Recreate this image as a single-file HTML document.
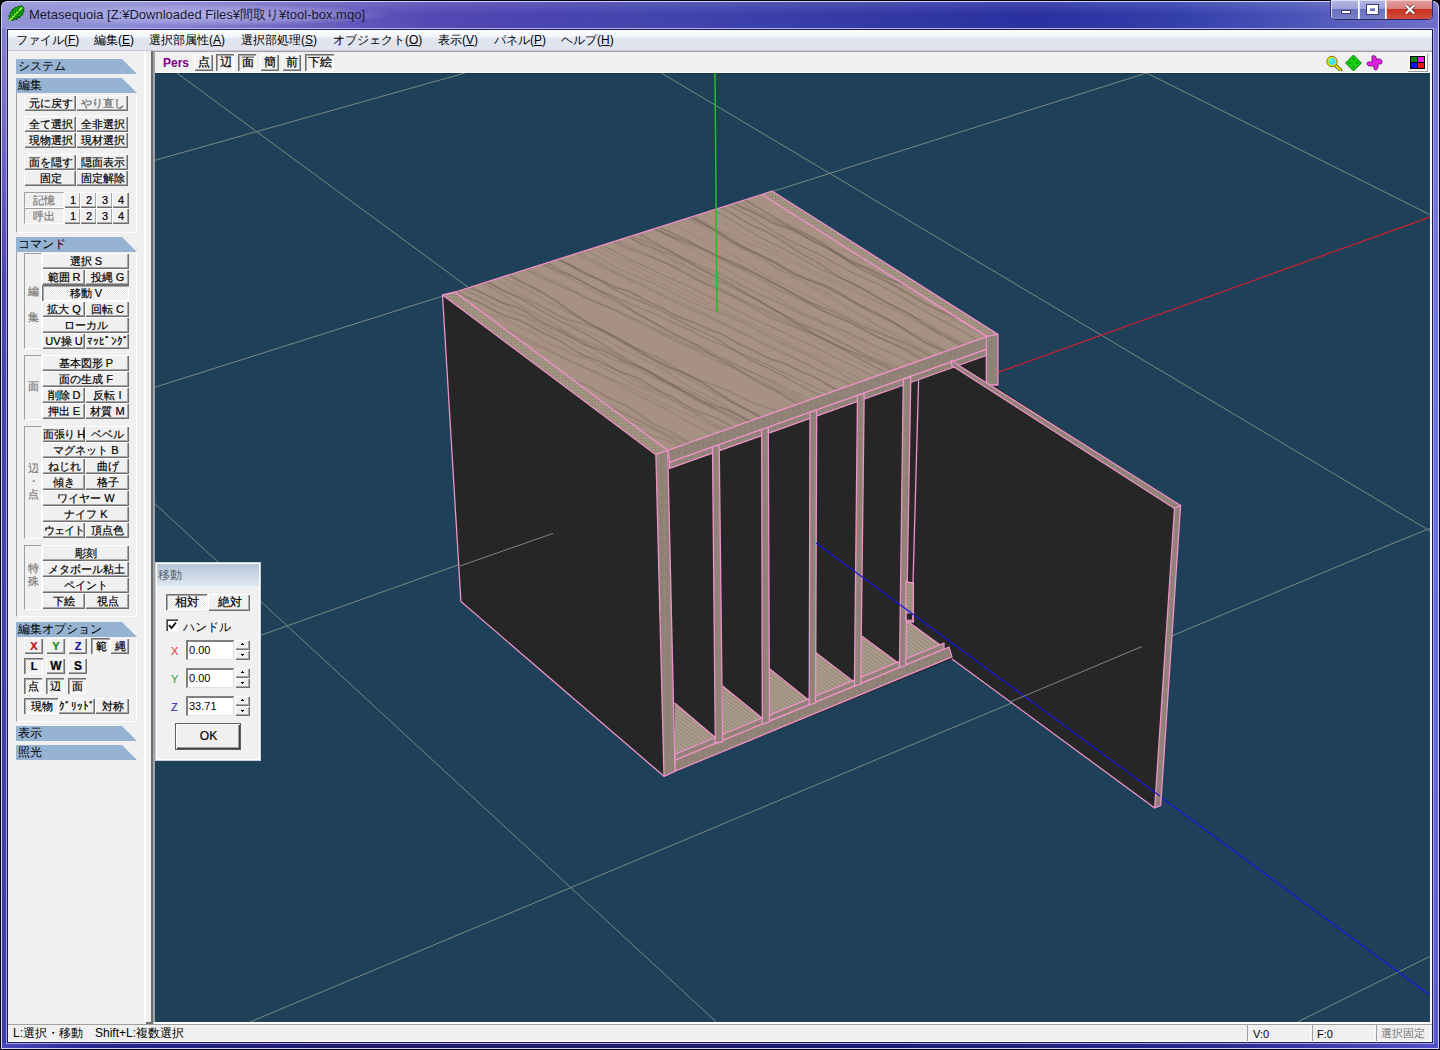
<!DOCTYPE html><html><head><meta charset="utf-8"><style>
*{margin:0;padding:0;box-sizing:border-box}
html,body{width:1440px;height:1050px;overflow:hidden;background:#000}
body{font-family:"Liberation Sans",sans-serif;position:relative}
.abs{position:absolute}
.t{position:absolute;white-space:nowrap;line-height:1}
.btn{position:absolute;background:#f0f0f0;border-top:1px solid #fff;border-left:1px solid #fff;
 box-shadow:inset -1px -1px 0 #6e6e6e, inset -2px -2px 0 #a8a8a8;font-size:11px;color:#000;
 text-align:center;white-space:nowrap;line-height:14px;overflow:hidden;-webkit-text-stroke:0.2px #000}
.btn.p{border-top:1px solid #6e6e6e;border-left:1px solid #6e6e6e;box-shadow:inset 1px 1px 0 #a8a8a8, inset -1px -1px 0 #fff;
 background:repeating-conic-gradient(#fdfdfd 0 25%,#e6e6e6 0 50%) 0 0/2px 2px}
.hdr{position:absolute;left:16px;width:121px;height:15px;background:#96b3d3;
 clip-path:polygon(0 0,106px 0,121px 15px,0 15px);font-size:12px;line-height:15px;padding-left:2px;color:#000}
.box{position:absolute;border-left:1px solid #a0a0a0;border-top:1px solid #fff}
.sub{position:absolute;border-left:1px solid #a0a0a0;border-top:1px solid #a0a0a0;border-right:1px solid #fff;border-bottom:1px solid #fff}
</style></head><body>
<div class="abs" style="left:0;top:0;width:1440px;height:1050px;background:#04040c;border-radius:7px 7px 0 0"></div>
<div class="abs" style="left:1px;top:1px;width:1438px;height:1048px;border-radius:6px 6px 0 0;background:#d0d0f8"></div>
<div class="abs" style="left:2px;top:20px;width:5px;height:1027px;background:linear-gradient(#8484cc 0,#7464c4 12%,#4a44b4 26%,#4040b0 60%,#3c3cac 100%)"></div>
<div class="abs" style="left:1433px;top:20px;width:5px;height:1027px;background:linear-gradient(#7c7cd0 0,#6c70e0 40%,#6464d8 80%,#5a58c8 100%)"></div>
<div class="abs" style="left:2px;top:1043px;width:1436px;height:5px;background:linear-gradient(90deg,#4a48c0 0,#2a2690 6%,#1e1a68 25%,#1e1c70 60%,#2a2a90 85%,#5050c8 100%)"></div>
<div class="abs" style="left:6px;top:28px;width:1428px;height:1016px;border:1px solid #a8a8e8;border-top-color:#b8b8f0"></div>
<div class="abs" style="left:2px;top:2px;width:1436px;height:26px;border-radius:5px 5px 0 0;background:linear-gradient(90deg,#9494d8 0,#8c8cd4 8%,#7c74c8 16%,#6458bc 24%,#5448b4 30%,#4a44b0 38%,#4446ae 44%,#3c40aa 52%,#3238a4 62%,#2a30a0 72%,#3440ac 82%,#4a54b8 90%,#7070c8 100%)"></div>
<div class="abs" style="left:2px;top:2px;width:1436px;height:12px;border-radius:5px 5px 0 0;background:linear-gradient(rgba(255,255,255,.12),rgba(255,255,255,0))"></div>
<div class="abs" style="left:20px;top:4px;width:370px;height:22px;border-radius:11px;background:radial-gradient(ellipse at center,rgba(215,215,250,.6),rgba(215,215,250,.25) 50%,rgba(215,215,250,0) 72%)"></div>
<svg class="abs" style="left:7px;top:5px" width="18" height="18" viewBox="0 0 18 18"><path d="M2 16 L2.5 12 L1.5 11 L3.5 9 L3 7.5 L5 6.5 L5 4.5 L7 4 L8 2.5 L10 2.5 L11.5 1 L13 1.5 L15 0.8 L16 2 L17 3.5 L16.5 5 L17 7 L15.5 8 L15.5 10 L13.5 10.5 L13 12.5 L11 12.5 L10 14.5 L8 14 L6.5 15.5 L4.5 15 Z" fill="#10b010" stroke="#064806" stroke-width="0.9"/><path d="M2 16 L15 2.5" stroke="#c8ff50" stroke-width="1.3"/><path d="M5 13 L3.5 10 M7 11 L5.5 6.5 M9 9 L8 4.5 M11 7 L11 3 M6 13 L10 13.5 M8 11 L13 11.5 M10 9 L15 8.5 M12 7 L16 5" stroke="#066006" stroke-width="0.9"/></svg>
<div class="t" style="left:29px;top:8px;font-size:13px;color:#1a1a30">Metasequoia [Z:¥Downloaded Files¥間取り¥tool-box.mqo]</div>
<div class="abs" style="left:1330px;top:0;width:103px;height:20px;border:1px solid #2a2a60;border-top:none;border-radius:0 0 5px 5px;overflow:hidden;background:#fff"><div class="abs" style="left:0;top:0;width:27px;height:19px;background:linear-gradient(#b4b8e4 0,#9ca2d8 45%,#6a72c0 50%,#7880c8 100%);box-shadow:inset 1px 1px 0 #d8dcf4"></div><div class="abs" style="left:28px;top:0;width:26px;height:19px;background:linear-gradient(#b4b8e4 0,#9ca2d8 45%,#6a72c0 50%,#7880c8 100%);box-shadow:inset 1px 1px 0 #d8dcf4"></div><div class="abs" style="left:55px;top:0;width:48px;height:19px;background:linear-gradient(#e4a0a0 0,#d88080 45%,#c83020 50%,#d05040 100%);box-shadow:inset 1px 1px 0 #f0c8c8"></div><div class="abs" style="left:10px;top:10px;width:10px;height:4px;background:#fff;border:1px solid #404070"></div><div class="abs" style="left:36px;top:5px;width:11px;height:9px;border:3px solid #fff;border-top-width:3px;outline:1px solid #404070"></div><svg class="abs" style="left:73px;top:4px" width="12" height="11" viewBox="0 0 12 11"><path d="M2 1.5 L10 9.5 M10 1.5 L2 9.5" stroke="#503030" stroke-width="3.6"/><path d="M2 1.5 L10 9.5 M10 1.5 L2 9.5" stroke="#fff" stroke-width="2.2"/></svg></div>
<div class="abs" style="left:7px;top:29px;width:1426px;height:1014px;background:#1a1a48"></div>
<div class="abs" style="left:8px;top:30px;width:1424px;height:1012px;background:#f0f0f0"></div>
<div class="abs" style="left:8px;top:30px;width:1424px;height:20px;background:linear-gradient(#fcfcfe 0,#f4f6fa 35%,#e2e6f0 40%,#dee3ef 100%)"></div>
<div class="abs" style="left:8px;top:50px;width:1424px;height:1px;background:#c8c8c8"></div>
<div class="t" style="left:16px;top:34px;font-size:12px;color:#000">ファイル(<u>F</u>)</div>
<div class="t" style="left:94px;top:34px;font-size:12px;color:#000">編集(<u>E</u>)</div>
<div class="t" style="left:149px;top:34px;font-size:12px;color:#000">選択部属性(<u>A</u>)</div>
<div class="t" style="left:241px;top:34px;font-size:12px;color:#000">選択部処理(<u>S</u>)</div>
<div class="t" style="left:333px;top:34px;font-size:12px;color:#000">オブジェクト(<u>O</u>)</div>
<div class="t" style="left:438px;top:34px;font-size:12px;color:#000">表示(<u>V</u>)</div>
<div class="t" style="left:494px;top:34px;font-size:12px;color:#000">パネル(<u>P</u>)</div>
<div class="t" style="left:561px;top:34px;font-size:12px;color:#000">ヘルプ(<u>H</u>)</div>
<div class="abs" style="left:144px;top:51px;width:2px;height:971px;background:#fff"></div>
<div class="abs" style="left:146px;top:51px;width:5px;height:971px;background:#eef0f2"></div>
<div class="abs" style="left:151px;top:51px;width:2px;height:973px;background:#6d6d6d"></div>
<div class="abs" style="left:153px;top:51px;width:2px;height:972px;background:#a0a4a8"></div>
<div class="abs" style="left:146px;top:1022px;width:7px;height:2px;background:#707070"></div>
<div class="hdr" style="top:59px">システム</div>
<div class="hdr" style="top:78px">編集</div>
<div class="abs" style="left:16px;top:93px;width:121px;height:140px;border-left:1px solid #a0a0a0;border-right:1px solid #fff;border-bottom:1px solid #fff"></div>
<div class="btn" style="left:24px;top:95px;width:52px;height:16px;">元に戻す</div>
<div class="btn" style="left:76px;top:95px;width:52px;height:16px;"><span style="color:#a0a0a0">やり直し</span></div>
<div class="btn" style="left:24px;top:116px;width:52px;height:16px;">全て選択</div>
<div class="btn" style="left:76px;top:116px;width:52px;height:16px;">全非選択</div>
<div class="btn" style="left:24px;top:132px;width:52px;height:16px;">現物選択</div>
<div class="btn" style="left:76px;top:132px;width:52px;height:16px;">現材選択</div>
<div class="btn" style="left:24px;top:154px;width:52px;height:16px;">面を隠す</div>
<div class="btn" style="left:76px;top:154px;width:52px;height:16px;">隠面表示</div>
<div class="btn" style="left:24px;top:170px;width:52px;height:16px;">固定</div>
<div class="btn" style="left:76px;top:170px;width:52px;height:16px;">固定解除</div>
<div class="abs" style="left:24px;top:192px;width:40px;height:16px;border-left:1px solid #a0a0a0;border-top:1px solid #a0a0a0;border-right:1px solid #fff;border-bottom:1px solid #fff;font-size:11px;color:#7a7a7a;text-align:center;line-height:14px;-webkit-text-stroke:0.2px #7a7a7a">記憶</div>
<div class="abs" style="left:24px;top:208px;width:40px;height:16px;border-left:1px solid #a0a0a0;border-top:1px solid #a0a0a0;border-right:1px solid #fff;border-bottom:1px solid #fff;font-size:11px;color:#7a7a7a;text-align:center;line-height:14px;-webkit-text-stroke:0.2px #7a7a7a">呼出</div>
<div class="btn" style="left:64px;top:192px;width:17px;height:16px;">1</div>
<div class="btn" style="left:64px;top:208px;width:17px;height:16px;">1</div>
<div class="btn" style="left:80px;top:192px;width:17px;height:16px;">2</div>
<div class="btn" style="left:80px;top:208px;width:17px;height:16px;">2</div>
<div class="btn" style="left:96px;top:192px;width:17px;height:16px;">3</div>
<div class="btn" style="left:96px;top:208px;width:17px;height:16px;">3</div>
<div class="btn" style="left:112px;top:192px;width:17px;height:16px;">4</div>
<div class="btn" style="left:112px;top:208px;width:17px;height:16px;">4</div>
<div class="hdr" style="top:237px">コマンド</div>
<div class="abs" style="left:16px;top:252px;width:121px;height:365px;border-left:1px solid #a0a0a0;border-right:1px solid #fff;border-bottom:1px solid #fff"></div>
<div class="abs" style="left:24px;top:253px;width:18px;height:96px;border-left:1px solid #a0a0a0;border-top:1px solid #a0a0a0;border-right:1px solid #fff;border-bottom:1px solid #fff"></div>
<div class="t" style="left:24px;top:285px;width:18px;font-size:11px;color:#7a7a7a;text-align:center;line-height:13px;white-space:normal;-webkit-text-stroke:0.2px #7a7a7a">編<br><br>集</div>
<div class="btn" style="left:42px;top:253px;width:87px;height:16px;">選択 S</div>
<div class="btn" style="left:42px;top:269px;width:43px;height:16px;">範囲 R</div>
<div class="btn" style="left:85px;top:269px;width:44px;height:16px;">投縄 G</div>
<div class="btn p" style="left:42px;top:285px;width:87px;height:16px;">移動 V</div>
<div class="btn" style="left:42px;top:301px;width:43px;height:16px;">拡大 Q</div>
<div class="btn" style="left:85px;top:301px;width:44px;height:16px;">回転 C</div>
<div class="btn" style="left:42px;top:317px;width:87px;height:16px;">ローカル</div>
<div class="btn" style="left:42px;top:333px;width:43px;height:16px;">UV操 U</div>
<div class="btn" style="left:85px;top:333px;width:44px;height:16px;">ﾏｯﾋﾟﾝｸﾞ</div>
<div class="abs" style="left:24px;top:355px;width:18px;height:65px;border-left:1px solid #a0a0a0;border-top:1px solid #a0a0a0;border-right:1px solid #fff;border-bottom:1px solid #fff"></div>
<div class="t" style="left:24px;top:380px;width:18px;font-size:11px;color:#7a7a7a;text-align:center;line-height:13px;white-space:normal;-webkit-text-stroke:0.2px #7a7a7a">面</div>
<div class="btn" style="left:42px;top:355px;width:87px;height:16px;">基本図形 P</div>
<div class="btn" style="left:42px;top:371px;width:87px;height:16px;">面の生成 F</div>
<div class="btn" style="left:42px;top:387px;width:43px;height:16px;">削除 D</div>
<div class="btn" style="left:85px;top:387px;width:44px;height:16px;">反転 I</div>
<div class="btn" style="left:42px;top:403px;width:43px;height:16px;">押出 E</div>
<div class="btn" style="left:85px;top:403px;width:44px;height:16px;">材質 M</div>
<div class="abs" style="left:24px;top:426px;width:18px;height:113px;border-left:1px solid #a0a0a0;border-top:1px solid #a0a0a0;border-right:1px solid #fff;border-bottom:1px solid #fff"></div>
<div class="t" style="left:24px;top:462px;width:18px;font-size:11px;color:#7a7a7a;text-align:center;line-height:13px;white-space:normal;-webkit-text-stroke:0.2px #7a7a7a">辺<br>・<br>点</div>
<div class="btn" style="left:42px;top:426px;width:43px;height:16px;"><span style="letter-spacing:-0.6px">面張り H</span></div>
<div class="btn" style="left:85px;top:426px;width:44px;height:16px;">ベベル</div>
<div class="btn" style="left:42px;top:442px;width:87px;height:16px;">マグネット B</div>
<div class="btn" style="left:42px;top:458px;width:43px;height:16px;">ねじれ</div>
<div class="btn" style="left:85px;top:458px;width:44px;height:16px;">曲げ</div>
<div class="btn" style="left:42px;top:474px;width:43px;height:16px;">傾き</div>
<div class="btn" style="left:85px;top:474px;width:44px;height:16px;">格子</div>
<div class="btn" style="left:42px;top:490px;width:87px;height:16px;">ワイヤー W</div>
<div class="btn" style="left:42px;top:506px;width:87px;height:16px;">ナイフ K</div>
<div class="btn" style="left:42px;top:522px;width:43px;height:16px;"><span style="letter-spacing:-0.8px">ウェイト</span></div>
<div class="btn" style="left:85px;top:522px;width:44px;height:16px;">頂点色</div>
<div class="abs" style="left:24px;top:545px;width:18px;height:65px;border-left:1px solid #a0a0a0;border-top:1px solid #a0a0a0;border-right:1px solid #fff;border-bottom:1px solid #fff"></div>
<div class="t" style="left:24px;top:562px;width:18px;font-size:11px;color:#7a7a7a;text-align:center;line-height:13px;white-space:normal;-webkit-text-stroke:0.2px #7a7a7a">特<br>殊</div>
<div class="btn" style="left:42px;top:545px;width:87px;height:16px;">彫刻</div>
<div class="btn" style="left:42px;top:561px;width:87px;height:16px;">メタボール粘土</div>
<div class="btn" style="left:42px;top:577px;width:87px;height:16px;">ペイント</div>
<div class="btn" style="left:42px;top:593px;width:43px;height:16px;">下絵</div>
<div class="btn" style="left:85px;top:593px;width:44px;height:16px;">視点</div>
<div class="hdr" style="top:622px">編集オプション</div>
<div class="abs" style="left:16px;top:637px;width:121px;height:85px;border-left:1px solid #a0a0a0;border-right:1px solid #fff;border-bottom:1px solid #fff"></div>
<div class="btn" style="left:24px;top:638px;width:19px;height:16px;"><b style="color:#e01010;font-size:11px">X</b></div>
<div class="btn" style="left:46px;top:638px;width:19px;height:16px;"><b style="color:#10a010;font-size:11px">Y</b></div>
<div class="btn" style="left:68px;top:638px;width:19px;height:16px;"><b style="color:#1010d0;font-size:11px">Z</b></div>
<div class="btn p" style="left:91px;top:638px;width:19px;height:16px;">範</div>
<div class="btn" style="left:110px;top:638px;width:19px;height:16px;">縄</div>
<div class="btn p" style="left:24px;top:658px;width:19px;height:16px;"><b style="font-size:11px">L</b></div>
<div class="btn" style="left:46px;top:658px;width:19px;height:16px;"><b style="font-size:12px">W</b></div>
<div class="btn" style="left:68px;top:658px;width:19px;height:16px;"><b style="font-size:12px">S</b></div>
<div class="btn p" style="left:24px;top:678px;width:18px;height:16px;">点</div>
<div class="btn p" style="left:46px;top:678px;width:18px;height:16px;">辺</div>
<div class="btn p" style="left:68px;top:678px;width:18px;height:16px;">面</div>
<div class="btn p" style="left:24px;top:698px;width:34px;height:16px;">現物</div>
<div class="btn" style="left:58px;top:698px;width:37px;height:16px;">ｸﾞﾘｯﾄﾞ</div>
<div class="btn" style="left:95px;top:698px;width:34px;height:16px;">対称</div>
<div class="hdr" style="top:726px">表示</div>
<div class="hdr" style="top:745px">照光</div>
<div class="abs" style="left:154px;top:51px;width:1278px;height:1px;background:#a0a0a0"></div>
<div class="abs" style="left:155px;top:52px;width:1275px;height:21px;background:#f0f0f0"></div>
<div class="abs" style="left:155px;top:72px;width:1275px;height:1px;background:#fafafa"></div>
<div class="abs" style="left:1430px;top:52px;width:2px;height:972px;background:#fff"></div>
<div class="t" style="left:163px;top:57px;font-size:12px;font-weight:bold;color:#800080">Pers</div>
<div class="btn" style="left:194px;top:54px;width:19px;height:17px;font-size:12px;line-height:15px">点</div>
<div class="btn p" style="left:216px;top:54px;width:18px;height:17px;font-size:12px;line-height:15px">辺</div>
<div class="btn p" style="left:238px;top:54px;width:18px;height:17px;font-size:12px;line-height:15px">面</div>
<div class="btn" style="left:260px;top:54px;width:19px;height:17px;font-size:12px;line-height:15px">簡</div>
<div class="btn" style="left:282px;top:54px;width:19px;height:17px;font-size:12px;line-height:15px">前</div>
<div class="btn p" style="left:305px;top:54px;width:29px;height:17px;font-size:12px;line-height:15px">下絵</div>
<svg class="abs" style="left:1325px;top:55px" width="18" height="16" viewBox="0 0 18 16"><path d="M10.5 10.5 L15.5 15" stroke="#404000" stroke-width="3.2" stroke-linecap="round"/><path d="M10.5 10.5 L15.5 15" stroke="#f0e800" stroke-width="1.8" stroke-linecap="round"/><circle cx="7" cy="6.5" r="5.2" fill="#f0e800" stroke="#606000" stroke-width="0.8"/><circle cx="7" cy="6.5" r="3.4" fill="#30e0f0"/><circle cx="6" cy="5.5" r="1" fill="#c0ffff"/></svg>
<svg class="abs" style="left:1345px;top:55px" width="17" height="16" viewBox="0 0 17 16"><path d="M8.5 0 L16.5 8 L8.5 16 L0.5 8 Z" fill="#10d010" stroke="#086008" stroke-width="0.8"/><path d="M8.5 3v2M8.5 11v2M3.5 8h2M11.5 8h2" stroke="#086008" stroke-width="1"/></svg>
<svg class="abs" style="left:1366px;top:55px" width="17" height="16" viewBox="0 0 17 16"><path d="M6 1 C9 0 11 2 10 4 L13 4 C16 4 17 7 15 9 L12 9 L12 12 C12 15 9 16 8 14 L8 11 L4 11 C1 11 0 8 2 7 L6 7 Z" fill="#e020e0" stroke="#700070" stroke-width="0.8"/></svg>
<div class="abs" style="left:1408px;top:54px;width:20px;height:18px;background:#f8f8f8;box-shadow:inset -1px -1px 0 #a0a0a0"></div>
<div class="abs" style="left:1410px;top:56px;width:15px;height:13px;background:#000"></div>
<div class="abs" style="left:1411px;top:57px;width:6px;height:5px;background:#108010"></div>
<div class="abs" style="left:1418px;top:57px;width:6px;height:5px;background:#f020f0"></div>
<div class="abs" style="left:1411px;top:63px;width:6px;height:5px;background:#1010f0"></div>
<div class="abs" style="left:1418px;top:63px;width:6px;height:5px;background:#f01010"></div>
<div class="abs" style="left:154px;top:1022px;width:1278px;height:2px;background:#fff"></div>
<div class="abs" style="left:8px;top:1024px;width:1424px;height:1px;background:#a0a0a0"></div>
<div class="abs" style="left:8px;top:1025px;width:1424px;height:16px;background:#f0f0f0"></div>
<div class="abs" style="left:8px;top:1041px;width:1424px;height:1px;background:#fff"></div>
<div class="t" style="left:13px;top:1027px;font-size:12px;color:#000">L:選択・移動　Shift+L:複数選択</div>
<div class="abs" style="left:1247px;top:1025px;width:64px;height:16px;border-left:1px solid #a0a0a0;border-right:1px solid #fff"></div>
<div class="abs" style="left:1312px;top:1025px;width:63px;height:16px;border-left:1px solid #a0a0a0;border-right:1px solid #fff"></div>
<div class="abs" style="left:1376px;top:1025px;width:55px;height:16px;border-left:1px solid #a0a0a0;border-right:1px solid #fff"></div>
<div class="t" style="left:1253px;top:1029px;font-size:11px;color:#000">V:0</div>
<div class="t" style="left:1317px;top:1029px;font-size:11px;color:#000">F:0</div>
<div class="t" style="left:1381px;top:1028px;font-size:11px;color:#707070">選択固定</div>
<svg class="abs" style="left:155px;top:73px" width="1275" height="949" viewBox="155 73 1275 949" shape-rendering="geometricPrecision">
<rect x="155" y="73" width="1275" height="949" fill="#1f4059"/>
<rect x="155" y="73" width="1275" height="1" fill="#1a3448"/>
<line x1="154" y1="160.5" x2="464.9" y2="73" stroke="#788a7e" stroke-width="1.0"/>
<line x1="154" y1="387.5" x2="1146.6" y2="73" stroke="#788a7e" stroke-width="1.0"/>
<line x1="154" y1="673.4" x2="998" y2="372.4" stroke="#788a7e" stroke-width="1.0"/>
<line x1="250" y1="1022" x2="1388.9" y2="545" stroke="#788a7e" stroke-width="1.0"/>
<line x1="1388.9" y1="545" x2="1430" y2="528.4" stroke="#788a7e" stroke-width="1.0"/>
<line x1="1297.4" y1="1022" x2="1430" y2="956.4" stroke="#788a7e" stroke-width="1.0"/>
<line x1="176.9" y1="73" x2="816" y2="543" stroke="#788a7e" stroke-width="1.0"/>
<line x1="154" y1="502.9" x2="716.3" y2="1022" stroke="#788a7e" stroke-width="1.0"/>
<line x1="661.3" y1="73" x2="1430" y2="531" stroke="#788a7e" stroke-width="1.0"/>
<line x1="1146.6" y1="73" x2="1430" y2="214.7" stroke="#788a7e" stroke-width="1.0"/>
<line x1="998" y1="372.4" x2="1430" y2="217" stroke="#d02030" stroke-width="1.2"/>
<line x1="816" y1="543" x2="1430" y2="995.3" stroke="#1818e0" stroke-width="1.2"/>
<defs>
<pattern id="stripTex" patternUnits="userSpaceOnUse" width="6" height="9"><rect width="6" height="9" fill="#918278"/><rect x="1" y="0" width="1" height="5" fill="#7e7066" opacity="0.3"/><rect x="4" y="3" width="1" height="6" fill="#a09086" opacity="0.35"/></pattern>
<pattern id="dotTex" patternUnits="userSpaceOnUse" width="3" height="3"><rect width="3" height="3" fill="#a29282"/><rect x="1" y="1" width="1" height="1" fill="#7e7264" opacity="0.6"/></pattern>
<pattern id="floorTex" patternUnits="userSpaceOnUse" width="3" height="3" patternTransform="rotate(35)"><rect width="3" height="3" fill="#ab9c8c"/><rect y="0" width="3" height="1" fill="#8e8072" opacity="0.7"/></pattern>
<clipPath id="topClip"><polygon points="455,292 762,194.5 987.2,336.6 667.7,450.5"/></clipPath>
<filter id="gblur" x="-5%" y="-5%" width="110%" height="110%"><feGaussianBlur stdDeviation="0.7"/></filter>
</defs>
<polygon points="442.5,295.0 772.0,191.0 997.9,334.4 997.9,388.0 1180.6,505.5 1160.7,805.3 1154.7,808.0 952.0,659.0 664.0,776.3 460.9,601.5" fill="#262626" />
<line x1="460" y1="566" x2="553" y2="533.4" stroke="#788a7e" stroke-width="1"/>
<polygon points="455.0,292.0 762.0,194.5 987.2,336.6 667.7,450.5" fill="#a69183" />
<g clip-path="url(#topClip)"><g filter="url(#gblur)">
<polyline points="430.0,-111.3 436.0,-108.0 442.0,-104.9 448.0,-101.8 454.0,-98.8 460.0,-95.8 466.0,-92.9 472.0,-89.9 478.0,-86.7 484.0,-83.4 490.0,-79.9 496.0,-76.5 502.0,-73.0 508.0,-69.7 514.0,-66.5 520.0,-63.5 526.0,-60.5 532.0,-57.5 538.0,-54.5 544.0,-51.4 550.0,-48.1 556.0,-44.9 562.0,-41.7 568.0,-38.5 574.0,-35.5 580.0,-32.7 586.0,-29.9 592.0,-27.1 598.0,-24.3 604.0,-21.3 610.0,-18.1 616.0,-14.9 622.0,-11.6 628.0,-8.3 634.0,-5.1 640.0,-2.0 646.0,1.1 652.0,4.1 658.0,7.2 664.0,10.3 670.0,13.6 676.0,17.0 682.0,20.5 688.0,23.9 694.0,27.2 700.0,30.4 706.0,33.4 712.0,36.3 718.0,39.1 724.0,42.1 730.0,45.1 736.0,48.2 742.0,51.4 748.0,54.6 754.0,57.7 760.0,60.8 766.0,63.7 772.0,66.5 778.0,69.3 784.0,72.2 790.0,75.2 796.0,78.4 802.0,81.7 808.0,85.1 814.0,88.5 820.0,91.8 826.0,95.0 832.0,98.1 838.0,101.2 844.0,104.2 850.0,107.4 856.0,110.6 862.0,113.9 868.0,117.3 874.0,120.6 880.0,123.9 886.0,127.0 892.0,130.0 898.0,132.8 904.0,135.6 910.0,138.5 916.0,141.4 922.0,144.4 928.0,147.6 934.0,150.8 940.0,154.0 946.0,157.1 952.0,160.1 958.0,163.1 964.0,166.0 970.0,168.9 976.0,172.0 982.0,175.2 988.0,178.5 994.0,182.0 1000.0,185.4 1006.0,188.8" fill="none" stroke="#5a4c44" stroke-width="1.0" opacity="0.25"/>
<polyline points="430.0,-101.9 436.0,-99.0 442.0,-96.6 448.0,-94.5 454.0,-92.0 460.0,-88.9 466.0,-85.7 472.0,-82.9 478.0,-80.3 484.0,-77.5 490.0,-74.1 496.0,-70.5 502.0,-67.2 508.0,-64.5 514.0,-62.0 520.0,-59.2 526.0,-56.1 532.0,-53.1 538.0,-50.7 544.0,-48.5 550.0,-46.1 556.0,-42.9 562.0,-39.6 568.0,-36.4 574.0,-33.6 580.0,-30.8 586.0,-27.6 592.0,-24.1 598.0,-20.8 604.0,-18.1 610.0,-15.9 616.0,-13.3 622.0,-10.4 628.0,-7.4 634.0,-4.8 640.0,-2.4 646.0,0.1 652.0,3.3 658.0,6.8 664.0,10.2 670.0,13.1 676.0,15.8 682.0,18.8 688.0,22.1 694.0,25.3 700.0,27.9 706.0,30.1 712.0,32.4 718.0,35.3 724.0,38.4 730.0,41.3 736.0,43.9 742.0,46.5 748.0,49.7 754.0,53.3 760.0,56.8 766.0,59.7 772.0,62.3 778.0,65.0 784.0,68.1 790.0,71.2 796.0,73.8 802.0,76.0 808.0,78.3 814.0,81.1 820.0,84.4 826.0,87.6 832.0,90.4 838.0,93.1 844.0,96.2 850.0,99.8 856.0,103.3 862.0,106.2 868.0,108.6 874.0,111.0 880.0,113.9 886.0,116.9 892.0,119.7 898.0,122.0 904.0,124.3 910.0,127.2 916.0,130.7 922.0,134.1 928.0,137.1 934.0,139.8 940.0,142.8 946.0,146.1 952.0,149.5 958.0,152.4 964.0,154.7 970.0,156.9 976.0,159.6 982.0,162.7 988.0,165.6 994.0,168.2 1000.0,170.7 1006.0,173.6" fill="none" stroke="#5a4c44" stroke-width="1.4" opacity="0.21"/>
<polyline points="430.0,-98.3 436.0,-94.7 442.0,-91.4 448.0,-88.2 454.0,-85.0 460.0,-81.4 466.0,-77.6 472.0,-73.6 478.0,-69.9 484.0,-66.4 490.0,-63.2 496.0,-59.9 502.0,-56.4 508.0,-52.8 514.0,-49.2 520.0,-45.9 526.0,-42.9 532.0,-40.0 538.0,-36.8 544.0,-33.3 550.0,-29.6 556.0,-26.0 562.0,-22.5 568.0,-19.2 574.0,-15.9 580.0,-12.2 586.0,-8.4 592.0,-4.5 598.0,-0.8 604.0,2.5 610.0,5.6 616.0,8.8 622.0,12.2 628.0,15.7 634.0,19.2 640.0,22.5 646.0,25.5 652.0,28.5 658.0,31.8 664.0,35.5 670.0,39.3 676.0,43.1 682.0,46.6 688.0,49.9 694.0,53.3 700.0,56.9 706.0,60.7 712.0,64.5 718.0,68.0 724.0,71.2 730.0,74.1 736.0,77.2 742.0,80.6 748.0,84.1 754.0,87.6 760.0,91.0 766.0,94.1 772.0,97.3 778.0,100.7 784.0,104.5 790.0,108.4 796.0,112.2 802.0,115.8 808.0,119.0 814.0,122.4 820.0,125.9 826.0,129.5 832.0,133.2 838.0,136.5 844.0,139.6 850.0,142.5 856.0,145.6 862.0,149.0 868.0,152.7 874.0,156.3 880.0,159.7 886.0,163.0 892.0,166.3 898.0,169.9 904.0,173.7 910.0,177.6 916.0,181.4 922.0,184.8 928.0,188.0 934.0,191.1 940.0,194.5 946.0,198.1 952.0,201.6 958.0,204.9 964.0,207.9 970.0,210.9 976.0,214.1 982.0,217.7 988.0,221.5 994.0,225.2 1000.0,228.7 1006.0,232.1" fill="none" stroke="#5a4c44" stroke-width="1.4" opacity="0.25"/>
<polyline points="430.0,-97.5 436.0,-94.3 442.0,-90.9 448.0,-87.4 454.0,-84.0 460.0,-80.7 466.0,-77.6 472.0,-74.7 478.0,-71.9 484.0,-69.1 490.0,-66.1 496.0,-63.0 502.0,-59.8 508.0,-56.7 514.0,-53.6 520.0,-50.7 526.0,-48.0 532.0,-45.4 538.0,-42.8 544.0,-40.0 550.0,-37.1 556.0,-34.0 562.0,-30.7 568.0,-27.4 574.0,-24.2 580.0,-21.2 586.0,-18.2 592.0,-15.3 598.0,-12.4 604.0,-9.3 610.0,-6.0 616.0,-2.6 622.0,0.8 628.0,4.2 634.0,7.4 640.0,10.3 646.0,13.1 652.0,15.8 658.0,18.5 664.0,21.4 670.0,24.4 676.0,27.6 682.0,30.7 688.0,33.7 694.0,36.6 700.0,39.3 706.0,42.0 712.0,44.7 718.0,47.5 724.0,50.6 730.0,53.9 736.0,57.2 742.0,60.6 748.0,63.9 754.0,67.0 760.0,70.0 766.0,72.9 772.0,75.9 778.0,79.0 784.0,82.2 790.0,85.6 796.0,88.9 802.0,92.1 808.0,95.1 814.0,97.9 820.0,100.6 826.0,103.2 832.0,105.9 838.0,108.7 844.0,111.7 850.0,114.9 856.0,118.0 862.0,121.1 868.0,124.0 874.0,126.8 880.0,129.6 886.0,132.4 892.0,135.4 898.0,138.7 904.0,142.0 910.0,145.5 916.0,148.9 922.0,152.2 928.0,155.3 934.0,158.2 940.0,161.1 946.0,164.0 952.0,167.0 958.0,170.1 964.0,173.3 970.0,176.6 976.0,179.6 982.0,182.5 988.0,185.2 994.0,187.8 1000.0,190.4 1006.0,193.1" fill="none" stroke="#5a4c44" stroke-width="1.4" opacity="0.13"/>
<polyline points="430.0,-92.2 436.0,-89.0 442.0,-84.8 448.0,-80.1 454.0,-75.9 460.0,-72.7 466.0,-70.0 472.0,-67.2 478.0,-63.7 484.0,-59.8 490.0,-56.4 496.0,-54.0 502.0,-52.2 508.0,-50.2 514.0,-47.4 520.0,-43.6 526.0,-39.7 532.0,-36.4 538.0,-33.6 544.0,-30.7 550.0,-27.1 556.0,-22.6 562.0,-18.1 568.0,-14.3 574.0,-11.5 580.0,-9.3 586.0,-6.7 592.0,-3.4 598.0,0.1 604.0,3.2 610.0,5.5 616.0,7.4 622.0,9.8 628.0,13.2 634.0,17.5 640.0,21.7 646.0,25.2 652.0,28.1 658.0,31.1 664.0,34.9 670.0,39.2 676.0,43.3 682.0,46.5 688.0,48.7 694.0,50.6 700.0,53.1 706.0,56.4 712.0,59.9 718.0,63.0 724.0,65.4 730.0,67.7 736.0,70.7 742.0,74.7 748.0,79.3 754.0,83.6 760.0,86.9 766.0,89.7 772.0,92.7 778.0,96.2 784.0,100.2 790.0,103.8 796.0,106.4 802.0,108.2 808.0,110.1 814.0,112.8 820.0,116.4 826.0,120.2 832.0,123.5 838.0,126.2 844.0,128.9 850.0,132.4 856.0,136.8 862.0,141.4 868.0,145.4 874.0,148.3 880.0,150.8 886.0,153.4 892.0,156.8 898.0,160.4 904.0,163.6 910.0,165.9 916.0,167.7 922.0,169.9 928.0,173.1 934.0,177.2 940.0,181.3 946.0,184.7 952.0,187.7 958.0,190.7 964.0,194.4 970.0,198.8 976.0,203.1 982.0,206.5 988.0,208.9 994.0,210.9 1000.0,213.4 1006.0,216.7" fill="none" stroke="#5a4c44" stroke-width="1.0" opacity="0.13"/>
<polyline points="430.0,-82.0 436.0,-78.4 442.0,-74.9 448.0,-71.8 454.0,-69.0 460.0,-66.4 466.0,-63.7 472.0,-60.9 478.0,-57.9 484.0,-54.7 490.0,-51.4 496.0,-48.2 502.0,-45.2 508.0,-42.4 514.0,-39.8 520.0,-37.3 526.0,-34.7 532.0,-31.9 538.0,-28.7 544.0,-25.3 550.0,-21.6 556.0,-18.0 562.0,-14.4 568.0,-11.1 574.0,-7.9 580.0,-5.0 586.0,-2.0 592.0,1.1 598.0,4.4 604.0,8.0 610.0,11.6 616.0,15.2 622.0,18.6 628.0,21.7 634.0,24.4 640.0,27.0 646.0,29.4 652.0,32.0 658.0,34.8 664.0,37.9 670.0,41.1 676.0,44.4 682.0,47.6 688.0,50.7 694.0,53.5 700.0,56.2 706.0,58.9 712.0,61.7 718.0,64.9 724.0,68.4 730.0,72.1 736.0,75.9 742.0,79.6 748.0,83.1 754.0,86.3 760.0,89.3 766.0,92.2 772.0,95.1 778.0,98.2 784.0,101.4 790.0,104.9 796.0,108.3 802.0,111.6 808.0,114.7 814.0,117.5 820.0,120.0 826.0,122.4 832.0,124.9 838.0,127.6 844.0,130.6 850.0,133.8 856.0,137.2 862.0,140.6 868.0,144.0 874.0,147.1 880.0,150.0 886.0,152.8 892.0,155.8 898.0,158.9 904.0,162.3 910.0,166.0 916.0,169.8 922.0,173.5 928.0,177.1 934.0,180.4 940.0,183.3 946.0,186.1 952.0,188.8 958.0,191.6 964.0,194.6 970.0,197.8 976.0,201.1 982.0,204.4 988.0,207.5 994.0,210.3 1000.0,213.0 1006.0,215.5" fill="none" stroke="#5a4c44" stroke-width="2.2" opacity="0.18"/>
<polyline points="430.0,-77.4 436.0,-75.0 442.0,-72.5 448.0,-69.7 454.0,-66.4 460.0,-62.8 466.0,-59.3 472.0,-56.1 478.0,-53.2 484.0,-50.3 490.0,-47.0 496.0,-43.3 502.0,-39.2 508.0,-35.2 514.0,-31.6 520.0,-28.5 526.0,-25.7 532.0,-22.8 538.0,-19.6 544.0,-16.1 550.0,-12.6 556.0,-9.5 562.0,-6.7 568.0,-4.3 574.0,-1.8 580.0,1.2 586.0,4.7 592.0,8.5 598.0,12.2 604.0,15.6 610.0,18.7 616.0,21.7 622.0,25.1 628.0,28.8 634.0,32.8 640.0,36.7 646.0,40.1 652.0,43.0 658.0,45.6 664.0,48.3 670.0,51.3 676.0,54.7 682.0,58.1 688.0,61.2 694.0,64.0 700.0,66.6 706.0,69.3 712.0,72.6 718.0,76.3 724.0,80.3 730.0,84.1 736.0,87.6 742.0,90.7 748.0,93.8 754.0,97.1 760.0,100.7 766.0,104.5 772.0,108.1 778.0,111.3 784.0,114.0 790.0,116.4 796.0,119.0 802.0,122.0 808.0,125.4 814.0,128.9 820.0,132.2 826.0,135.2 832.0,138.0 838.0,140.9 844.0,144.4 850.0,148.3 856.0,152.3 862.0,156.2 868.0,159.7 874.0,162.7 880.0,165.6 886.0,168.7 892.0,172.1 898.0,175.7 904.0,179.1 910.0,182.1 916.0,184.7 922.0,187.1 928.0,189.7 934.0,192.8 940.0,196.4 946.0,200.1 952.0,203.6 958.0,206.8 964.0,209.8 970.0,212.9 976.0,216.5 982.0,220.4 988.0,224.4 994.0,228.2 1000.0,231.4 1006.0,234.2" fill="none" stroke="#5a4c44" stroke-width="1.0" opacity="0.12"/>
<polyline points="430.0,-74.7 436.0,-71.3 442.0,-68.2 448.0,-65.2 454.0,-62.0 460.0,-58.5 466.0,-54.7 472.0,-50.9 478.0,-47.5 484.0,-44.5 490.0,-42.0 496.0,-39.6 502.0,-36.9 508.0,-33.9 514.0,-30.5 520.0,-27.2 526.0,-24.1 532.0,-21.3 538.0,-18.7 544.0,-15.9 550.0,-12.6 556.0,-8.9 562.0,-4.9 568.0,-1.0 574.0,2.5 580.0,5.6 586.0,8.5 592.0,11.5 598.0,14.8 604.0,18.4 610.0,21.9 616.0,25.2 622.0,28.1 628.0,30.5 634.0,32.8 640.0,35.4 646.0,38.5 652.0,41.9 658.0,45.4 664.0,48.8 670.0,51.8 676.0,54.7 682.0,57.6 688.0,60.9 694.0,64.7 700.0,68.7 706.0,72.6 712.0,76.1 718.0,79.1 724.0,81.9 730.0,84.6 736.0,87.7 742.0,91.0 748.0,94.4 754.0,97.6 760.0,100.4 766.0,102.9 772.0,105.3 778.0,108.0 784.0,111.1 790.0,114.7 796.0,118.5 802.0,122.1 808.0,125.3 814.0,128.4 820.0,131.4 826.0,134.7 832.0,138.3 838.0,142.2 844.0,146.0 850.0,149.4 856.0,152.3 862.0,154.8 868.0,157.3 874.0,160.1 880.0,163.3 886.0,166.7 892.0,169.9 898.0,172.9 904.0,175.5 910.0,178.0 916.0,180.9 922.0,184.2 928.0,188.0 934.0,191.9 940.0,195.7 946.0,199.1 952.0,202.1 958.0,205.1 964.0,208.2 970.0,211.7 976.0,215.4 982.0,219.0 988.0,222.2 994.0,224.9 1000.0,227.3 1006.0,229.7" fill="none" stroke="#5a4c44" stroke-width="0.8" opacity="0.13"/>
<polyline points="430.0,-70.1 436.0,-66.0 442.0,-62.2 448.0,-59.4 454.0,-57.1 460.0,-54.6 466.0,-51.4 472.0,-48.0 478.0,-45.2 484.0,-43.4 490.0,-42.1 496.0,-40.4 502.0,-37.7 508.0,-34.3 514.0,-31.2 520.0,-28.7 526.0,-26.5 532.0,-23.7 538.0,-20.0 544.0,-15.8 550.0,-12.2 556.0,-9.6 562.0,-7.7 568.0,-5.6 574.0,-2.8 580.0,0.4 586.0,3.0 592.0,4.8 598.0,6.2 604.0,8.1 610.0,11.2 616.0,14.9 622.0,18.4 628.0,21.2 634.0,23.6 640.0,26.4 646.0,30.0 652.0,34.0 658.0,37.3 664.0,39.5 670.0,41.1 676.0,42.9 682.0,45.5 688.0,48.5 694.0,51.2 700.0,53.2 706.0,54.9 712.0,57.3 718.0,60.7 724.0,64.7 730.0,68.5 736.0,71.4 742.0,73.7 748.0,76.3 754.0,79.6 760.0,83.2 766.0,86.1 772.0,88.0 778.0,89.4 784.0,91.0 790.0,93.7 796.0,96.9 802.0,99.9 808.0,102.3 814.0,104.4 820.0,107.0 826.0,110.7 832.0,114.8 838.0,118.6 844.0,121.3 850.0,123.4 856.0,125.6 862.0,128.5 868.0,131.7 874.0,134.4 880.0,136.2 886.0,137.6 892.0,139.4 898.0,142.3 904.0,145.8 910.0,149.3 916.0,152.0 922.0,154.3 928.0,157.1 934.0,160.8 940.0,164.8 946.0,168.3 952.0,170.7 958.0,172.4 964.0,174.3 970.0,176.9 976.0,179.9 982.0,182.6 988.0,184.5 994.0,186.1 1000.0,188.3 1006.0,191.5" fill="none" stroke="#5a4c44" stroke-width="1.8" opacity="0.12"/>
<polyline points="430.0,-64.3 436.0,-61.7 442.0,-58.7 448.0,-55.6 454.0,-52.3 460.0,-49.0 466.0,-45.8 472.0,-42.7 478.0,-39.8 484.0,-37.1 490.0,-34.4 496.0,-31.6 502.0,-28.7 508.0,-25.5 514.0,-22.1 520.0,-18.4 526.0,-14.7 532.0,-11.0 538.0,-7.5 544.0,-4.3 550.0,-1.4 556.0,1.3 562.0,3.9 568.0,6.4 574.0,9.0 580.0,11.8 586.0,14.8 592.0,18.0 598.0,21.1 604.0,24.3 610.0,27.2 616.0,30.0 622.0,32.4 628.0,34.8 634.0,37.0 640.0,39.4 646.0,41.9 652.0,44.8 658.0,47.9 664.0,51.3 670.0,54.8 676.0,58.3 682.0,61.7 688.0,64.9 694.0,67.9 700.0,70.7 706.0,73.5 712.0,76.4 718.0,79.4 724.0,82.6 730.0,86.0 736.0,89.6 742.0,93.2 748.0,96.7 754.0,100.0 760.0,103.0 766.0,105.7 772.0,108.2 778.0,110.5 784.0,112.9 790.0,115.3 796.0,118.0 802.0,121.0 808.0,124.0 814.0,127.2 820.0,130.3 826.0,133.3 832.0,136.0 838.0,138.6 844.0,141.0 850.0,143.5 856.0,146.0 862.0,148.8 868.0,151.9 874.0,155.3 880.0,158.9 886.0,162.5 892.0,166.2 898.0,169.7 904.0,172.9 910.0,175.9 916.0,178.8 922.0,181.5 928.0,184.3 934.0,187.2 940.0,190.4 946.0,193.7 952.0,197.1 958.0,200.5 964.0,203.7 970.0,206.8 976.0,209.5 982.0,212.0 988.0,214.3 994.0,216.5 1000.0,218.8 1006.0,221.3" fill="none" stroke="#5a4c44" stroke-width="1.2" opacity="0.25"/>
<polyline points="430.0,-57.9 436.0,-55.4 442.0,-52.8 448.0,-50.2 454.0,-47.3 460.0,-44.2 466.0,-40.9 472.0,-37.4 478.0,-33.8 484.0,-30.2 490.0,-26.7 496.0,-23.3 502.0,-20.2 508.0,-17.1 514.0,-14.1 520.0,-11.1 526.0,-7.9 532.0,-4.6 538.0,-1.1 544.0,2.7 550.0,6.6 556.0,10.5 562.0,14.3 568.0,18.0 574.0,21.4 580.0,24.5 586.0,27.5 592.0,30.2 598.0,33.0 604.0,35.7 610.0,38.6 616.0,41.7 622.0,45.0 628.0,48.3 634.0,51.7 640.0,55.1 646.0,58.3 652.0,61.3 658.0,64.1 664.0,66.8 670.0,69.4 676.0,72.0 682.0,74.7 688.0,77.7 694.0,80.9 700.0,84.4 706.0,88.0 712.0,91.8 718.0,95.6 724.0,99.3 730.0,102.9 736.0,106.2 742.0,109.4 748.0,112.4 754.0,115.5 760.0,118.6 766.0,121.9 772.0,125.4 778.0,129.0 784.0,132.7 790.0,136.5 796.0,140.2 802.0,143.7 808.0,147.0 814.0,150.0 820.0,152.8 826.0,155.4 832.0,158.0 838.0,160.6 844.0,163.3 850.0,166.3 856.0,169.4 862.0,172.7 868.0,176.1 874.0,179.5 880.0,182.8 886.0,186.0 892.0,189.0 898.0,191.8 904.0,194.6 910.0,197.3 916.0,200.2 922.0,203.3 928.0,206.7 934.0,210.3 940.0,214.1 946.0,218.0 952.0,221.9 958.0,225.7 964.0,229.4 970.0,232.8 976.0,236.0 982.0,239.0 988.0,242.0 994.0,245.0 1000.0,248.1 1006.0,251.3" fill="none" stroke="#5a4c44" stroke-width="0.8" opacity="0.29"/>
<polyline points="430.0,-54.7 436.0,-51.5 442.0,-48.0 448.0,-44.4 454.0,-40.5 460.0,-36.6 466.0,-32.8 472.0,-29.2 478.0,-25.9 484.0,-22.9 490.0,-20.0 496.0,-17.2 502.0,-14.3 508.0,-11.2 514.0,-7.9 520.0,-4.5 526.0,-1.1 532.0,2.2 538.0,5.3 544.0,8.2 550.0,10.9 556.0,13.6 562.0,16.3 568.0,19.3 574.0,22.6 580.0,26.1 586.0,29.9 592.0,33.7 598.0,37.4 604.0,40.9 610.0,44.2 616.0,47.3 622.0,50.4 628.0,53.6 634.0,57.0 640.0,60.6 646.0,64.3 652.0,68.1 658.0,71.8 664.0,75.3 670.0,78.4 676.0,81.3 682.0,84.0 688.0,86.7 694.0,89.4 700.0,92.4 706.0,95.6 712.0,98.9 718.0,102.4 724.0,105.7 730.0,109.0 736.0,112.0 742.0,114.9 748.0,117.7 754.0,120.6 760.0,123.7 766.0,127.1 772.0,130.8 778.0,134.6 784.0,138.5 790.0,142.3 796.0,146.0 802.0,149.3 808.0,152.4 814.0,155.5 820.0,158.6 826.0,161.8 832.0,165.2 838.0,168.7 844.0,172.3 850.0,175.9 856.0,179.2 862.0,182.3 868.0,185.1 874.0,187.7 880.0,190.3 886.0,193.0 892.0,195.9 898.0,199.1 904.0,202.5 910.0,206.0 916.0,209.6 922.0,213.0 928.0,216.2 934.0,219.3 940.0,222.3 946.0,225.3 952.0,228.5 958.0,232.0 964.0,235.7 970.0,239.6 976.0,243.5 982.0,247.4 988.0,250.9 994.0,254.2 1000.0,257.3 1006.0,260.2" fill="none" stroke="#5a4c44" stroke-width="1.8" opacity="0.19"/>
<polyline points="430.0,-44.5 436.0,-41.3 442.0,-38.3 448.0,-35.5 454.0,-33.0 460.0,-30.5 466.0,-27.9 472.0,-25.2 478.0,-22.3 484.0,-19.4 490.0,-16.4 496.0,-13.5 502.0,-10.8 508.0,-8.2 514.0,-5.8 520.0,-3.4 526.0,-0.8 532.0,2.0 538.0,5.0 544.0,8.2 550.0,11.5 556.0,14.8 562.0,17.9 568.0,20.8 574.0,23.6 580.0,26.4 586.0,29.2 592.0,32.1 598.0,35.3 604.0,38.5 610.0,41.8 616.0,44.9 622.0,47.9 628.0,50.5 634.0,53.0 640.0,55.4 646.0,57.8 652.0,60.4 658.0,63.2 664.0,66.1 670.0,69.1 676.0,72.1 682.0,74.9 688.0,77.6 694.0,80.2 700.0,82.7 706.0,85.4 712.0,88.2 718.0,91.3 724.0,94.6 730.0,98.0 736.0,101.3 742.0,104.5 748.0,107.5 754.0,110.3 760.0,113.0 766.0,115.7 772.0,118.5 778.0,121.5 784.0,124.6 790.0,127.7 796.0,130.8 802.0,133.6 808.0,136.3 814.0,138.7 820.0,141.1 826.0,143.4 832.0,146.0 838.0,148.7 844.0,151.7 850.0,154.8 856.0,157.9 862.0,160.9 868.0,163.8 874.0,166.5 880.0,169.2 886.0,171.9 892.0,174.8 898.0,177.9 904.0,181.2 910.0,184.6 916.0,187.9 922.0,191.1 928.0,194.1 934.0,196.8 940.0,199.4 946.0,202.0 952.0,204.6 958.0,207.4 964.0,210.3 970.0,213.4 976.0,216.4 982.0,219.2 988.0,221.9 994.0,224.4 1000.0,226.7 1006.0,229.1" fill="none" stroke="#5a4c44" stroke-width="1.0" opacity="0.13"/>
<polyline points="430.0,-43.0 436.0,-39.6 442.0,-36.3 448.0,-33.1 454.0,-30.1 460.0,-27.2 466.0,-24.5 472.0,-21.9 478.0,-19.3 484.0,-16.6 490.0,-13.8 496.0,-10.9 502.0,-7.8 508.0,-4.7 514.0,-1.4 520.0,1.7 526.0,4.8 532.0,7.8 538.0,10.7 544.0,13.5 550.0,16.3 556.0,19.2 562.0,22.2 568.0,25.4 574.0,28.7 580.0,32.2 586.0,35.7 592.0,39.2 598.0,42.6 604.0,45.8 610.0,48.9 616.0,51.9 622.0,54.7 628.0,57.6 634.0,60.5 640.0,63.5 646.0,66.6 652.0,69.8 658.0,73.0 664.0,76.2 670.0,79.3 676.0,82.3 682.0,85.2 688.0,87.9 694.0,90.5 700.0,93.1 706.0,95.7 712.0,98.5 718.0,101.5 724.0,104.6 730.0,107.8 736.0,111.1 742.0,114.4 748.0,117.6 754.0,120.8 760.0,123.8 766.0,126.7 772.0,129.6 778.0,132.6 784.0,135.6 790.0,138.8 796.0,142.1 802.0,145.6 808.0,149.1 814.0,152.5 820.0,155.9 826.0,159.1 832.0,162.1 838.0,165.0 844.0,167.8 850.0,170.5 856.0,173.3 862.0,176.1 868.0,179.1 874.0,182.2 880.0,185.3 886.0,188.5 892.0,191.6 898.0,194.6 904.0,197.5 910.0,200.2 916.0,202.9 922.0,205.5 928.0,208.3 934.0,211.1 940.0,214.1 946.0,217.3 952.0,220.6 958.0,224.0 964.0,227.5 970.0,230.8 976.0,234.1 982.0,237.2 988.0,240.2 994.0,243.2 1000.0,246.1 1006.0,249.1" fill="none" stroke="#5a4c44" stroke-width="1.4" opacity="0.17"/>
<polyline points="430.0,-39.2 436.0,-35.6 442.0,-32.0 448.0,-28.6 454.0,-25.4 460.0,-22.3 466.0,-19.3 472.0,-16.2 478.0,-12.8 484.0,-9.1 490.0,-5.2 496.0,-1.2 502.0,2.8 508.0,6.6 514.0,10.1 520.0,13.5 526.0,16.8 532.0,20.2 538.0,23.8 544.0,27.5 550.0,31.4 556.0,35.2 562.0,38.8 568.0,42.0 574.0,45.0 580.0,47.9 586.0,50.8 592.0,53.9 598.0,57.2 604.0,60.8 610.0,64.5 616.0,68.1 622.0,71.6 628.0,74.9 634.0,78.1 640.0,81.3 646.0,84.6 652.0,88.3 658.0,92.2 664.0,96.2 670.0,100.3 676.0,104.2 682.0,107.9 688.0,111.3 694.0,114.5 700.0,117.7 706.0,121.0 712.0,124.5 718.0,128.1 724.0,131.8 730.0,135.4 736.0,138.8 742.0,141.9 748.0,144.8 754.0,147.6 760.0,150.6 766.0,153.9 772.0,157.4 778.0,161.2 784.0,165.0 790.0,168.8 796.0,172.4 802.0,175.8 808.0,179.1 814.0,182.4 820.0,185.9 826.0,189.7 832.0,193.6 838.0,197.7 844.0,201.7 850.0,205.4 856.0,208.8 862.0,212.0 868.0,215.0 874.0,218.0 880.0,221.2 886.0,224.7 892.0,228.3 898.0,231.9 904.0,235.4 910.0,238.6 916.0,241.7 922.0,244.6 928.0,247.6 934.0,250.8 940.0,254.3 946.0,258.1 952.0,262.1 958.0,266.1 964.0,269.9 970.0,273.5 976.0,277.0 982.0,280.3 988.0,283.7 994.0,287.2 1000.0,291.0 1006.0,294.9" fill="none" stroke="#5a4c44" stroke-width="1.8" opacity="0.33"/>
<polyline points="430.0,-29.7 436.0,-26.7 442.0,-24.0 448.0,-21.5 454.0,-19.1 460.0,-16.2 466.0,-13.0 472.0,-9.6 478.0,-6.4 484.0,-3.5 490.0,-0.8 496.0,2.1 502.0,5.3 508.0,8.5 514.0,11.5 520.0,14.1 526.0,16.5 532.0,18.9 538.0,21.7 544.0,24.7 550.0,27.7 556.0,30.5 562.0,33.1 568.0,35.8 574.0,38.9 580.0,42.3 586.0,45.7 592.0,48.8 598.0,51.5 604.0,54.2 610.0,57.0 616.0,60.1 622.0,63.1 628.0,65.9 634.0,68.3 640.0,70.6 646.0,73.2 652.0,76.2 658.0,79.4 664.0,82.5 670.0,85.3 676.0,88.0 682.0,90.9 688.0,94.2 694.0,97.6 700.0,100.9 706.0,103.7 712.0,106.2 718.0,108.8 724.0,111.6 730.0,114.6 736.0,117.5 742.0,120.1 748.0,122.5 754.0,125.0 760.0,127.9 766.0,131.1 772.0,134.5 778.0,137.6 784.0,140.4 790.0,143.2 796.0,146.2 802.0,149.4 808.0,152.7 814.0,155.7 820.0,158.2 826.0,160.6 832.0,163.1 838.0,165.9 844.0,169.0 850.0,171.9 856.0,174.5 862.0,177.1 868.0,179.8 874.0,182.9 880.0,186.4 886.0,189.7 892.0,192.8 898.0,195.5 904.0,198.2 910.0,201.2 916.0,204.3 922.0,207.4 928.0,210.1 934.0,212.4 940.0,214.8 946.0,217.4 952.0,220.4 958.0,223.6 964.0,226.5 970.0,229.3 976.0,232.0 982.0,234.9 988.0,238.3 994.0,241.7 1000.0,244.9 1006.0,247.7" fill="none" stroke="#5a4c44" stroke-width="1.2" opacity="0.32"/>
<polyline points="430.0,-28.1 436.0,-24.5 442.0,-21.4 448.0,-18.5 454.0,-15.4 460.0,-11.9 466.0,-8.4 472.0,-5.4 478.0,-2.8 484.0,-0.4 490.0,2.4 496.0,5.7 502.0,9.3 508.0,12.6 514.0,15.6 520.0,18.5 526.0,21.9 532.0,25.8 538.0,29.7 544.0,33.1 550.0,36.0 556.0,38.7 562.0,41.6 568.0,45.0 574.0,48.3 580.0,51.2 586.0,53.7 592.0,56.3 598.0,59.3 604.0,62.9 610.0,66.7 616.0,70.1 622.0,73.2 628.0,76.2 634.0,79.7 640.0,83.5 646.0,87.1 652.0,90.3 658.0,92.9 664.0,95.4 670.0,98.3 676.0,101.6 682.0,104.9 688.0,107.9 694.0,110.5 700.0,113.3 706.0,116.7 712.0,120.5 718.0,124.4 724.0,127.8 730.0,130.8 736.0,133.8 742.0,137.2 748.0,140.8 754.0,144.2 760.0,147.0 766.0,149.5 772.0,152.0 778.0,155.0 784.0,158.4 790.0,161.8 796.0,164.9 802.0,167.7 808.0,170.8 814.0,174.4 820.0,178.3 826.0,182.1 832.0,185.4 838.0,188.2 844.0,191.0 850.0,194.2 856.0,197.7 862.0,200.9 868.0,203.6 874.0,206.0 880.0,208.6 886.0,211.9 892.0,215.5 898.0,219.1 904.0,222.3 910.0,225.3 916.0,228.5 922.0,232.2 928.0,236.1 934.0,239.6 940.0,242.6 946.0,245.2 952.0,247.9 958.0,251.0 964.0,254.3 970.0,257.5 976.0,260.2 982.0,262.8 988.0,265.7 994.0,269.2 1000.0,273.1 1006.0,276.8" fill="none" stroke="#5a4c44" stroke-width="1.0" opacity="0.35"/>
<polyline points="430.0,-19.2 436.0,-16.9 442.0,-14.7 448.0,-12.4 454.0,-9.9 460.0,-7.1 466.0,-4.2 472.0,-1.4 478.0,1.4 484.0,3.9 490.0,6.3 496.0,8.5 502.0,10.8 508.0,13.3 514.0,16.0 520.0,19.1 526.0,22.4 532.0,25.7 538.0,28.9 544.0,32.0 550.0,34.8 556.0,37.4 562.0,40.0 568.0,42.6 574.0,45.5 580.0,48.5 586.0,51.6 592.0,54.8 598.0,57.8 604.0,60.5 610.0,62.9 616.0,65.1 622.0,67.2 628.0,69.3 634.0,71.7 640.0,74.4 646.0,77.2 652.0,80.2 658.0,83.1 664.0,85.9 670.0,88.5 676.0,90.9 682.0,93.3 688.0,95.8 694.0,98.6 700.0,101.7 706.0,105.0 712.0,108.4 718.0,111.7 724.0,114.9 730.0,117.8 736.0,120.4 742.0,122.8 748.0,125.3 754.0,127.9 760.0,130.7 766.0,133.6 772.0,136.6 778.0,139.5 784.0,142.2 790.0,144.7 796.0,146.9 802.0,149.0 808.0,151.1 814.0,153.4 820.0,156.0 826.0,158.9 832.0,162.0 838.0,165.1 844.0,168.1 850.0,171.0 856.0,173.6 862.0,176.2 868.0,178.8 874.0,181.5 880.0,184.5 886.0,187.7 892.0,191.1 898.0,194.4 904.0,197.6 910.0,200.4 916.0,203.0 922.0,205.4 928.0,207.6 934.0,210.0 940.0,212.5 946.0,215.2 952.0,218.1 958.0,221.0 964.0,223.8 970.0,226.3 976.0,228.7 982.0,230.9 988.0,233.1 994.0,235.4 1000.0,238.1 1006.0,241.0" fill="none" stroke="#5a4c44" stroke-width="2.2" opacity="0.30"/>
<polyline points="430.0,-16.3 436.0,-14.1 442.0,-11.2 448.0,-7.9 454.0,-4.2 460.0,-0.8 466.0,2.3 472.0,4.9 478.0,7.5 484.0,10.2 490.0,13.4 496.0,17.0 502.0,20.7 508.0,24.0 514.0,26.7 520.0,28.8 526.0,30.7 532.0,32.6 538.0,34.9 544.0,37.7 550.0,40.8 556.0,43.7 562.0,46.3 568.0,48.4 574.0,50.5 580.0,52.7 586.0,55.6 592.0,59.0 598.0,62.8 604.0,66.6 610.0,69.9 616.0,72.8 622.0,75.3 628.0,77.8 634.0,80.6 640.0,83.7 646.0,87.1 652.0,90.4 658.0,93.1 664.0,95.2 670.0,97.0 676.0,98.7 682.0,100.8 688.0,103.5 694.0,106.6 700.0,109.8 706.0,112.8 712.0,115.4 718.0,117.7 724.0,120.1 730.0,122.9 736.0,126.3 742.0,130.1 748.0,134.0 754.0,137.5 760.0,140.4 766.0,142.8 772.0,145.0 778.0,147.3 784.0,150.1 790.0,153.1 796.0,156.2 802.0,159.0 808.0,161.3 814.0,163.2 820.0,164.9 826.0,166.9 832.0,169.5 838.0,172.7 844.0,176.2 850.0,179.7 856.0,182.7 862.0,185.4 868.0,187.9 874.0,190.6 880.0,193.7 886.0,197.3 892.0,201.1 898.0,204.6 904.0,207.5 910.0,209.9 916.0,211.8 922.0,213.8 928.0,216.1 934.0,218.8 940.0,221.9 946.0,224.8 952.0,227.4 958.0,229.5 964.0,231.4 970.0,233.5 976.0,236.1 982.0,239.4 988.0,243.1 994.0,246.8 1000.0,250.3 1006.0,253.2" fill="none" stroke="#5a4c44" stroke-width="1.8" opacity="0.20"/>
<polyline points="430.0,-11.5 436.0,-8.8 442.0,-5.7 448.0,-2.2 454.0,1.5 460.0,4.9 466.0,7.8 472.0,10.1 478.0,12.0 484.0,14.1 490.0,16.6 496.0,19.7 502.0,23.4 508.0,27.3 514.0,31.0 520.0,34.3 526.0,37.2 532.0,40.0 538.0,43.1 544.0,46.7 550.0,50.7 556.0,55.1 562.0,59.2 568.0,62.9 574.0,65.8 580.0,68.3 586.0,70.6 592.0,73.1 598.0,76.0 604.0,79.4 610.0,82.8 616.0,86.0 622.0,88.8 628.0,91.0 634.0,93.2 640.0,95.5 646.0,98.5 652.0,102.1 658.0,106.2 664.0,110.4 670.0,114.3 676.0,117.7 682.0,120.7 688.0,123.6 694.0,126.7 700.0,130.3 706.0,134.3 712.0,138.3 718.0,142.0 724.0,145.2 730.0,147.7 736.0,149.7 742.0,151.8 748.0,154.3 754.0,157.2 760.0,160.6 766.0,164.2 772.0,167.4 778.0,170.2 784.0,172.7 790.0,175.2 796.0,178.0 802.0,181.5 808.0,185.5 814.0,189.9 820.0,194.2 826.0,198.0 832.0,201.2 838.0,204.0 844.0,206.7 850.0,209.7 856.0,213.1 862.0,216.9 868.0,220.6 874.0,223.8 880.0,226.5 886.0,228.7 892.0,230.6 898.0,232.7 904.0,235.4 910.0,238.7 916.0,242.4 922.0,246.1 928.0,249.6 934.0,252.6 940.0,255.4 946.0,258.2 952.0,261.4 958.0,265.2 964.0,269.4 970.0,273.8 976.0,277.9 982.0,281.3 988.0,284.2 994.0,286.6 1000.0,289.1 1006.0,291.9" fill="none" stroke="#5a4c44" stroke-width="0.8" opacity="0.10"/>
<polyline points="430.0,-7.1 436.0,-3.8 442.0,-0.7 448.0,2.3 454.0,5.3 460.0,8.5 466.0,11.9 472.0,15.4 478.0,19.0 484.0,22.5 490.0,25.8 496.0,29.1 502.0,32.4 508.0,35.9 514.0,39.6 520.0,43.3 526.0,47.1 532.0,50.6 538.0,53.8 544.0,57.0 550.0,60.1 556.0,63.4 562.0,66.8 568.0,70.3 574.0,73.7 580.0,76.9 586.0,80.0 592.0,83.0 598.0,86.1 604.0,89.5 610.0,93.1 616.0,96.8 622.0,100.4 628.0,103.9 634.0,107.3 640.0,110.6 646.0,113.9 652.0,117.5 658.0,121.1 664.0,124.8 670.0,128.4 676.0,131.7 682.0,134.8 688.0,137.8 694.0,140.9 700.0,144.2 706.0,147.6 712.0,151.1 718.0,154.5 724.0,157.7 730.0,160.9 736.0,164.0 742.0,167.3 748.0,170.8 754.0,174.6 760.0,178.3 766.0,182.0 772.0,185.5 778.0,188.8 784.0,192.0 790.0,195.4 796.0,198.9 802.0,202.4 808.0,206.0 814.0,209.4 820.0,212.5 826.0,215.5 832.0,218.5 838.0,221.7 844.0,225.0 850.0,228.5 856.0,232.1 862.0,235.5 868.0,238.8 874.0,242.1 880.0,245.3 886.0,248.8 892.0,252.5 898.0,256.2 904.0,260.0 910.0,263.5 916.0,266.9 922.0,270.1 928.0,273.2 934.0,276.5 940.0,279.9 946.0,283.4 952.0,286.9 958.0,290.1 964.0,293.2 970.0,296.2 976.0,299.3 982.0,302.6 988.0,306.1 994.0,309.7 1000.0,313.4 1006.0,316.9" fill="none" stroke="#5a4c44" stroke-width="1.4" opacity="0.20"/>
<polyline points="430.0,1.7 436.0,5.1 442.0,8.1 448.0,10.6 454.0,12.7 460.0,14.8 466.0,17.1 472.0,19.6 478.0,22.5 484.0,25.5 490.0,28.5 496.0,31.3 502.0,33.7 508.0,35.7 514.0,37.6 520.0,39.6 526.0,41.8 532.0,44.6 538.0,47.8 544.0,51.3 550.0,54.9 556.0,58.4 562.0,61.5 568.0,64.3 574.0,66.9 580.0,69.5 586.0,72.3 592.0,75.4 598.0,78.8 604.0,82.4 610.0,85.9 616.0,89.1 622.0,91.8 628.0,94.0 634.0,96.0 640.0,97.8 646.0,99.9 652.0,102.2 658.0,105.0 664.0,108.0 670.0,111.1 676.0,113.9 682.0,116.5 688.0,118.8 694.0,120.9 700.0,123.1 706.0,125.7 712.0,128.6 718.0,132.1 724.0,135.8 730.0,139.6 736.0,143.2 742.0,146.4 748.0,149.2 754.0,151.7 760.0,154.2 766.0,156.7 772.0,159.6 778.0,162.8 784.0,166.1 790.0,169.3 796.0,172.3 802.0,174.8 808.0,176.9 814.0,178.6 820.0,180.4 826.0,182.4 832.0,184.8 838.0,187.6 844.0,190.8 850.0,194.1 856.0,197.2 862.0,200.1 868.0,202.6 874.0,205.0 880.0,207.5 886.0,210.2 892.0,213.3 898.0,216.8 904.0,220.6 910.0,224.4 916.0,228.0 922.0,231.1 928.0,233.7 934.0,236.0 940.0,238.2 946.0,240.5 952.0,243.1 958.0,246.0 964.0,249.0 970.0,252.1 976.0,254.9 982.0,257.4 988.0,259.4 994.0,261.3 1000.0,263.1 1006.0,265.2" fill="none" stroke="#5a4c44" stroke-width="1.2" opacity="0.36"/>
<polyline points="430.0,4.5 436.0,7.2 442.0,10.4 448.0,14.1 454.0,17.7 460.0,20.5 466.0,22.4 472.0,24.5 478.0,27.3 484.0,30.6 490.0,33.6 496.0,35.9 502.0,38.3 508.0,41.6 514.0,45.6 520.0,49.5 526.0,52.7 532.0,55.3 538.0,58.1 544.0,61.4 550.0,64.9 556.0,67.6 562.0,69.5 568.0,71.4 574.0,74.2 580.0,77.6 586.0,81.0 592.0,83.7 598.0,86.3 604.0,89.5 610.0,93.5 616.0,97.5 622.0,100.7 628.0,103.1 634.0,105.5 640.0,108.4 646.0,111.7 652.0,114.5 658.0,116.5 664.0,118.5 670.0,121.3 676.0,124.9 682.0,128.7 688.0,131.8 694.0,134.6 700.0,137.6 706.0,141.3 712.0,145.2 718.0,148.3 724.0,150.6 730.0,152.6 736.0,155.2 742.0,158.4 748.0,161.4 754.0,163.8 760.0,166.0 766.0,168.8 772.0,172.6 778.0,176.6 784.0,180.1 790.0,182.8 796.0,185.5 802.0,188.9 808.0,192.5 814.0,195.6 820.0,197.7 826.0,199.5 832.0,201.9 838.0,205.1 844.0,208.5 850.0,211.4 856.0,213.8 862.0,216.7 868.0,220.4 874.0,224.6 880.0,228.2 886.0,230.9 892.0,233.2 898.0,236.1 904.0,239.4 910.0,242.5 916.0,244.7 922.0,246.6 928.0,248.9 934.0,252.2 940.0,255.9 946.0,259.2 952.0,262.0 958.0,264.8 964.0,268.4 970.0,272.4 976.0,276.0 982.0,278.5 988.0,280.6 994.0,283.0 1000.0,286.1 1006.0,289.3" fill="none" stroke="#5a4c44" stroke-width="1.0" opacity="0.22"/>
<polyline points="430.0,10.7 436.0,14.7 442.0,18.1 448.0,20.9 454.0,23.3 460.0,25.8 466.0,28.8 472.0,32.0 478.0,35.0 484.0,37.5 490.0,39.6 496.0,41.8 502.0,44.6 508.0,48.1 514.0,51.9 520.0,55.3 526.0,58.3 532.0,61.0 538.0,64.1 544.0,67.6 550.0,71.5 556.0,75.0 562.0,77.7 568.0,80.0 574.0,82.1 580.0,84.7 586.0,87.8 592.0,91.0 598.0,93.8 604.0,96.2 610.0,98.5 616.0,101.3 622.0,104.8 628.0,108.7 634.0,112.5 640.0,115.7 646.0,118.5 652.0,121.2 658.0,124.4 664.0,127.9 670.0,131.4 676.0,134.2 682.0,136.4 688.0,138.4 694.0,140.7 700.0,143.7 706.0,147.0 712.0,150.3 718.0,153.1 724.0,155.6 730.0,158.4 736.0,161.8 742.0,165.7 748.0,169.6 754.0,173.0 760.0,175.8 766.0,178.3 772.0,180.9 778.0,184.1 784.0,187.4 790.0,190.4 796.0,192.7 802.0,194.7 808.0,196.9 814.0,199.8 820.0,203.3 826.0,206.9 832.0,210.2 838.0,213.0 844.0,215.8 850.0,218.9 856.0,222.6 862.0,226.5 868.0,230.0 874.0,232.8 880.0,235.0 886.0,237.3 892.0,240.0 898.0,243.2 904.0,246.3 910.0,249.0 916.0,251.3 922.0,253.5 928.0,256.3 934.0,259.8 940.0,263.7 946.0,267.4 952.0,270.5 958.0,273.3 964.0,276.1 970.0,279.5 976.0,283.1 982.0,286.6 988.0,289.4 994.0,291.6 1000.0,293.6 1006.0,296.0" fill="none" stroke="#5a4c44" stroke-width="1.8" opacity="0.24"/>
<polyline points="430.0,11.9 436.0,15.4 442.0,18.9 448.0,22.3 454.0,25.6 460.0,28.7 466.0,31.8 472.0,35.0 478.0,38.2 484.0,41.6 490.0,45.1 496.0,48.7 502.0,52.3 508.0,55.9 514.0,59.5 520.0,62.9 526.0,66.1 532.0,69.1 538.0,72.0 544.0,74.8 550.0,77.6 556.0,80.5 562.0,83.4 568.0,86.5 574.0,89.7 580.0,93.1 586.0,96.4 592.0,99.8 598.0,103.1 604.0,106.2 610.0,109.3 616.0,112.3 622.0,115.2 628.0,118.1 634.0,121.1 640.0,124.2 646.0,127.6 652.0,131.1 658.0,134.7 664.0,138.4 670.0,142.1 676.0,145.8 682.0,149.4 688.0,152.8 694.0,156.1 700.0,159.2 706.0,162.3 712.0,165.4 718.0,168.5 724.0,171.7 730.0,175.1 736.0,178.6 742.0,182.1 748.0,185.6 754.0,189.0 760.0,192.3 766.0,195.4 772.0,198.4 778.0,201.2 784.0,203.9 790.0,206.7 796.0,209.5 802.0,212.4 808.0,215.5 814.0,218.7 820.0,222.1 826.0,225.6 832.0,229.0 838.0,232.4 844.0,235.7 850.0,238.9 856.0,242.0 862.0,245.1 868.0,248.1 874.0,251.2 880.0,254.5 886.0,257.9 892.0,261.4 898.0,265.1 904.0,268.8 910.0,272.6 916.0,276.3 922.0,279.8 928.0,283.2 934.0,286.4 940.0,289.4 946.0,292.4 952.0,295.3 958.0,298.3 964.0,301.4 970.0,304.7 976.0,308.0 982.0,311.4 988.0,314.8 994.0,318.1 1000.0,321.3 1006.0,324.4" fill="none" stroke="#5a4c44" stroke-width="1.0" opacity="0.23"/>
<polyline points="430.0,21.5 436.0,24.8 442.0,28.0 448.0,30.9 454.0,33.6 460.0,36.3 466.0,39.4 472.0,43.1 478.0,47.0 484.0,50.6 490.0,53.8 496.0,56.6 502.0,59.5 508.0,62.7 514.0,66.1 520.0,69.5 526.0,72.4 532.0,74.9 538.0,77.2 544.0,79.7 550.0,82.8 556.0,86.3 562.0,89.7 568.0,92.8 574.0,95.6 580.0,98.5 586.0,101.9 592.0,105.6 598.0,109.5 604.0,113.0 610.0,116.0 616.0,118.6 622.0,121.3 628.0,124.3 634.0,127.6 640.0,130.8 646.0,133.6 652.0,136.0 658.0,138.4 664.0,141.2 670.0,144.6 676.0,148.2 682.0,151.8 688.0,155.1 694.0,158.0 700.0,161.0 706.0,164.3 712.0,168.0 718.0,171.7 724.0,175.0 730.0,177.7 736.0,180.1 742.0,182.6 748.0,185.6 754.0,188.8 760.0,192.0 766.0,194.9 772.0,197.5 778.0,200.1 784.0,203.2 790.0,206.7 796.0,210.6 802.0,214.3 808.0,217.5 814.0,220.4 820.0,223.3 826.0,226.5 832.0,230.0 838.0,233.5 844.0,236.5 850.0,239.0 856.0,241.3 862.0,243.8 868.0,246.8 874.0,250.2 880.0,253.6 886.0,256.6 892.0,259.4 898.0,262.2 904.0,265.5 910.0,269.2 916.0,273.1 922.0,276.7 928.0,279.8 934.0,282.5 940.0,285.2 946.0,288.3 952.0,291.6 958.0,294.9 964.0,297.7 970.0,300.2 976.0,302.5 982.0,305.2 988.0,308.4 994.0,312.0 1000.0,315.5 1006.0,318.7" fill="none" stroke="#5a4c44" stroke-width="1.8" opacity="0.16"/>
<polyline points="430.0,26.7 436.0,29.8 442.0,33.0 448.0,36.4 454.0,40.0 460.0,43.9 466.0,47.9 472.0,52.0 478.0,55.9 484.0,59.6 490.0,63.0 496.0,66.0 502.0,68.7 508.0,71.3 514.0,73.9 520.0,76.7 526.0,79.6 532.0,82.8 538.0,86.2 544.0,89.8 550.0,93.3 556.0,96.7 562.0,99.9 568.0,102.9 574.0,105.7 580.0,108.4 586.0,111.2 592.0,114.2 598.0,117.5 604.0,121.2 610.0,125.1 616.0,129.2 622.0,133.4 628.0,137.5 634.0,141.3 640.0,144.9 646.0,148.2 652.0,151.3 658.0,154.4 664.0,157.5 670.0,160.8 676.0,164.4 682.0,168.1 688.0,171.9 694.0,175.7 700.0,179.3 706.0,182.7 712.0,185.8 718.0,188.6 724.0,191.1 730.0,193.6 736.0,196.1 742.0,198.9 748.0,201.9 754.0,205.2 760.0,208.7 766.0,212.4 772.0,216.1 778.0,219.6 784.0,223.0 790.0,226.1 796.0,229.1 802.0,232.1 808.0,235.1 814.0,238.4 820.0,242.0 826.0,245.8 832.0,249.9 838.0,254.1 844.0,258.3 850.0,262.3 856.0,266.0 862.0,269.4 868.0,272.5 874.0,275.5 880.0,278.4 886.0,281.3 892.0,284.4 898.0,287.8 904.0,291.3 910.0,294.9 916.0,298.5 922.0,302.0 928.0,305.1 934.0,308.0 940.0,310.7 946.0,313.2 952.0,315.7 958.0,318.4 964.0,321.3 970.0,324.6 976.0,328.1 982.0,331.9 988.0,335.8 994.0,339.7 1000.0,343.4 1006.0,347.0" fill="none" stroke="#5a4c44" stroke-width="1.8" opacity="0.31"/>
<polyline points="430.0,30.1 436.0,32.9 442.0,35.7 448.0,38.5 454.0,41.5 460.0,44.7 466.0,48.1 472.0,51.6 478.0,55.1 484.0,58.4 490.0,61.7 496.0,64.7 502.0,67.7 508.0,70.7 514.0,73.8 520.0,77.2 526.0,80.7 532.0,84.5 538.0,88.4 544.0,92.3 550.0,96.0 556.0,99.6 562.0,102.9 568.0,106.1 574.0,109.2 580.0,112.3 586.0,115.6 592.0,118.9 598.0,122.4 604.0,126.0 610.0,129.6 616.0,133.0 622.0,136.2 628.0,139.1 634.0,141.9 640.0,144.7 646.0,147.4 652.0,150.4 658.0,153.5 664.0,156.9 670.0,160.5 676.0,164.1 682.0,167.6 688.0,171.1 694.0,174.4 700.0,177.6 706.0,180.7 712.0,183.8 718.0,187.2 724.0,190.7 730.0,194.4 736.0,198.3 742.0,202.1 748.0,205.9 754.0,209.5 760.0,212.9 766.0,216.0 772.0,219.0 778.0,221.9 784.0,225.0 790.0,228.1 796.0,231.4 802.0,234.8 808.0,238.3 814.0,241.7 820.0,245.0 826.0,248.0 832.0,250.9 838.0,253.7 844.0,256.5 850.0,259.5 856.0,262.6 862.0,266.0 868.0,269.7 874.0,273.4 880.0,277.2 886.0,280.8 892.0,284.3 898.0,287.7 904.0,290.9 910.0,294.1 916.0,297.3 922.0,300.7 928.0,304.3 934.0,308.0 940.0,311.8 946.0,315.6 952.0,319.1 958.0,322.4 964.0,325.5 970.0,328.4 976.0,331.2 982.0,334.1 988.0,337.0 994.0,340.2 1000.0,343.5 1006.0,346.9" fill="none" stroke="#5a4c44" stroke-width="1.2" opacity="0.17"/>
<polyline points="430.0,37.6 436.0,41.6 442.0,45.1 448.0,48.2 454.0,51.2 460.0,54.6 466.0,58.3 472.0,62.4 478.0,66.3 484.0,69.9 490.0,72.9 496.0,75.3 502.0,77.6 508.0,80.1 514.0,83.1 520.0,86.7 526.0,90.6 532.0,94.6 538.0,98.4 544.0,101.7 550.0,104.7 556.0,107.9 562.0,111.4 568.0,115.4 574.0,119.9 580.0,124.6 586.0,129.0 592.0,132.8 598.0,135.9 604.0,138.7 610.0,141.5 616.0,144.6 622.0,148.1 628.0,151.9 634.0,155.6 640.0,159.0 646.0,161.8 652.0,164.3 658.0,166.7 664.0,169.4 670.0,172.7 676.0,176.6 682.0,180.9 688.0,185.2 694.0,189.2 700.0,192.8 706.0,196.0 712.0,199.2 718.0,202.8 724.0,206.9 730.0,211.3 736.0,215.7 742.0,219.7 748.0,223.2 754.0,226.0 760.0,228.5 766.0,231.0 772.0,233.9 778.0,237.3 784.0,241.0 790.0,244.7 796.0,248.1 802.0,251.1 808.0,253.7 814.0,256.4 820.0,259.5 826.0,263.2 832.0,267.5 838.0,272.0 844.0,276.5 850.0,280.6 856.0,284.2 862.0,287.3 868.0,290.5 874.0,293.9 880.0,297.8 886.0,301.9 892.0,306.0 898.0,309.7 904.0,312.8 910.0,315.3 916.0,317.6 922.0,320.0 928.0,322.9 934.0,326.4 940.0,330.3 946.0,334.2 952.0,337.8 958.0,341.1 964.0,344.0 970.0,347.0 976.0,350.4 982.0,354.4 988.0,358.9 994.0,363.6 1000.0,368.0 1006.0,372.0" fill="none" stroke="#5a4c44" stroke-width="1.0" opacity="0.12"/>
<polyline points="430.0,39.0 436.0,42.4 442.0,45.7 448.0,49.2 454.0,53.0 460.0,57.0 466.0,61.1 472.0,64.8 478.0,68.0 484.0,70.8 490.0,73.5 496.0,76.5 502.0,79.9 508.0,83.5 514.0,87.2 520.0,90.5 526.0,93.6 532.0,96.6 538.0,99.7 544.0,103.3 550.0,107.4 556.0,111.6 562.0,115.8 568.0,119.5 574.0,122.9 580.0,126.1 586.0,129.4 592.0,133.0 598.0,136.9 604.0,140.7 610.0,144.2 616.0,147.2 622.0,149.9 628.0,152.6 634.0,155.6 640.0,159.0 646.0,162.8 652.0,166.6 658.0,170.2 664.0,173.5 670.0,176.6 676.0,180.0 682.0,183.7 688.0,187.8 694.0,192.1 700.0,196.2 706.0,199.8 712.0,203.0 718.0,206.0 724.0,209.1 730.0,212.5 736.0,216.2 742.0,219.9 748.0,223.2 754.0,226.2 760.0,228.9 766.0,231.7 772.0,234.9 778.0,238.5 784.0,242.5 790.0,246.6 796.0,250.3 802.0,253.8 808.0,257.1 814.0,260.5 820.0,264.2 826.0,268.3 832.0,272.4 838.0,276.3 844.0,279.7 850.0,282.7 856.0,285.5 862.0,288.4 868.0,291.7 874.0,295.3 880.0,298.9 886.0,302.3 892.0,305.4 898.0,308.3 904.0,311.3 910.0,314.7 916.0,318.5 922.0,322.7 928.0,326.9 934.0,330.8 940.0,334.3 946.0,337.5 952.0,340.8 958.0,344.4 964.0,348.3 970.0,352.3 976.0,355.9 982.0,359.1 988.0,361.9 994.0,364.6 1000.0,367.5 1006.0,370.8" fill="none" stroke="#5a4c44" stroke-width="1.4" opacity="0.32"/>
<polyline points="430.0,47.8 436.0,50.7 442.0,53.5 448.0,56.0 454.0,58.6 460.0,61.3 466.0,64.2 472.0,67.3 478.0,70.6 484.0,74.0 490.0,77.5 496.0,80.8 502.0,84.0 508.0,87.0 514.0,89.9 520.0,92.8 526.0,95.7 532.0,98.9 538.0,102.2 544.0,105.9 550.0,109.7 556.0,113.6 562.0,117.4 568.0,121.1 574.0,124.5 580.0,127.7 586.0,130.8 592.0,133.7 598.0,136.6 604.0,139.7 610.0,142.9 616.0,146.3 622.0,149.8 628.0,153.2 634.0,156.6 640.0,159.7 646.0,162.6 652.0,165.3 658.0,167.9 664.0,170.5 670.0,173.1 676.0,176.0 682.0,179.1 688.0,182.5 694.0,186.0 700.0,189.6 706.0,193.2 712.0,196.6 718.0,199.8 724.0,202.9 730.0,205.9 736.0,209.0 742.0,212.2 748.0,215.5 754.0,219.1 760.0,222.9 766.0,226.8 772.0,230.6 778.0,234.2 784.0,237.6 790.0,240.7 796.0,243.7 802.0,246.4 808.0,249.2 814.0,252.0 820.0,255.0 826.0,258.2 832.0,261.5 838.0,264.9 844.0,268.2 850.0,271.4 856.0,274.4 862.0,277.2 868.0,279.9 874.0,282.5 880.0,285.3 886.0,288.2 892.0,291.4 898.0,294.9 904.0,298.5 910.0,302.3 916.0,306.0 922.0,309.6 928.0,313.1 934.0,316.3 940.0,319.4 946.0,322.4 952.0,325.6 958.0,328.8 964.0,332.3 970.0,335.9 976.0,339.6 982.0,343.3 988.0,346.9 994.0,350.2 1000.0,353.2 1006.0,356.0" fill="none" stroke="#5a4c44" stroke-width="1.2" opacity="0.30"/>
<polyline points="430.0,52.9 436.0,56.7 442.0,59.7 448.0,62.2 454.0,64.7 460.0,67.7 466.0,71.0 472.0,74.1 478.0,76.6 484.0,78.6 490.0,80.7 496.0,83.4 502.0,86.8 508.0,90.4 514.0,93.7 520.0,96.5 526.0,99.3 532.0,102.4 538.0,106.2 544.0,110.0 550.0,113.3 556.0,115.9 562.0,118.1 568.0,120.5 574.0,123.4 580.0,126.6 586.0,129.5 592.0,131.9 598.0,134.1 604.0,136.6 610.0,139.8 616.0,143.6 622.0,147.3 628.0,150.6 634.0,153.4 640.0,156.2 646.0,159.4 652.0,163.0 658.0,166.5 664.0,169.3 670.0,171.5 676.0,173.5 682.0,175.9 688.0,179.0 694.0,182.2 700.0,185.2 706.0,187.8 712.0,190.2 718.0,193.1 724.0,196.8 730.0,200.7 736.0,204.4 742.0,207.5 748.0,210.0 754.0,212.7 760.0,215.8 766.0,219.1 772.0,222.3 778.0,224.8 784.0,226.7 790.0,228.8 796.0,231.5 802.0,234.9 808.0,238.4 814.0,241.5 820.0,244.2 826.0,247.0 832.0,250.2 838.0,254.0 844.0,257.9 850.0,261.2 856.0,263.9 862.0,266.2 868.0,268.6 874.0,271.6 880.0,274.8 886.0,277.7 892.0,280.1 898.0,282.1 904.0,284.6 910.0,287.7 916.0,291.4 922.0,295.1 928.0,298.3 934.0,301.1 940.0,303.9 946.0,307.2 952.0,310.9 958.0,314.5 964.0,317.4 970.0,319.6 976.0,321.7 982.0,324.2 988.0,327.2 994.0,330.4 1000.0,333.3 1006.0,335.7" fill="none" stroke="#5a4c44" stroke-width="2.2" opacity="0.35"/>
<polyline points="430.0,57.8 436.0,60.1 442.0,62.5 448.0,65.1 454.0,67.9 460.0,70.9 466.0,73.9 472.0,76.9 478.0,79.7 484.0,82.4 490.0,85.0 496.0,87.6 502.0,90.1 508.0,92.9 514.0,95.8 520.0,98.9 526.0,102.2 532.0,105.6 538.0,109.0 544.0,112.2 550.0,115.2 556.0,118.0 562.0,120.6 568.0,123.2 574.0,125.8 580.0,128.5 586.0,131.4 592.0,134.4 598.0,137.4 604.0,140.4 610.0,143.3 616.0,146.0 622.0,148.4 628.0,150.7 634.0,153.0 640.0,155.3 646.0,157.8 652.0,160.6 658.0,163.5 664.0,166.6 670.0,169.7 676.0,172.8 682.0,175.8 688.0,178.6 694.0,181.3 700.0,184.0 706.0,186.7 712.0,189.5 718.0,192.5 724.0,195.7 730.0,199.0 736.0,202.4 742.0,205.7 748.0,208.7 754.0,211.6 760.0,214.2 766.0,216.7 772.0,219.1 778.0,221.6 784.0,224.2 790.0,227.0 796.0,229.9 802.0,232.9 808.0,235.8 814.0,238.6 820.0,241.2 826.0,243.7 832.0,246.0 838.0,248.4 844.0,250.9 850.0,253.5 856.0,256.4 862.0,259.5 868.0,262.8 874.0,266.0 880.0,269.2 886.0,272.3 892.0,275.2 898.0,278.0 904.0,280.7 910.0,283.4 916.0,286.2 922.0,289.2 928.0,292.4 934.0,295.6 940.0,298.8 946.0,301.9 952.0,304.8 958.0,307.5 964.0,310.0 970.0,312.3 976.0,314.6 982.0,317.0 988.0,319.6 994.0,322.3 1000.0,325.2 1006.0,328.2" fill="none" stroke="#5a4c44" stroke-width="1.0" opacity="0.11"/>
<polyline points="430.0,63.1 436.0,66.7 442.0,70.0 448.0,73.1 454.0,76.0 460.0,78.7 466.0,81.5 472.0,84.3 478.0,87.3 484.0,90.5 490.0,93.8 496.0,97.1 502.0,100.2 508.0,103.2 514.0,106.0 520.0,108.7 526.0,111.4 532.0,114.3 538.0,117.4 544.0,120.7 550.0,124.3 556.0,128.0 562.0,131.6 568.0,135.1 574.0,138.4 580.0,141.6 586.0,144.6 592.0,147.6 598.0,150.8 604.0,154.1 610.0,157.7 616.0,161.2 622.0,164.7 628.0,168.1 634.0,171.2 640.0,174.0 646.0,176.6 652.0,179.2 658.0,181.9 664.0,184.8 670.0,187.9 676.0,191.1 682.0,194.5 688.0,197.8 694.0,201.0 700.0,204.0 706.0,206.8 712.0,209.7 718.0,212.6 724.0,215.7 730.0,219.1 736.0,222.7 742.0,226.5 748.0,230.2 754.0,233.8 760.0,237.2 766.0,240.4 772.0,243.4 778.0,246.3 784.0,249.2 790.0,252.4 796.0,255.7 802.0,259.1 808.0,262.5 814.0,265.8 820.0,268.8 826.0,271.7 832.0,274.3 838.0,276.9 844.0,279.5 850.0,282.3 856.0,285.4 862.0,288.6 868.0,292.1 874.0,295.6 880.0,299.0 886.0,302.2 892.0,305.3 898.0,308.3 904.0,311.3 910.0,314.4 916.0,317.7 922.0,321.3 928.0,325.0 934.0,328.7 940.0,332.4 946.0,335.8 952.0,338.9 958.0,341.8 964.0,344.6 970.0,347.4 976.0,350.3 982.0,353.4 988.0,356.6 994.0,359.9 1000.0,363.2 1006.0,366.3" fill="none" stroke="#5a4c44" stroke-width="1.2" opacity="0.27"/>
<polyline points="430.0,66.1 436.0,68.5 442.0,71.2 448.0,74.7 454.0,79.0 460.0,83.3 466.0,86.9 472.0,90.2 478.0,93.6 484.0,97.7 490.0,102.0 496.0,105.9 502.0,108.9 508.0,111.3 514.0,114.0 520.0,117.4 526.0,121.2 532.0,124.6 538.0,127.4 544.0,130.1 550.0,133.6 556.0,137.8 562.0,142.4 568.0,146.5 574.0,149.8 580.0,152.9 586.0,156.5 592.0,160.5 598.0,164.4 604.0,167.5 610.0,169.9 616.0,172.3 622.0,175.4 628.0,179.2 634.0,183.1 640.0,186.5 646.0,189.5 652.0,192.8 658.0,196.9 664.0,201.5 670.0,205.8 676.0,209.3 682.0,212.1 688.0,215.1 694.0,218.7 700.0,222.5 706.0,225.8 712.0,228.4 718.0,230.8 724.0,233.7 730.0,237.5 736.0,241.8 742.0,245.7 748.0,249.1 754.0,252.3 760.0,256.0 766.0,260.4 772.0,264.8 778.0,268.4 784.0,271.1 790.0,273.6 796.0,276.7 802.0,280.3 808.0,283.9 814.0,287.0 820.0,289.5 826.0,292.4 832.0,296.2 838.0,300.6 844.0,305.0 850.0,308.7 856.0,311.9 862.0,315.2 868.0,319.2 874.0,323.3 880.0,327.0 886.0,329.8 892.0,332.1 898.0,334.8 904.0,338.2 910.0,342.1 916.0,345.6 922.0,348.6 928.0,351.6 934.0,355.2 940.0,359.6 946.0,364.2 952.0,368.2 958.0,371.4 964.0,374.3 970.0,377.7 976.0,381.5 982.0,385.3 988.0,388.3 994.0,390.6 1000.0,393.1 1006.0,396.3" fill="none" stroke="#5a4c44" stroke-width="1.8" opacity="0.13"/>
<polyline points="430.0,73.4 436.0,76.8 442.0,80.3 448.0,83.9 454.0,87.4 460.0,90.9 466.0,94.4 472.0,97.7 478.0,101.0 484.0,104.2 490.0,107.4 496.0,110.5 502.0,113.6 508.0,116.8 514.0,120.0 520.0,123.4 526.0,126.8 532.0,130.3 538.0,133.7 544.0,137.2 550.0,140.6 556.0,144.0 562.0,147.3 568.0,150.6 574.0,153.9 580.0,157.1 586.0,160.5 592.0,163.9 598.0,167.4 604.0,170.9 610.0,174.6 616.0,178.2 622.0,181.9 628.0,185.4 634.0,188.9 640.0,192.4 646.0,195.7 652.0,199.0 658.0,202.2 664.0,205.5 670.0,208.8 676.0,212.1 682.0,215.5 688.0,219.0 694.0,222.4 700.0,225.9 706.0,229.3 712.0,232.7 718.0,236.0 724.0,239.2 730.0,242.3 736.0,245.4 742.0,248.6 748.0,251.7 754.0,255.0 760.0,258.4 766.0,261.8 772.0,265.3 778.0,268.9 784.0,272.4 790.0,275.9 796.0,279.4 802.0,282.8 808.0,286.1 814.0,289.5 820.0,292.8 826.0,296.1 832.0,299.5 838.0,303.0 844.0,306.5 850.0,310.1 856.0,313.8 862.0,317.4 868.0,320.9 874.0,324.4 880.0,327.8 886.0,331.1 892.0,334.3 898.0,337.5 904.0,340.7 910.0,343.9 916.0,347.2 922.0,350.5 928.0,353.9 934.0,357.3 940.0,360.8 946.0,364.2 952.0,367.6 958.0,370.9 964.0,374.1 970.0,377.3 976.0,380.5 982.0,383.6 988.0,386.9 994.0,390.2 1000.0,393.6 1006.0,397.1" fill="none" stroke="#5a4c44" stroke-width="0.8" opacity="0.17"/>
<polyline points="430.0,75.5 436.0,78.8 442.0,82.2 448.0,85.7 454.0,89.1 460.0,92.3 466.0,95.3 472.0,98.1 478.0,100.9 484.0,103.7 490.0,106.7 496.0,109.8 502.0,112.9 508.0,116.1 514.0,119.1 520.0,122.0 526.0,124.7 532.0,127.3 538.0,129.9 544.0,132.6 550.0,135.6 556.0,138.7 562.0,142.0 568.0,145.4 574.0,148.6 580.0,151.7 586.0,154.7 592.0,157.7 598.0,160.6 604.0,163.7 610.0,166.9 616.0,170.2 622.0,173.6 628.0,177.0 634.0,180.2 640.0,183.2 646.0,186.1 652.0,188.7 658.0,191.4 664.0,194.2 670.0,197.1 676.0,200.2 682.0,203.3 688.0,206.4 694.0,209.4 700.0,212.2 706.0,214.9 712.0,217.6 718.0,220.4 724.0,223.3 730.0,226.5 736.0,229.8 742.0,233.2 748.0,236.6 754.0,239.9 760.0,243.0 766.0,246.0 772.0,248.9 778.0,251.9 784.0,254.9 790.0,258.1 796.0,261.4 802.0,264.7 808.0,267.9 814.0,270.9 820.0,273.8 826.0,276.4 832.0,279.0 838.0,281.7 844.0,284.4 850.0,287.4 856.0,290.5 862.0,293.7 868.0,296.8 874.0,299.9 880.0,302.8 886.0,305.6 892.0,308.4 898.0,311.3 904.0,314.4 910.0,317.7 916.0,321.2 922.0,324.7 928.0,328.0 934.0,331.3 940.0,334.3 946.0,337.2 952.0,340.0 958.0,342.9 964.0,345.8 970.0,349.0 976.0,352.2 982.0,355.3 988.0,358.4 994.0,361.3 1000.0,364.0 1006.0,366.6" fill="none" stroke="#5a4c44" stroke-width="1.0" opacity="0.12"/>
<polyline points="430.0,85.5 436.0,87.9 442.0,90.2 448.0,92.6 454.0,95.4 460.0,98.5 466.0,101.8 472.0,105.1 478.0,108.3 484.0,111.2 490.0,113.9 496.0,116.4 502.0,118.8 508.0,121.5 514.0,124.5 520.0,128.0 526.0,131.8 532.0,135.8 538.0,139.7 544.0,143.5 550.0,146.9 556.0,149.9 562.0,152.8 568.0,155.6 574.0,158.6 580.0,161.8 586.0,165.3 592.0,168.9 598.0,172.5 604.0,175.8 610.0,178.8 616.0,181.4 622.0,183.7 628.0,185.9 634.0,188.1 640.0,190.7 646.0,193.6 652.0,196.8 658.0,200.3 664.0,203.7 670.0,207.0 676.0,210.1 682.0,212.9 688.0,215.6 694.0,218.4 700.0,221.4 706.0,224.8 712.0,228.5 718.0,232.5 724.0,236.5 730.0,240.4 736.0,243.9 742.0,247.1 748.0,249.9 754.0,252.6 760.0,255.2 766.0,258.0 772.0,261.1 778.0,264.3 784.0,267.8 790.0,271.1 796.0,274.2 802.0,276.9 808.0,279.4 814.0,281.6 820.0,283.8 826.0,286.2 832.0,289.0 838.0,292.2 844.0,295.8 850.0,299.5 856.0,303.2 862.0,306.7 868.0,309.9 874.0,312.9 880.0,315.7 886.0,318.7 892.0,321.8 898.0,325.3 904.0,329.1 910.0,333.1 916.0,336.9 922.0,340.6 928.0,343.8 934.0,346.6 940.0,349.1 946.0,351.4 952.0,353.9 958.0,356.5 964.0,359.5 970.0,362.7 976.0,366.1 982.0,369.3 988.0,372.3 994.0,375.0 1000.0,377.5 1006.0,379.8" fill="none" stroke="#5a4c44" stroke-width="2.2" opacity="0.34"/>
<polyline points="430.0,86.1 436.0,89.4 442.0,93.1 448.0,96.9 454.0,100.5 460.0,104.0 466.0,107.0 472.0,109.9 478.0,112.6 484.0,115.5 490.0,118.5 496.0,121.8 502.0,125.2 508.0,128.4 514.0,131.4 520.0,134.1 526.0,136.5 532.0,138.8 538.0,141.2 544.0,144.0 550.0,147.0 556.0,150.4 562.0,153.8 568.0,157.1 574.0,160.2 580.0,163.2 586.0,166.0 592.0,168.8 598.0,172.0 604.0,175.4 610.0,179.1 616.0,182.9 622.0,186.5 628.0,189.7 634.0,192.7 640.0,195.3 646.0,197.9 652.0,200.5 658.0,203.4 664.0,206.5 670.0,209.8 676.0,212.9 682.0,215.9 688.0,218.5 694.0,221.0 700.0,223.4 706.0,225.9 712.0,228.8 718.0,232.1 724.0,235.6 730.0,239.3 736.0,242.8 742.0,246.0 748.0,249.0 754.0,251.9 760.0,254.8 766.0,258.0 772.0,261.4 778.0,264.9 784.0,268.5 790.0,272.0 796.0,275.0 802.0,277.7 808.0,280.2 814.0,282.6 820.0,285.1 826.0,287.9 832.0,291.0 838.0,294.2 844.0,297.4 850.0,300.4 856.0,303.2 862.0,305.8 868.0,308.3 874.0,311.1 880.0,314.2 886.0,317.7 892.0,321.4 898.0,325.1 904.0,328.7 910.0,332.0 916.0,335.0 922.0,337.8 928.0,340.6 934.0,343.7 940.0,346.9 946.0,350.3 952.0,353.7 958.0,356.9 964.0,359.8 970.0,362.4 976.0,364.7 982.0,367.0 988.0,369.5 994.0,372.4 1000.0,375.6 1006.0,378.9" fill="none" stroke="#5a4c44" stroke-width="1.0" opacity="0.26"/>
<polyline points="430.0,94.8 436.0,97.4 442.0,100.0 448.0,102.9 454.0,105.9 460.0,108.8 466.0,111.3 472.0,113.5 478.0,115.8 484.0,118.6 490.0,121.6 496.0,124.7 502.0,127.5 508.0,130.1 514.0,132.9 520.0,136.0 526.0,139.4 532.0,142.6 538.0,145.3 544.0,147.7 550.0,150.2 556.0,153.0 562.0,155.9 568.0,158.6 574.0,161.0 580.0,163.3 586.0,165.8 592.0,168.9 598.0,172.1 604.0,175.3 610.0,178.1 616.0,180.7 622.0,183.6 628.0,186.8 634.0,190.0 640.0,192.9 646.0,195.3 652.0,197.6 658.0,200.1 664.0,202.9 670.0,205.8 676.0,208.5 682.0,211.0 688.0,213.5 694.0,216.3 700.0,219.6 706.0,222.9 712.0,226.0 718.0,228.7 724.0,231.3 730.0,234.1 736.0,237.2 742.0,240.2 748.0,242.9 754.0,245.1 760.0,247.3 766.0,249.9 772.0,252.9 778.0,255.9 784.0,258.7 790.0,261.3 796.0,264.0 802.0,267.0 808.0,270.4 814.0,273.7 820.0,276.6 826.0,279.1 832.0,281.6 838.0,284.4 844.0,287.3 850.0,290.2 856.0,292.6 862.0,294.8 868.0,297.2 874.0,300.1 880.0,303.3 886.0,306.4 892.0,309.3 898.0,311.9 904.0,314.7 910.0,317.9 916.0,321.2 922.0,324.2 928.0,326.9 934.0,329.2 940.0,331.6 946.0,334.3 952.0,337.2 958.0,340.0 964.0,342.5 970.0,344.8 976.0,347.5 982.0,350.6 988.0,353.9 994.0,357.1 1000.0,359.9 1006.0,362.6" fill="none" stroke="#5a4c44" stroke-width="0.8" opacity="0.18"/>
<polyline points="430.0,99.4 436.0,102.0 442.0,104.6 448.0,107.1 454.0,109.9 460.0,112.8 466.0,115.9 472.0,119.2 478.0,122.5 484.0,125.8 490.0,129.0 496.0,132.1 502.0,135.0 508.0,137.8 514.0,140.7 520.0,143.7 526.0,146.8 532.0,150.3 538.0,153.9 544.0,157.6 550.0,161.4 556.0,165.0 562.0,168.4 568.0,171.6 574.0,174.6 580.0,177.5 586.0,180.4 592.0,183.3 598.0,186.4 604.0,189.6 610.0,193.0 616.0,196.3 622.0,199.6 628.0,202.8 634.0,205.7 640.0,208.4 646.0,211.0 652.0,213.5 658.0,216.1 664.0,218.9 670.0,221.9 676.0,225.2 682.0,228.6 688.0,232.1 694.0,235.5 700.0,238.9 706.0,242.1 712.0,245.1 718.0,248.1 724.0,251.0 730.0,254.1 736.0,257.4 742.0,260.9 748.0,264.5 754.0,268.2 760.0,271.9 766.0,275.4 772.0,278.7 778.0,281.8 784.0,284.6 790.0,287.3 796.0,290.1 802.0,292.8 808.0,295.8 814.0,298.9 820.0,302.2 826.0,305.4 832.0,308.7 838.0,311.8 844.0,314.7 850.0,317.4 856.0,320.0 862.0,322.7 868.0,325.4 874.0,328.4 880.0,331.5 886.0,335.0 892.0,338.6 898.0,342.2 904.0,345.8 910.0,349.2 916.0,352.5 922.0,355.6 928.0,358.6 934.0,361.6 940.0,364.7 946.0,368.0 952.0,371.4 958.0,374.9 964.0,378.5 970.0,382.0 976.0,385.4 982.0,388.5 988.0,391.4 994.0,394.1 1000.0,396.6 1006.0,399.2" fill="none" stroke="#5a4c44" stroke-width="1.0" opacity="0.15"/>
<polyline points="430.0,101.5 436.0,104.8 442.0,108.1 448.0,111.4 454.0,114.7 460.0,118.2 466.0,121.8 472.0,125.3 478.0,128.7 484.0,131.9 490.0,134.9 496.0,138.0 502.0,141.1 508.0,144.4 514.0,147.8 520.0,151.4 526.0,155.0 532.0,158.5 538.0,161.8 544.0,165.1 550.0,168.4 556.0,171.9 562.0,175.5 568.0,179.2 574.0,182.9 580.0,186.6 586.0,190.0 592.0,193.3 598.0,196.5 604.0,199.7 610.0,202.9 616.0,206.3 622.0,209.8 628.0,213.3 634.0,216.6 640.0,219.8 646.0,222.9 652.0,226.0 658.0,229.2 664.0,232.6 670.0,236.1 676.0,239.8 682.0,243.5 688.0,247.0 694.0,250.5 700.0,253.8 706.0,257.1 712.0,260.5 718.0,264.1 724.0,267.8 730.0,271.4 736.0,275.0 742.0,278.4 748.0,281.6 754.0,284.7 760.0,287.7 766.0,290.9 772.0,294.3 778.0,297.8 784.0,301.2 790.0,304.7 796.0,307.9 802.0,311.1 808.0,314.3 814.0,317.5 820.0,321.0 826.0,324.7 832.0,328.4 838.0,332.1 844.0,335.7 850.0,339.2 856.0,342.5 862.0,345.8 868.0,349.1 874.0,352.6 880.0,356.1 886.0,359.7 892.0,363.2 898.0,366.5 904.0,369.6 910.0,372.7 916.0,375.7 922.0,378.9 928.0,382.3 934.0,385.8 940.0,389.4 946.0,392.9 952.0,396.2 958.0,399.5 964.0,402.8 970.0,406.1 976.0,409.6 982.0,413.3 988.0,417.1 994.0,420.8 1000.0,424.4 1006.0,427.8" fill="none" stroke="#5a4c44" stroke-width="0.8" opacity="0.22"/>
<polyline points="430.0,109.1 436.0,112.0 442.0,114.6 448.0,117.1 454.0,119.7 460.0,122.5 466.0,125.6 472.0,129.1 478.0,132.8 484.0,136.5 490.0,140.0 496.0,143.1 502.0,146.1 508.0,149.0 514.0,151.9 520.0,155.1 526.0,158.5 532.0,162.0 538.0,165.4 544.0,168.6 550.0,171.4 556.0,173.9 562.0,176.2 568.0,178.7 574.0,181.3 580.0,184.3 586.0,187.5 592.0,190.8 598.0,194.0 604.0,197.0 610.0,199.8 616.0,202.5 622.0,205.3 628.0,208.4 634.0,211.8 640.0,215.5 646.0,219.3 652.0,222.9 658.0,226.2 664.0,229.3 670.0,232.0 676.0,234.8 682.0,237.6 688.0,240.7 694.0,244.0 700.0,247.3 706.0,250.5 712.0,253.4 718.0,256.0 724.0,258.4 730.0,260.7 736.0,263.3 742.0,266.2 748.0,269.4 754.0,272.8 760.0,276.3 766.0,279.6 772.0,282.7 778.0,285.5 784.0,288.4 790.0,291.4 796.0,294.7 802.0,298.2 808.0,301.9 814.0,305.6 820.0,309.1 826.0,312.1 832.0,314.9 838.0,317.4 844.0,320.0 850.0,322.7 856.0,325.8 862.0,328.9 868.0,332.1 874.0,335.2 880.0,338.0 886.0,340.6 892.0,343.0 898.0,345.5 904.0,348.4 910.0,351.6 916.0,355.1 922.0,358.7 928.0,362.3 934.0,365.7 940.0,368.8 946.0,371.7 952.0,374.6 958.0,377.6 964.0,380.9 970.0,384.5 976.0,388.0 982.0,391.5 988.0,394.6 994.0,397.3 1000.0,399.8 1006.0,402.2" fill="none" stroke="#5a4c44" stroke-width="1.4" opacity="0.31"/>
<polyline points="430.0,113.0 436.0,116.2 442.0,119.4 448.0,122.8 454.0,126.5 460.0,130.4 466.0,134.2 472.0,138.0 478.0,141.6 484.0,145.0 490.0,148.3 496.0,151.6 502.0,155.0 508.0,158.5 514.0,162.2 520.0,165.8 526.0,169.4 532.0,172.7 538.0,175.9 544.0,178.8 550.0,181.8 556.0,184.8 562.0,188.1 568.0,191.6 574.0,195.2 580.0,198.8 586.0,202.4 592.0,205.7 598.0,209.0 604.0,212.2 610.0,215.6 616.0,219.1 622.0,222.9 628.0,226.8 634.0,230.6 640.0,234.4 646.0,237.9 652.0,241.2 658.0,244.4 664.0,247.6 670.0,250.8 676.0,254.2 682.0,257.8 688.0,261.3 694.0,264.8 700.0,268.1 706.0,271.2 712.0,274.2 718.0,277.2 724.0,280.3 730.0,283.7 736.0,287.3 742.0,291.0 748.0,294.8 754.0,298.4 760.0,301.9 766.0,305.2 772.0,308.5 778.0,311.9 784.0,315.5 790.0,319.2 796.0,323.1 802.0,326.9 808.0,330.5 814.0,333.9 820.0,337.1 826.0,340.1 832.0,343.2 838.0,346.3 844.0,349.7 850.0,353.2 856.0,356.7 862.0,360.2 868.0,363.5 874.0,366.6 880.0,369.7 886.0,372.8 892.0,376.1 898.0,379.6 904.0,383.4 910.0,387.2 916.0,391.0 922.0,394.7 928.0,398.2 934.0,401.6 940.0,404.9 946.0,408.2 952.0,411.7 958.0,415.4 964.0,419.1 970.0,422.8 976.0,426.3 982.0,429.5 988.0,432.6 994.0,435.5 1000.0,438.5 1006.0,441.7" fill="none" stroke="#5a4c44" stroke-width="1.4" opacity="0.33"/>
<polyline points="430.0,117.4 436.0,119.7 442.0,122.0 448.0,124.6 454.0,127.5 460.0,130.9 466.0,134.4 472.0,137.8 478.0,140.9 484.0,143.8 490.0,146.6 496.0,149.5 502.0,152.6 508.0,156.1 514.0,159.6 520.0,163.0 526.0,166.1 532.0,168.7 538.0,171.1 544.0,173.4 550.0,176.0 556.0,178.8 562.0,181.8 568.0,185.0 574.0,187.9 580.0,190.6 586.0,193.1 592.0,195.5 598.0,198.3 604.0,201.4 610.0,204.8 616.0,208.5 622.0,212.0 628.0,215.3 634.0,218.2 640.0,220.9 646.0,223.7 652.0,226.7 658.0,229.9 664.0,233.3 670.0,236.5 676.0,239.4 682.0,242.0 688.0,244.2 694.0,246.5 700.0,248.9 706.0,251.8 712.0,254.9 718.0,258.1 724.0,261.3 730.0,264.2 736.0,266.8 742.0,269.5 748.0,272.3 754.0,275.5 760.0,279.1 766.0,282.8 772.0,286.3 778.0,289.5 784.0,292.4 790.0,295.0 796.0,297.6 802.0,300.3 808.0,303.4 814.0,306.5 820.0,309.7 826.0,312.5 832.0,315.0 838.0,317.3 844.0,319.6 850.0,322.1 856.0,325.0 862.0,328.3 868.0,331.7 874.0,335.1 880.0,338.2 886.0,341.0 892.0,343.8 898.0,346.7 904.0,349.9 910.0,353.4 916.0,357.0 922.0,360.4 928.0,363.5 934.0,366.2 940.0,368.6 946.0,371.0 952.0,373.6 958.0,376.4 964.0,379.5 970.0,382.6 976.0,385.5 982.0,388.1 988.0,390.5 994.0,392.9 1000.0,395.6 1006.0,398.7" fill="none" stroke="#5a4c44" stroke-width="1.8" opacity="0.16"/>
<polyline points="430.0,122.8 436.0,126.2 442.0,129.4 448.0,132.4 454.0,135.2 460.0,137.7 466.0,139.9 472.0,142.1 478.0,144.4 484.0,146.8 490.0,149.4 496.0,152.2 502.0,155.2 508.0,158.2 514.0,161.1 520.0,163.9 526.0,166.5 532.0,168.9 538.0,171.3 544.0,173.7 550.0,176.3 556.0,179.2 562.0,182.3 568.0,185.7 574.0,189.1 580.0,192.6 586.0,196.0 592.0,199.1 598.0,202.0 604.0,204.7 610.0,207.3 616.0,209.9 622.0,212.6 628.0,215.5 634.0,218.5 640.0,221.7 646.0,224.8 652.0,227.9 658.0,230.7 664.0,233.3 670.0,235.6 676.0,237.8 682.0,239.9 688.0,242.1 694.0,244.6 700.0,247.2 706.0,250.1 712.0,253.2 718.0,256.3 724.0,259.4 730.0,262.4 736.0,265.1 742.0,267.7 748.0,270.3 754.0,272.9 760.0,275.7 766.0,278.6 772.0,281.9 778.0,285.3 784.0,288.8 790.0,292.3 796.0,295.6 802.0,298.6 808.0,301.4 814.0,303.9 820.0,306.3 826.0,308.8 832.0,311.3 838.0,314.0 844.0,316.9 850.0,319.9 856.0,322.9 862.0,325.9 868.0,328.6 874.0,331.1 880.0,333.4 886.0,335.6 892.0,337.8 898.0,340.1 904.0,342.6 910.0,345.5 916.0,348.6 922.0,351.8 928.0,355.1 934.0,358.4 940.0,361.5 946.0,364.4 952.0,367.1 958.0,369.8 964.0,372.5 970.0,375.3 976.0,378.3 982.0,381.5 988.0,384.9 994.0,388.3 1000.0,391.6 1006.0,394.7" fill="none" stroke="#5a4c44" stroke-width="1.8" opacity="0.27"/>
<polyline points="430.0,128.8 436.0,132.4 442.0,135.6 448.0,138.7 454.0,142.0 460.0,145.6 466.0,149.2 472.0,152.3 478.0,154.9 484.0,157.4 490.0,160.5 496.0,164.0 502.0,167.6 508.0,170.9 514.0,173.9 520.0,177.0 526.0,180.7 532.0,184.7 538.0,188.6 544.0,191.9 550.0,194.8 556.0,197.7 562.0,201.0 568.0,204.5 574.0,207.8 580.0,210.6 586.0,213.2 592.0,216.0 598.0,219.4 604.0,223.2 610.0,226.9 616.0,230.2 622.0,233.3 628.0,236.7 634.0,240.5 640.0,244.4 646.0,247.9 652.0,250.8 658.0,253.5 664.0,256.4 670.0,259.7 676.0,263.1 682.0,266.3 688.0,269.1 694.0,271.9 700.0,275.1 706.0,278.9 712.0,282.9 718.0,286.5 724.0,289.7 730.0,292.8 736.0,296.2 742.0,299.9 748.0,303.6 754.0,306.7 760.0,309.3 766.0,311.9 772.0,314.9 778.0,318.4 784.0,321.9 790.0,325.1 796.0,328.0 802.0,331.1 808.0,334.8 814.0,338.8 820.0,342.7 826.0,346.1 832.0,349.0 838.0,352.0 844.0,355.4 850.0,358.9 856.0,362.2 862.0,365.0 868.0,367.6 874.0,370.4 880.0,373.7 886.0,377.5 892.0,381.1 898.0,384.3 904.0,387.4 910.0,390.8 916.0,394.6 922.0,398.6 928.0,402.2 934.0,405.2 940.0,407.9 946.0,410.8 952.0,414.1 958.0,417.6 964.0,420.7 970.0,423.4 976.0,426.2 982.0,429.3 988.0,433.1 994.0,437.0 1000.0,440.6 1006.0,443.8" fill="none" stroke="#5a4c44" stroke-width="0.8" opacity="0.20"/>
<polyline points="430.0,136.8 436.0,139.4 442.0,141.7 448.0,143.9 454.0,146.1 460.0,148.4 466.0,151.0 472.0,153.9 478.0,157.1 484.0,160.4 490.0,163.7 496.0,167.0 502.0,170.1 508.0,172.9 514.0,175.6 520.0,178.2 526.0,180.9 532.0,183.8 538.0,187.0 544.0,190.5 550.0,194.2 556.0,198.1 562.0,202.1 568.0,205.8 574.0,209.3 580.0,212.4 586.0,215.3 592.0,218.0 598.0,220.6 604.0,223.3 610.0,226.1 616.0,229.2 622.0,232.5 628.0,235.8 634.0,239.1 640.0,242.3 646.0,245.1 652.0,247.7 658.0,250.0 664.0,252.2 670.0,254.4 676.0,256.7 682.0,259.4 688.0,262.4 694.0,265.6 700.0,269.1 706.0,272.7 712.0,276.2 718.0,279.6 724.0,282.7 730.0,285.6 736.0,288.4 742.0,291.3 748.0,294.2 754.0,297.4 760.0,300.9 766.0,304.6 772.0,308.4 778.0,312.3 784.0,315.9 790.0,319.3 796.0,322.3 802.0,325.0 808.0,327.5 814.0,329.9 820.0,332.3 826.0,334.9 832.0,337.7 838.0,340.8 844.0,344.0 850.0,347.2 856.0,350.4 862.0,353.3 868.0,356.0 874.0,358.4 880.0,360.7 886.0,363.1 892.0,365.6 898.0,368.3 904.0,371.5 910.0,374.9 916.0,378.6 922.0,382.4 928.0,386.2 934.0,389.7 940.0,393.1 946.0,396.1 952.0,399.0 958.0,401.8 964.0,404.7 970.0,407.8 976.0,411.1 982.0,414.6 988.0,418.3 994.0,421.9 1000.0,425.4 1006.0,428.6" fill="none" stroke="#5a4c44" stroke-width="1.4" opacity="0.20"/>
<polyline points="430.0,139.6 436.0,143.1 442.0,146.4 448.0,148.9 454.0,151.0 460.0,153.2 466.0,156.1 472.0,159.5 478.0,162.5 484.0,165.2 490.0,167.8 496.0,171.1 502.0,175.0 508.0,178.7 514.0,181.8 520.0,184.3 526.0,186.9 532.0,190.1 538.0,193.3 544.0,196.0 550.0,198.2 556.0,200.3 562.0,203.1 568.0,206.6 574.0,210.1 580.0,213.1 586.0,215.8 592.0,218.9 598.0,222.6 604.0,226.3 610.0,229.5 616.0,231.9 622.0,234.2 628.0,236.9 634.0,240.1 640.0,243.0 646.0,245.5 652.0,247.7 658.0,250.4 664.0,253.9 670.0,257.7 676.0,261.1 682.0,263.9 688.0,266.8 694.0,270.1 700.0,273.7 706.0,276.9 712.0,279.3 718.0,281.4 724.0,283.8 730.0,286.8 736.0,290.0 742.0,292.9 748.0,295.4 754.0,298.1 760.0,301.5 766.0,305.4 772.0,309.0 778.0,312.0 784.0,314.6 790.0,317.4 796.0,320.7 802.0,323.9 808.0,326.5 814.0,328.6 820.0,330.8 826.0,333.7 832.0,337.1 838.0,340.4 844.0,343.3 850.0,346.0 856.0,349.2 862.0,353.0 868.0,356.8 874.0,359.8 880.0,362.2 886.0,364.6 892.0,367.5 898.0,370.7 904.0,373.6 910.0,375.8 916.0,378.0 922.0,380.8 928.0,384.4 934.0,388.1 940.0,391.3 946.0,394.1 952.0,397.0 958.0,400.5 964.0,404.2 970.0,407.3 976.0,409.7 982.0,411.8 988.0,414.3 994.0,417.4 1000.0,420.6 1006.0,423.2" fill="none" stroke="#5a4c44" stroke-width="1.2" opacity="0.21"/>
<polyline points="430.0,143.1 436.0,146.2 442.0,149.2 448.0,151.9 454.0,154.5 460.0,156.9 466.0,159.3 472.0,161.8 478.0,164.4 484.0,167.2 490.0,170.1 496.0,173.0 502.0,175.7 508.0,178.2 514.0,180.6 520.0,182.9 526.0,185.3 532.0,187.8 538.0,190.5 544.0,193.5 550.0,196.7 556.0,199.8 562.0,202.9 568.0,205.8 574.0,208.6 580.0,211.3 586.0,213.9 592.0,216.6 598.0,219.5 604.0,222.5 610.0,225.7 616.0,228.8 622.0,231.7 628.0,234.5 634.0,237.0 640.0,239.3 646.0,241.6 652.0,244.0 658.0,246.5 664.0,249.1 670.0,252.0 676.0,254.8 682.0,257.7 688.0,260.4 694.0,263.0 700.0,265.4 706.0,267.9 712.0,270.4 718.0,273.2 724.0,276.1 730.0,279.3 736.0,282.5 742.0,285.8 748.0,288.8 754.0,291.7 760.0,294.4 766.0,297.0 772.0,299.5 778.0,302.2 784.0,305.0 790.0,308.0 796.0,311.0 802.0,313.9 808.0,316.7 814.0,319.3 820.0,321.6 826.0,323.9 832.0,326.1 838.0,328.5 844.0,331.1 850.0,333.9 856.0,336.9 862.0,339.8 868.0,342.8 874.0,345.6 880.0,348.2 886.0,350.8 892.0,353.4 898.0,356.1 904.0,359.0 910.0,362.1 916.0,365.3 922.0,368.6 928.0,371.7 934.0,374.6 940.0,377.3 946.0,379.9 952.0,382.3 958.0,384.8 964.0,387.4 970.0,390.1 976.0,393.0 982.0,395.9 988.0,398.7 994.0,401.3 1000.0,403.8 1006.0,406.1" fill="none" stroke="#5a4c44" stroke-width="2.2" opacity="0.16"/>
<polyline points="430.0,151.3 436.0,154.4 442.0,157.4 448.0,160.2 454.0,162.8 460.0,165.6 466.0,168.5 472.0,171.7 478.0,175.0 484.0,178.1 490.0,181.0 496.0,183.7 502.0,186.2 508.0,189.0 514.0,191.9 520.0,194.8 526.0,197.7 532.0,200.3 538.0,202.8 544.0,205.2 550.0,207.9 556.0,210.9 562.0,214.0 568.0,217.1 574.0,220.1 580.0,222.8 586.0,225.6 592.0,228.5 598.0,231.6 604.0,234.8 610.0,237.9 616.0,240.8 622.0,243.3 628.0,245.8 634.0,248.4 640.0,251.2 646.0,254.1 652.0,257.0 658.0,259.7 664.0,262.3 670.0,264.8 676.0,267.6 682.0,270.6 688.0,273.8 694.0,277.0 700.0,280.1 706.0,282.9 712.0,285.6 718.0,288.4 724.0,291.4 730.0,294.5 736.0,297.5 742.0,300.3 748.0,302.8 754.0,305.2 760.0,307.8 766.0,310.5 772.0,313.5 778.0,316.5 784.0,319.3 790.0,322.0 796.0,324.7 802.0,327.5 808.0,330.5 814.0,333.7 820.0,337.0 826.0,340.1 832.0,342.9 838.0,345.5 844.0,348.2 850.0,351.0 856.0,354.0 862.0,356.9 868.0,359.7 874.0,362.3 880.0,364.7 886.0,367.2 892.0,369.9 898.0,373.0 904.0,376.1 910.0,379.1 916.0,381.9 922.0,384.6 928.0,387.4 934.0,390.5 940.0,393.7 946.0,396.9 952.0,399.9 958.0,402.7 964.0,405.2 970.0,407.7 976.0,410.4 982.0,413.3 988.0,416.3 994.0,419.1 1000.0,421.7 1006.0,424.2" fill="none" stroke="#5a4c44" stroke-width="2.2" opacity="0.13"/>
<polyline points="430.0,154.9 436.0,157.0 442.0,159.1 448.0,161.5 454.0,164.3 460.0,167.2 466.0,170.4 472.0,173.5 478.0,176.6 484.0,179.5 490.0,182.2 496.0,184.7 502.0,187.1 508.0,189.7 514.0,192.4 520.0,195.5 526.0,198.8 532.0,202.4 538.0,206.0 544.0,209.6 550.0,213.0 556.0,216.2 562.0,219.0 568.0,221.5 574.0,223.9 580.0,226.3 586.0,228.7 592.0,231.4 598.0,234.3 604.0,237.3 610.0,240.4 616.0,243.4 622.0,246.2 628.0,248.7 634.0,251.0 640.0,253.1 646.0,255.1 652.0,257.2 658.0,259.5 664.0,262.1 670.0,265.1 676.0,268.3 682.0,271.6 688.0,275.0 694.0,278.3 700.0,281.3 706.0,284.2 712.0,286.8 718.0,289.4 724.0,292.1 730.0,295.0 736.0,298.1 742.0,301.4 748.0,304.9 754.0,308.5 760.0,311.9 766.0,315.1 772.0,318.0 778.0,320.6 784.0,322.9 790.0,325.0 796.0,327.2 802.0,329.5 808.0,332.0 814.0,334.8 820.0,337.7 826.0,340.7 832.0,343.7 838.0,346.5 844.0,349.0 850.0,351.4 856.0,353.5 862.0,355.7 868.0,358.0 874.0,360.6 880.0,363.5 886.0,366.7 892.0,370.2 898.0,373.7 904.0,377.3 910.0,380.6 916.0,383.8 922.0,386.6 928.0,389.3 934.0,391.9 940.0,394.6 946.0,397.4 952.0,400.4 958.0,403.6 964.0,406.9 970.0,410.3 976.0,413.5 982.0,416.4 988.0,419.0 994.0,421.3 1000.0,423.4 1006.0,425.4" fill="none" stroke="#5a4c44" stroke-width="1.4" opacity="0.25"/>
<polyline points="430.0,161.2 436.0,164.2 442.0,167.1 448.0,170.4 454.0,173.9 460.0,177.4 466.0,180.3 472.0,182.9 478.0,185.7 484.0,188.8 490.0,191.9 496.0,194.6 502.0,197.1 508.0,200.0 514.0,203.3 520.0,206.8 526.0,210.1 532.0,213.0 538.0,216.0 544.0,219.4 550.0,222.8 556.0,225.8 562.0,228.4 568.0,230.9 574.0,233.8 580.0,237.0 586.0,240.0 592.0,242.8 598.0,245.5 604.0,248.8 610.0,252.4 616.0,255.9 622.0,258.9 628.0,261.7 634.0,264.7 640.0,268.0 646.0,271.2 652.0,273.8 658.0,276.2 664.0,279.0 670.0,282.2 676.0,285.5 682.0,288.5 688.0,291.3 694.0,294.4 700.0,297.9 706.0,301.5 712.0,304.6 718.0,307.3 724.0,310.1 730.0,313.2 736.0,316.3 742.0,319.2 748.0,321.7 754.0,324.3 760.0,327.5 766.0,330.9 772.0,334.2 778.0,337.2 784.0,340.2 790.0,343.5 796.0,347.0 802.0,350.2 808.0,352.9 814.0,355.4 820.0,358.3 826.0,361.4 832.0,364.5 838.0,367.2 844.0,369.8 850.0,372.9 856.0,376.4 862.0,379.9 868.0,383.1 874.0,386.0 880.0,389.0 886.0,392.3 892.0,395.6 898.0,398.4 904.0,400.8 910.0,403.4 916.0,406.5 922.0,409.8 928.0,412.8 934.0,415.6 940.0,418.5 946.0,421.9 952.0,425.6 958.0,428.9 964.0,431.7 970.0,434.5 976.0,437.5 982.0,440.7 988.0,443.7 994.0,446.3 1000.0,448.8 1006.0,451.7" fill="none" stroke="#5a4c44" stroke-width="0.8" opacity="0.17"/>
<polyline points="430.0,163.5 436.0,165.9 442.0,168.6 448.0,171.4 454.0,174.4 460.0,177.4 466.0,180.2 472.0,182.8 478.0,185.5 484.0,188.4 490.0,191.6 496.0,194.9 502.0,198.1 508.0,201.1 514.0,203.8 520.0,206.5 526.0,209.4 532.0,212.4 538.0,215.4 544.0,218.3 550.0,221.0 556.0,223.4 562.0,225.9 568.0,228.6 574.0,231.5 580.0,234.7 586.0,237.7 592.0,240.6 598.0,243.3 604.0,246.1 610.0,249.1 616.0,252.3 622.0,255.6 628.0,258.8 634.0,261.6 640.0,264.2 646.0,266.8 652.0,269.6 658.0,272.5 664.0,275.5 670.0,278.3 676.0,280.9 682.0,283.4 688.0,286.0 694.0,288.8 700.0,291.9 706.0,295.1 712.0,298.3 718.0,301.2 724.0,304.0 730.0,306.8 736.0,309.8 742.0,313.0 748.0,316.2 754.0,319.2 760.0,321.9 766.0,324.4 772.0,326.9 778.0,329.6 784.0,332.5 790.0,335.5 796.0,338.4 802.0,341.0 808.0,343.6 814.0,346.3 820.0,349.3 826.0,352.5 832.0,355.8 838.0,359.0 844.0,361.9 850.0,364.6 856.0,367.4 862.0,370.3 868.0,373.4 874.0,376.5 880.0,379.3 886.0,381.9 892.0,384.4 898.0,386.9 904.0,389.6 910.0,392.6 916.0,395.6 922.0,398.6 928.0,401.4 934.0,404.1 940.0,406.9 946.0,409.9 952.0,413.2 958.0,416.5 964.0,419.6 970.0,422.5 976.0,425.1 982.0,427.8 988.0,430.6 994.0,433.6 1000.0,436.5 1006.0,439.3" fill="none" stroke="#5a4c44" stroke-width="1.0" opacity="0.32"/>
<polyline points="430.0,170.2 436.0,172.8 442.0,175.4 448.0,178.1 454.0,181.0 460.0,184.1 466.0,187.5 472.0,191.0 478.0,194.3 484.0,197.5 490.0,200.4 496.0,203.2 502.0,205.9 508.0,208.7 514.0,211.7 520.0,214.8 526.0,217.9 532.0,221.1 538.0,224.0 544.0,226.7 550.0,229.2 556.0,231.5 562.0,233.9 568.0,236.5 574.0,239.3 580.0,242.4 586.0,245.5 592.0,248.7 598.0,251.7 604.0,254.5 610.0,257.2 616.0,260.0 622.0,262.8 628.0,265.9 634.0,269.2 640.0,272.6 646.0,276.0 652.0,279.3 658.0,282.4 664.0,285.1 670.0,287.8 676.0,290.3 682.0,293.0 688.0,295.9 694.0,298.9 700.0,301.9 706.0,304.9 712.0,307.8 718.0,310.4 724.0,312.8 730.0,315.2 736.0,317.7 742.0,320.5 748.0,323.5 754.0,326.7 760.0,330.0 766.0,333.3 772.0,336.4 778.0,339.3 784.0,342.1 790.0,344.9 796.0,347.8 802.0,350.9 808.0,354.2 814.0,357.6 820.0,360.9 826.0,364.0 832.0,366.8 838.0,369.4 844.0,371.8 850.0,374.3 856.0,376.9 862.0,379.7 868.0,382.7 874.0,385.7 880.0,388.7 886.0,391.5 892.0,394.2 898.0,396.7 904.0,399.2 910.0,401.9 916.0,404.9 922.0,408.1 928.0,411.5 934.0,414.9 940.0,418.2 946.0,421.3 952.0,424.2 958.0,427.0 964.0,429.7 970.0,432.6 976.0,435.7 982.0,438.9 988.0,442.1 994.0,445.2 1000.0,448.1 1006.0,450.7" fill="none" stroke="#5a4c44" stroke-width="1.0" opacity="0.11"/>
<polyline points="430.0,178.2 436.0,181.5 442.0,184.7 448.0,187.8 454.0,190.7 460.0,193.3 466.0,195.6 472.0,197.8 478.0,199.9 484.0,202.0 490.0,204.2 496.0,206.6 502.0,209.3 508.0,212.2 514.0,215.3 520.0,218.4 526.0,221.6 532.0,224.6 538.0,227.5 544.0,230.2 550.0,232.8 556.0,235.3 562.0,237.9 568.0,240.5 574.0,243.5 580.0,246.6 586.0,250.0 592.0,253.5 598.0,257.2 604.0,260.7 610.0,264.1 616.0,267.3 622.0,270.3 628.0,272.9 634.0,275.4 640.0,277.9 646.0,280.3 652.0,282.9 658.0,285.6 664.0,288.5 670.0,291.5 676.0,294.6 682.0,297.6 688.0,300.5 694.0,303.3 700.0,305.8 706.0,308.0 712.0,310.2 718.0,312.3 724.0,314.5 730.0,316.8 736.0,319.4 742.0,322.3 748.0,325.4 754.0,328.6 760.0,332.0 766.0,335.4 772.0,338.6 778.0,341.6 784.0,344.5 790.0,347.2 796.0,349.8 802.0,352.5 808.0,355.3 814.0,358.3 820.0,361.5 826.0,364.9 832.0,368.4 838.0,371.9 844.0,375.3 850.0,378.5 856.0,381.5 862.0,384.2 868.0,386.7 874.0,388.9 880.0,391.2 886.0,393.4 892.0,395.8 898.0,398.4 904.0,401.2 910.0,404.1 916.0,407.1 922.0,410.1 928.0,413.0 934.0,415.8 940.0,418.3 946.0,420.7 952.0,422.9 958.0,425.2 964.0,427.5 970.0,430.1 976.0,432.9 982.0,436.0 988.0,439.4 994.0,442.9 1000.0,446.4 1006.0,449.9" fill="none" stroke="#5a4c44" stroke-width="1.0" opacity="0.26"/>
<polyline points="430.0,180.3 436.0,183.2 442.0,186.3 448.0,189.6 454.0,192.9 460.0,196.2 466.0,199.2 472.0,202.0 478.0,204.8 484.0,207.7 490.0,210.7 496.0,213.9 502.0,217.1 508.0,220.2 514.0,223.1 520.0,225.7 526.0,228.2 532.0,230.6 538.0,233.3 544.0,236.1 550.0,239.1 556.0,242.2 562.0,245.2 568.0,248.0 574.0,250.7 580.0,253.4 586.0,256.2 592.0,259.2 598.0,262.4 604.0,265.8 610.0,269.1 616.0,272.3 622.0,275.3 628.0,278.0 634.0,280.7 640.0,283.5 646.0,286.5 652.0,289.5 658.0,292.6 664.0,295.6 670.0,298.3 676.0,300.9 682.0,303.3 688.0,305.8 694.0,308.5 700.0,311.4 706.0,314.6 712.0,317.7 718.0,320.8 724.0,323.8 730.0,326.6 736.0,329.4 742.0,332.3 748.0,335.3 754.0,338.6 760.0,342.0 766.0,345.3 772.0,348.3 778.0,351.2 784.0,353.8 790.0,356.4 796.0,359.0 802.0,361.9 808.0,364.9 814.0,367.9 820.0,370.8 826.0,373.5 832.0,376.1 838.0,378.6 844.0,381.2 850.0,384.0 856.0,387.1 862.0,390.4 868.0,393.7 874.0,396.9 880.0,399.9 886.0,402.7 892.0,405.5 898.0,408.4 904.0,411.5 910.0,414.7 916.0,418.0 922.0,421.1 928.0,424.0 934.0,426.7 940.0,429.2 946.0,431.7 952.0,434.3 958.0,437.1 964.0,440.1 970.0,443.1 976.0,446.1 982.0,448.9 988.0,451.5 994.0,454.2 1000.0,456.9 1006.0,459.9" fill="none" stroke="#5a4c44" stroke-width="2.2" opacity="0.10"/>
<polyline points="430.0,184.9 436.0,187.7 442.0,190.6 448.0,193.5 454.0,196.5 460.0,199.5 466.0,202.6 472.0,205.6 478.0,208.6 484.0,211.4 490.0,214.2 496.0,216.9 502.0,219.6 508.0,222.3 514.0,225.0 520.0,227.9 526.0,230.8 532.0,233.7 538.0,236.5 544.0,239.4 550.0,242.1 556.0,244.8 562.0,247.5 568.0,250.2 574.0,252.9 580.0,255.7 586.0,258.6 592.0,261.5 598.0,264.6 604.0,267.6 610.0,270.6 616.0,273.5 622.0,276.4 628.0,279.2 634.0,282.0 640.0,284.8 646.0,287.7 652.0,290.6 658.0,293.6 664.0,296.6 670.0,299.6 676.0,302.6 682.0,305.4 688.0,308.2 694.0,310.8 700.0,313.5 706.0,316.1 712.0,318.8 718.0,321.6 724.0,324.4 730.0,327.3 736.0,330.2 742.0,333.1 748.0,336.0 754.0,338.7 760.0,341.5 766.0,344.2 772.0,346.9 778.0,349.7 784.0,352.6 790.0,355.6 796.0,358.7 802.0,361.7 808.0,364.8 814.0,367.8 820.0,370.7 826.0,373.5 832.0,376.3 838.0,379.0 844.0,381.8 850.0,384.7 856.0,387.6 862.0,390.5 868.0,393.5 874.0,396.4 880.0,399.2 886.0,402.0 892.0,404.7 898.0,407.3 904.0,409.9 910.0,412.6 916.0,415.3 922.0,418.1 928.0,421.0 934.0,424.0 940.0,427.0 946.0,429.9 952.0,432.8 958.0,435.6 964.0,438.3 970.0,441.1 976.0,443.9 982.0,446.8 988.0,449.8 994.0,452.8 1000.0,455.9 1006.0,458.9" fill="none" stroke="#5a4c44" stroke-width="1.2" opacity="0.16"/>
<polyline points="430.0,193.3 436.0,196.6 442.0,199.5 448.0,202.2 454.0,204.7 460.0,207.3 466.0,210.0 472.0,213.0 478.0,216.2 484.0,219.5 490.0,222.8 496.0,225.8 502.0,228.6 508.0,231.3 514.0,233.8 520.0,236.4 526.0,239.3 532.0,242.5 538.0,246.0 544.0,249.7 550.0,253.5 556.0,257.2 562.0,260.7 568.0,263.9 574.0,266.9 580.0,269.8 586.0,272.8 592.0,276.0 598.0,279.5 604.0,283.1 610.0,286.7 616.0,290.1 622.0,293.3 628.0,296.2 634.0,298.7 640.0,301.1 646.0,303.6 652.0,306.2 658.0,309.0 664.0,312.2 670.0,315.5 676.0,318.9 682.0,322.2 688.0,325.2 694.0,328.1 700.0,330.8 706.0,333.6 712.0,336.5 718.0,339.8 724.0,343.4 730.0,347.2 736.0,351.1 742.0,354.8 748.0,358.4 754.0,361.6 760.0,364.6 766.0,367.4 772.0,370.2 778.0,373.2 784.0,376.3 790.0,379.7 796.0,383.1 802.0,386.5 808.0,389.6 814.0,392.4 820.0,395.0 826.0,397.4 832.0,399.8 838.0,402.4 844.0,405.2 850.0,408.4 856.0,411.9 862.0,415.4 868.0,418.9 874.0,422.2 880.0,425.3 886.0,428.3 892.0,431.2 898.0,434.2 904.0,437.4 910.0,441.0 916.0,444.7 922.0,448.6 928.0,452.3 934.0,455.8 940.0,459.0 946.0,461.9 952.0,464.6 958.0,467.2 964.0,469.9 970.0,472.8 976.0,475.9 982.0,479.2 988.0,482.5 994.0,485.7 1000.0,488.6 1006.0,491.2" fill="none" stroke="#5a4c44" stroke-width="1.2" opacity="0.35"/>
<polyline points="430.0,196.7 436.0,200.3 442.0,203.6 448.0,206.5 454.0,209.5 460.0,212.7 466.0,216.2 472.0,219.7 478.0,222.9 484.0,225.9 490.0,228.8 496.0,232.0 502.0,235.6 508.0,239.5 514.0,243.4 520.0,247.0 526.0,250.3 532.0,253.5 538.0,257.0 544.0,260.7 550.0,264.5 556.0,268.0 562.0,271.1 568.0,274.0 574.0,276.8 580.0,280.0 586.0,283.5 592.0,287.1 598.0,290.4 604.0,293.6 610.0,296.6 616.0,299.9 622.0,303.7 628.0,307.6 634.0,311.6 640.0,315.2 646.0,318.4 652.0,321.6 658.0,324.9 664.0,328.4 670.0,332.1 676.0,335.5 682.0,338.5 688.0,341.3 694.0,344.2 700.0,347.4 706.0,350.9 712.0,354.7 718.0,358.2 724.0,361.5 730.0,364.7 736.0,368.1 742.0,371.8 748.0,375.8 754.0,379.7 760.0,383.2 766.0,386.4 772.0,389.3 778.0,392.4 784.0,395.8 790.0,399.4 796.0,402.8 802.0,405.9 808.0,408.7 814.0,411.6 820.0,415.0 826.0,418.7 832.0,422.6 838.0,426.3 844.0,429.7 850.0,433.0 856.0,436.3 862.0,440.0 868.0,443.8 874.0,447.6 880.0,451.0 886.0,454.0 892.0,456.8 898.0,459.8 904.0,463.1 910.0,466.7 916.0,470.1 922.0,473.3 928.0,476.3 934.0,479.4 940.0,482.9 946.0,486.7 952.0,490.7 958.0,494.5 964.0,498.0 970.0,501.2 976.0,504.4 982.0,507.9 988.0,511.6 994.0,515.2 1000.0,518.5 1006.0,521.4" fill="none" stroke="#5a4c44" stroke-width="1.8" opacity="0.27"/>
<polyline points="430.0,202.9 436.0,205.2 442.0,207.0 448.0,209.2 454.0,212.1 460.0,215.1 466.0,217.5 472.0,219.7 478.0,222.4 484.0,225.9 490.0,229.6 496.0,232.7 502.0,235.2 508.0,237.7 514.0,240.8 520.0,243.9 526.0,246.4 532.0,248.2 538.0,250.1 544.0,252.9 550.0,256.1 556.0,259.0 562.0,261.5 568.0,264.1 574.0,267.4 580.0,271.2 586.0,274.5 592.0,276.9 598.0,279.0 604.0,281.6 610.0,284.6 616.0,287.3 622.0,289.3 628.0,291.2 634.0,293.9 640.0,297.3 646.0,300.7 652.0,303.5 658.0,306.0 664.0,309.0 670.0,312.6 676.0,315.9 682.0,318.4 688.0,320.3 694.0,322.4 700.0,325.2 706.0,328.2 712.0,330.6 718.0,332.7 724.0,335.2 730.0,338.6 736.0,342.3 742.0,345.5 748.0,348.0 754.0,350.6 760.0,353.7 766.0,357.0 772.0,359.6 778.0,361.4 784.0,363.3 790.0,365.9 796.0,369.1 802.0,372.0 808.0,374.4 814.0,376.9 820.0,380.1 826.0,383.9 832.0,387.3 838.0,389.8 844.0,392.1 850.0,394.7 856.0,397.8 862.0,400.5 868.0,402.6 874.0,404.4 880.0,406.8 886.0,410.1 892.0,413.5 898.0,416.3 904.0,418.8 910.0,421.8 916.0,425.3 922.0,428.8 928.0,431.4 934.0,433.4 940.0,435.6 946.0,438.4 952.0,441.3 958.0,443.7 964.0,445.7 970.0,448.1 976.0,451.3 982.0,455.0 988.0,458.2 994.0,460.8 1000.0,463.4 1006.0,466.6" fill="none" stroke="#5a4c44" stroke-width="1.8" opacity="0.33"/>
<polyline points="430.0,206.5 436.0,209.5 442.0,212.6 448.0,215.9 454.0,219.2 460.0,222.5 466.0,225.9 472.0,229.1 478.0,232.3 484.0,235.3 490.0,238.3 496.0,241.2 502.0,244.2 508.0,247.2 514.0,250.3 520.0,253.4 526.0,256.6 532.0,259.7 538.0,262.8 544.0,265.7 550.0,268.6 556.0,271.5 562.0,274.3 568.0,277.3 574.0,280.4 580.0,283.6 586.0,286.8 592.0,290.1 598.0,293.4 604.0,296.6 610.0,299.7 616.0,302.8 622.0,305.8 628.0,308.9 634.0,312.0 640.0,315.2 646.0,318.5 652.0,321.9 658.0,325.1 664.0,328.3 670.0,331.4 676.0,334.3 682.0,337.2 688.0,340.1 694.0,343.0 700.0,345.9 706.0,349.0 712.0,352.2 718.0,355.3 724.0,358.5 730.0,361.5 736.0,364.5 742.0,367.4 748.0,370.3 754.0,373.3 760.0,376.3 766.0,379.5 772.0,382.8 778.0,386.1 784.0,389.5 790.0,392.8 796.0,396.0 802.0,399.1 808.0,402.1 814.0,405.1 820.0,408.1 826.0,411.3 832.0,414.5 838.0,417.7 844.0,420.9 850.0,424.1 856.0,427.2 862.0,430.2 868.0,433.0 874.0,435.9 880.0,438.7 886.0,441.6 892.0,444.6 898.0,447.8 904.0,451.0 910.0,454.2 916.0,457.3 922.0,460.4 928.0,463.4 934.0,466.4 940.0,469.4 946.0,472.5 952.0,475.6 958.0,478.9 964.0,482.2 970.0,485.6 976.0,488.9 982.0,492.1 988.0,495.3 994.0,498.3 1000.0,501.3 1006.0,504.2" fill="none" stroke="#5a4c44" stroke-width="1.0" opacity="0.26"/>
<polyline points="430.0,213.3 436.0,216.1 442.0,218.8 448.0,221.3 454.0,223.6 460.0,226.2 466.0,229.0 472.0,232.0 478.0,235.1 484.0,237.9 490.0,240.6 496.0,243.2 502.0,246.0 508.0,248.9 514.0,251.9 520.0,254.5 526.0,256.9 532.0,259.2 538.0,261.6 544.0,264.3 550.0,267.2 556.0,270.0 562.0,272.5 568.0,275.0 574.0,277.7 580.0,280.6 586.0,283.7 592.0,286.8 598.0,289.6 604.0,292.1 610.0,294.7 616.0,297.4 622.0,300.2 628.0,303.0 634.0,305.6 640.0,307.9 646.0,310.2 652.0,312.7 658.0,315.5 664.0,318.5 670.0,321.3 676.0,324.0 682.0,326.6 688.0,329.3 694.0,332.3 700.0,335.4 706.0,338.4 712.0,341.1 718.0,343.5 724.0,345.9 730.0,348.5 736.0,351.3 742.0,354.1 748.0,356.6 754.0,359.0 760.0,361.4 766.0,364.0 772.0,366.9 778.0,370.0 784.0,372.9 790.0,375.6 796.0,378.3 802.0,381.0 808.0,383.9 814.0,386.9 820.0,389.8 826.0,392.3 832.0,394.6 838.0,397.0 844.0,399.6 850.0,402.4 856.0,405.1 862.0,407.8 868.0,410.2 874.0,412.7 880.0,415.5 886.0,418.6 892.0,421.7 898.0,424.6 904.0,427.3 910.0,429.8 916.0,432.5 922.0,435.3 928.0,438.2 934.0,440.9 940.0,443.4 946.0,445.6 952.0,448.0 958.0,450.7 964.0,453.5 970.0,456.4 976.0,459.1 982.0,461.7 988.0,464.3 994.0,467.2 1000.0,470.3 1006.0,473.4" fill="none" stroke="#5a4c44" stroke-width="1.0" opacity="0.35"/>
<polyline points="430.0,219.3 436.0,221.9 442.0,224.8 448.0,228.3 454.0,232.2 460.0,236.1 466.0,239.3 472.0,241.9 478.0,244.2 484.0,246.7 490.0,249.7 496.0,252.9 502.0,255.9 508.0,258.4 514.0,260.5 520.0,262.6 526.0,265.2 532.0,268.5 538.0,272.1 544.0,275.7 550.0,278.9 556.0,281.6 562.0,284.4 568.0,287.6 574.0,291.2 580.0,295.0 586.0,298.3 592.0,300.9 598.0,303.1 604.0,305.2 610.0,307.8 616.0,310.8 622.0,314.0 628.0,316.8 634.0,319.3 640.0,321.5 646.0,324.1 652.0,327.3 658.0,331.1 664.0,334.9 670.0,338.4 676.0,341.4 682.0,344.0 688.0,346.8 694.0,350.0 700.0,353.5 706.0,356.8 712.0,359.6 718.0,361.7 724.0,363.6 730.0,365.9 736.0,368.8 742.0,372.1 748.0,375.4 754.0,378.3 760.0,380.8 766.0,383.4 772.0,386.5 778.0,390.2 784.0,394.1 790.0,397.8 796.0,400.9 802.0,403.4 808.0,405.9 814.0,408.6 820.0,411.8 826.0,415.0 832.0,417.9 838.0,420.2 844.0,422.2 850.0,424.3 856.0,427.1 862.0,430.5 868.0,434.1 874.0,437.4 880.0,440.3 886.0,443.0 892.0,445.9 898.0,449.4 904.0,453.2 910.0,456.9 916.0,460.1 922.0,462.6 928.0,464.7 934.0,467.0 940.0,469.8 946.0,473.0 952.0,476.0 958.0,478.7 964.0,480.9 970.0,483.1 976.0,485.8 982.0,489.2 988.0,493.0 994.0,496.7 1000.0,500.0 1006.0,502.8" fill="none" stroke="#5a4c44" stroke-width="1.0" opacity="0.15"/>
<polyline points="430.0,222.6 436.0,225.1 442.0,227.6 448.0,230.3 454.0,233.1 460.0,236.2 466.0,239.2 472.0,242.0 478.0,244.7 484.0,247.4 490.0,250.3 496.0,253.4 502.0,256.8 508.0,260.0 514.0,263.1 520.0,265.9 526.0,268.6 532.0,271.4 538.0,274.3 544.0,277.4 550.0,280.4 556.0,283.2 562.0,285.7 568.0,288.2 574.0,290.8 580.0,293.6 586.0,296.7 592.0,299.8 598.0,302.8 604.0,305.7 610.0,308.4 616.0,311.3 622.0,314.4 628.0,317.7 634.0,321.0 640.0,324.0 646.0,326.8 652.0,329.5 658.0,332.1 664.0,334.9 670.0,337.8 676.0,340.8 682.0,343.7 688.0,346.3 694.0,348.8 700.0,351.4 706.0,354.3 712.0,357.4 718.0,360.6 724.0,363.8 730.0,366.8 736.0,369.6 742.0,372.4 748.0,375.4 754.0,378.5 760.0,381.8 766.0,384.8 772.0,387.6 778.0,390.2 784.0,392.7 790.0,395.3 796.0,398.2 802.0,401.2 808.0,404.2 814.0,407.0 820.0,409.6 826.0,412.3 832.0,415.1 838.0,418.2 844.0,421.5 850.0,424.8 856.0,427.9 862.0,430.7 868.0,433.5 874.0,436.3 880.0,439.3 886.0,442.4 892.0,445.4 898.0,448.2 904.0,450.8 910.0,453.3 916.0,455.8 922.0,458.6 928.0,461.7 934.0,464.7 940.0,467.7 946.0,470.5 952.0,473.3 958.0,476.1 964.0,479.2 970.0,482.5 976.0,485.8 982.0,488.9 988.0,491.8 994.0,494.4 1000.0,497.1 1006.0,499.9" fill="none" stroke="#5a4c44" stroke-width="2.2" opacity="0.10"/>
<polyline points="430.0,227.1 436.0,229.9 442.0,232.8 448.0,235.5 454.0,238.1 460.0,240.6 466.0,242.9 472.0,245.3 478.0,247.9 484.0,250.6 490.0,253.5 496.0,256.4 502.0,259.3 508.0,261.9 514.0,264.5 520.0,267.2 526.0,270.0 532.0,272.9 538.0,276.0 544.0,279.1 550.0,282.0 556.0,284.6 562.0,287.1 568.0,289.6 574.0,292.1 580.0,294.8 586.0,297.6 592.0,300.4 598.0,303.1 604.0,305.6 610.0,308.0 616.0,310.4 622.0,313.0 628.0,315.7 634.0,318.6 640.0,321.7 646.0,324.6 652.0,327.5 658.0,330.1 664.0,332.8 670.0,335.5 676.0,338.3 682.0,341.3 688.0,344.3 694.0,347.2 700.0,349.9 706.0,352.4 712.0,354.8 718.0,357.2 724.0,359.7 730.0,362.4 736.0,365.2 742.0,368.0 748.0,370.7 754.0,373.3 760.0,375.7 766.0,378.3 772.0,381.0 778.0,383.9 784.0,386.9 790.0,390.0 796.0,393.0 802.0,395.8 808.0,398.4 814.0,401.0 820.0,403.6 826.0,406.5 832.0,409.4 838.0,412.2 844.0,415.0 850.0,417.6 856.0,419.9 862.0,422.3 868.0,424.7 874.0,427.3 880.0,430.1 886.0,433.0 892.0,435.8 898.0,438.6 904.0,441.2 910.0,443.7 916.0,446.4 922.0,449.3 928.0,452.3 934.0,455.4 940.0,458.4 946.0,461.3 952.0,463.9 958.0,466.4 964.0,468.9 970.0,471.6 976.0,474.3 982.0,477.1 988.0,479.9 994.0,482.6 1000.0,485.0 1006.0,487.4" fill="none" stroke="#5a4c44" stroke-width="1.0" opacity="0.26"/>
<polyline points="430.0,233.6 436.0,237.0 442.0,240.0 448.0,242.8 454.0,245.4 460.0,248.0 466.0,250.7 472.0,253.5 478.0,256.7 484.0,260.1 490.0,263.7 496.0,267.4 502.0,271.1 508.0,274.6 514.0,277.9 520.0,281.0 526.0,284.0 532.0,287.0 538.0,290.2 544.0,293.6 550.0,297.2 556.0,301.2 562.0,305.4 568.0,309.6 574.0,313.8 580.0,317.8 586.0,321.5 592.0,324.9 598.0,328.1 604.0,331.1 610.0,334.1 616.0,337.2 622.0,340.5 628.0,344.0 634.0,347.6 640.0,351.3 646.0,355.0 652.0,358.4 658.0,361.6 664.0,364.5 670.0,367.2 676.0,369.7 682.0,372.3 688.0,375.1 694.0,378.1 700.0,381.5 706.0,385.1 712.0,389.0 718.0,392.9 724.0,396.8 730.0,400.5 736.0,403.9 742.0,407.2 748.0,410.4 754.0,413.6 760.0,416.9 766.0,420.4 772.0,424.2 778.0,428.2 784.0,432.4 790.0,436.5 796.0,440.6 802.0,444.3 808.0,447.8 814.0,450.9 820.0,453.8 826.0,456.6 832.0,459.4 838.0,462.3 844.0,465.5 850.0,468.8 856.0,472.4 862.0,476.0 868.0,479.5 874.0,482.9 880.0,486.0 886.0,488.9 892.0,491.6 898.0,494.3 904.0,497.1 910.0,500.1 916.0,503.5 922.0,507.1 928.0,511.0 934.0,515.1 940.0,519.3 946.0,523.3 952.0,527.1 958.0,530.6 964.0,534.0 970.0,537.2 976.0,540.4 982.0,543.7 988.0,547.2 994.0,550.9 1000.0,554.8 1006.0,558.8" fill="none" stroke="#5a4c44" stroke-width="2.2" opacity="0.33"/>
<polyline points="430.0,238.1 436.0,241.3 442.0,244.7 448.0,248.1 454.0,251.6 460.0,255.1 466.0,258.5 472.0,261.9 478.0,265.2 484.0,268.3 490.0,271.3 496.0,274.3 502.0,277.2 508.0,280.1 514.0,283.0 520.0,286.1 526.0,289.3 532.0,292.6 538.0,296.0 544.0,299.4 550.0,302.7 556.0,306.1 562.0,309.3 568.0,312.5 574.0,315.6 580.0,318.7 586.0,321.8 592.0,325.0 598.0,328.2 604.0,331.6 610.0,335.2 616.0,338.8 622.0,342.4 628.0,346.1 634.0,349.6 640.0,353.1 646.0,356.4 652.0,359.6 658.0,362.8 664.0,365.9 670.0,368.9 676.0,372.1 682.0,375.3 688.0,378.6 694.0,382.0 700.0,385.4 706.0,388.8 712.0,392.1 718.0,395.3 724.0,398.5 730.0,401.5 736.0,404.4 742.0,407.3 748.0,410.2 754.0,413.2 760.0,416.2 766.0,419.5 772.0,422.8 778.0,426.2 784.0,429.7 790.0,433.2 796.0,436.7 802.0,440.0 808.0,443.3 814.0,446.5 820.0,449.7 826.0,452.9 832.0,456.1 838.0,459.4 844.0,462.8 850.0,466.3 856.0,469.8 862.0,473.5 868.0,477.1 874.0,480.6 880.0,484.0 886.0,487.3 892.0,490.5 898.0,493.5 904.0,496.5 910.0,499.5 916.0,502.5 922.0,505.6 928.0,508.8 934.0,512.1 940.0,515.4 946.0,518.8 952.0,522.1 958.0,525.4 964.0,528.5 970.0,531.6 976.0,534.6 982.0,537.5 988.0,540.5 994.0,543.5 1000.0,546.7 1006.0,549.9" fill="none" stroke="#5a4c44" stroke-width="1.8" opacity="0.14"/>
<polyline points="430.0,245.9 436.0,248.8 442.0,252.0 448.0,255.4 454.0,258.8 460.0,262.2 466.0,265.1 472.0,267.8 478.0,270.2 484.0,272.7 490.0,275.5 496.0,278.8 502.0,282.5 508.0,286.4 514.0,290.3 520.0,294.0 526.0,297.3 532.0,300.4 538.0,303.5 544.0,306.7 550.0,310.2 556.0,314.1 562.0,318.0 568.0,321.9 574.0,325.4 580.0,328.4 586.0,331.0 592.0,333.5 598.0,336.0 604.0,338.8 610.0,342.0 616.0,345.4 622.0,348.9 628.0,352.2 634.0,355.2 640.0,357.9 646.0,360.5 652.0,363.3 658.0,366.5 664.0,370.2 670.0,374.2 676.0,378.3 682.0,382.3 688.0,385.9 694.0,389.2 700.0,392.2 706.0,395.1 712.0,398.3 718.0,401.7 724.0,405.4 730.0,409.1 736.0,412.7 742.0,415.8 748.0,418.5 754.0,420.9 760.0,423.2 766.0,425.8 772.0,428.8 778.0,432.1 784.0,435.7 790.0,439.3 796.0,442.7 802.0,445.8 808.0,448.8 814.0,451.7 820.0,454.8 826.0,458.3 832.0,462.2 838.0,466.3 844.0,470.4 850.0,474.2 856.0,477.6 862.0,480.6 868.0,483.4 874.0,486.2 880.0,489.2 886.0,492.5 892.0,496.0 898.0,499.5 904.0,502.7 910.0,505.6 916.0,508.2 922.0,510.6 928.0,513.0 934.0,515.9 940.0,519.2 946.0,522.8 952.0,526.7 958.0,530.5 964.0,534.0 970.0,537.3 976.0,540.3 982.0,543.4 988.0,546.7 994.0,550.3 1000.0,554.3 1006.0,558.3" fill="none" stroke="#5a4c44" stroke-width="1.4" opacity="0.14"/>
<polyline points="430.0,248.8 436.0,252.0 442.0,255.4 448.0,258.9 454.0,262.6 460.0,266.3 466.0,270.1 472.0,273.8 478.0,277.4 484.0,280.8 490.0,283.9 496.0,286.9 502.0,289.8 508.0,292.6 514.0,295.6 520.0,298.7 526.0,302.0 532.0,305.4 538.0,308.9 544.0,312.4 550.0,315.7 556.0,319.0 562.0,322.1 568.0,325.0 574.0,328.0 580.0,331.0 586.0,334.2 592.0,337.6 598.0,341.2 604.0,344.9 610.0,348.8 616.0,352.6 622.0,356.4 628.0,360.0 634.0,363.4 640.0,366.7 646.0,369.9 652.0,373.1 658.0,376.3 664.0,379.7 670.0,383.2 676.0,386.9 682.0,390.5 688.0,394.1 694.0,397.6 700.0,400.9 706.0,403.9 712.0,406.9 718.0,409.7 724.0,412.5 730.0,415.4 736.0,418.4 742.0,421.7 748.0,425.1 754.0,428.6 760.0,432.2 766.0,435.7 772.0,439.1 778.0,442.4 784.0,445.5 790.0,448.6 796.0,451.8 802.0,455.0 808.0,458.5 814.0,462.1 820.0,465.9 826.0,469.8 832.0,473.6 838.0,477.4 844.0,481.1 850.0,484.5 856.0,487.7 862.0,490.8 868.0,493.9 874.0,497.0 880.0,500.2 886.0,503.5 892.0,507.0 898.0,510.5 904.0,514.0 910.0,517.4 916.0,520.7 922.0,523.7 928.0,526.6 934.0,529.5 940.0,532.3 946.0,535.2 952.0,538.3 958.0,541.6 964.0,545.1 970.0,548.7 976.0,552.4 982.0,556.1 988.0,559.7 994.0,563.1 1000.0,566.4 1006.0,569.7" fill="none" stroke="#5a4c44" stroke-width="1.4" opacity="0.31"/>
<polyline points="430.0,254.2 436.0,257.2 442.0,259.9 448.0,262.3 454.0,264.5 460.0,266.8 466.0,269.2 472.0,272.0 478.0,275.3 484.0,278.9 490.0,282.6 496.0,286.2 502.0,289.6 508.0,292.6 514.0,295.1 520.0,297.5 526.0,299.8 532.0,302.2 538.0,305.0 544.0,308.0 550.0,311.1 556.0,314.2 562.0,317.0 568.0,319.3 574.0,321.4 580.0,323.1 586.0,324.9 592.0,326.9 598.0,329.2 604.0,332.0 610.0,335.1 616.0,338.4 622.0,341.7 628.0,344.7 634.0,347.4 640.0,349.9 646.0,352.3 652.0,354.9 658.0,357.8 664.0,361.1 670.0,364.6 676.0,368.3 682.0,371.9 688.0,375.1 694.0,377.9 700.0,380.3 706.0,382.4 712.0,384.5 718.0,386.6 724.0,389.1 730.0,391.9 736.0,394.8 742.0,397.8 748.0,400.5 754.0,403.0 760.0,405.1 766.0,407.0 772.0,408.9 778.0,411.0 784.0,413.5 790.0,416.5 796.0,419.8 802.0,423.4 808.0,426.9 814.0,430.2 820.0,433.1 826.0,435.8 832.0,438.3 838.0,440.8 844.0,443.6 850.0,446.7 856.0,450.1 862.0,453.6 868.0,456.9 874.0,460.0 880.0,462.6 886.0,464.8 892.0,466.7 898.0,468.5 904.0,470.4 910.0,472.7 916.0,475.4 922.0,478.3 928.0,481.3 934.0,484.2 940.0,486.8 946.0,489.2 952.0,491.3 958.0,493.5 964.0,495.8 970.0,498.5 976.0,501.7 982.0,505.2 988.0,508.9 994.0,512.6 1000.0,516.0 1006.0,519.0" fill="none" stroke="#5a4c44" stroke-width="1.8" opacity="0.19"/>
<polyline points="430.0,257.4 436.0,260.3 442.0,263.5 448.0,266.9 454.0,270.3 460.0,273.4 466.0,276.2 472.0,278.7 478.0,281.1 484.0,283.7 490.0,286.6 496.0,290.0 502.0,293.9 508.0,297.9 514.0,301.9 520.0,305.6 526.0,308.9 532.0,312.0 538.0,314.9 544.0,318.0 550.0,321.3 556.0,325.0 562.0,328.8 568.0,332.6 574.0,336.1 580.0,339.1 586.0,341.7 592.0,344.0 598.0,346.3 604.0,348.8 610.0,351.7 616.0,354.9 622.0,358.4 628.0,361.8 634.0,365.1 640.0,368.1 646.0,370.8 652.0,373.5 658.0,376.3 664.0,379.6 670.0,383.3 676.0,387.3 682.0,391.5 688.0,395.5 694.0,399.1 700.0,402.4 706.0,405.3 712.0,408.1 718.0,411.0 724.0,414.1 730.0,417.5 736.0,421.1 742.0,424.7 748.0,427.9 754.0,430.7 760.0,433.1 766.0,435.3 772.0,437.6 778.0,440.2 784.0,443.2 790.0,446.7 796.0,450.4 802.0,454.1 808.0,457.6 814.0,460.7 820.0,463.7 826.0,466.6 832.0,469.6 838.0,473.1 844.0,476.9 850.0,480.9 856.0,485.0 862.0,488.9 868.0,492.4 874.0,495.3 880.0,498.0 886.0,500.5 892.0,503.2 898.0,506.1 904.0,509.4 910.0,512.8 916.0,516.2 922.0,519.3 928.0,522.0 934.0,524.5 940.0,526.8 946.0,529.3 952.0,532.1 958.0,535.5 964.0,539.2 970.0,543.1 976.0,547.1 982.0,550.7 988.0,554.1 994.0,557.1 1000.0,560.1 1006.0,563.2" fill="none" stroke="#5a4c44" stroke-width="1.8" opacity="0.16"/>
<polyline points="430.0,263.1 436.0,266.3 442.0,270.1 448.0,274.4 454.0,278.5 460.0,281.6 466.0,284.0 472.0,286.7 478.0,290.2 484.0,293.8 490.0,296.9 496.0,299.4 502.0,302.4 508.0,306.4 514.0,310.8 520.0,314.9 526.0,318.2 532.0,321.3 538.0,325.0 544.0,329.0 550.0,332.6 556.0,335.3 562.0,337.6 568.0,340.4 574.0,344.0 580.0,347.8 586.0,351.0 592.0,353.9 598.0,357.3 604.0,361.6 610.0,366.1 616.0,370.0 622.0,373.0 628.0,375.9 634.0,379.3 640.0,383.1 646.0,386.3 652.0,388.8 658.0,391.2 664.0,394.3 670.0,398.3 676.0,402.4 682.0,405.8 688.0,408.9 694.0,412.5 700.0,416.9 706.0,421.1 712.0,424.5 718.0,427.2 724.0,429.8 730.0,433.2 736.0,436.8 742.0,440.0 748.0,442.5 754.0,445.2 760.0,448.9 766.0,453.2 772.0,457.4 778.0,460.8 784.0,464.0 790.0,467.6 796.0,471.7 802.0,475.6 808.0,478.5 814.0,480.8 820.0,483.5 826.0,487.0 832.0,490.7 838.0,493.9 844.0,496.7 850.0,499.9 856.0,503.9 862.0,508.5 868.0,512.5 874.0,515.8 880.0,518.7 886.0,522.2 892.0,526.0 898.0,529.5 904.0,532.1 910.0,534.4 916.0,537.3 922.0,541.0 928.0,545.0 934.0,548.4 940.0,551.5 946.0,555.0 952.0,559.2 958.0,563.7 964.0,567.4 970.0,570.2 976.0,572.9 982.0,576.2 988.0,579.9 994.0,583.1 1000.0,585.7 1006.0,588.2" fill="none" stroke="#5a4c44" stroke-width="0.8" opacity="0.27"/>
<polyline points="430.0,266.5 436.0,269.3 442.0,272.7 448.0,276.7 454.0,280.7 460.0,284.1 466.0,286.8 472.0,288.9 478.0,291.0 484.0,293.7 490.0,296.8 496.0,300.0 502.0,302.6 508.0,304.7 514.0,306.5 520.0,308.8 526.0,311.9 532.0,315.6 538.0,319.5 544.0,323.0 550.0,325.8 556.0,328.4 562.0,331.4 568.0,334.9 574.0,338.7 580.0,342.3 586.0,345.1 592.0,347.2 598.0,349.0 604.0,351.1 610.0,353.8 616.0,357.0 622.0,360.2 628.0,362.8 634.0,365.0 640.0,367.2 646.0,370.1 652.0,373.7 658.0,377.8 664.0,381.7 670.0,385.0 676.0,387.7 682.0,390.2 688.0,393.0 694.0,396.3 700.0,399.8 706.0,402.9 712.0,405.3 718.0,407.0 724.0,408.8 730.0,411.1 736.0,414.2 742.0,417.6 748.0,420.9 754.0,423.7 760.0,426.2 766.0,428.8 772.0,432.1 778.0,436.0 784.0,440.2 790.0,443.8 796.0,446.7 802.0,448.9 808.0,451.2 814.0,453.9 820.0,457.0 826.0,460.2 832.0,462.9 838.0,465.0 844.0,466.8 850.0,468.9 856.0,471.7 862.0,475.2 868.0,479.0 874.0,482.5 880.0,485.4 886.0,488.0 892.0,490.9 898.0,494.4 904.0,498.3 910.0,502.0 916.0,505.2 922.0,507.5 928.0,509.4 934.0,511.4 940.0,514.1 946.0,517.2 952.0,520.3 958.0,523.0 964.0,525.1 970.0,527.2 976.0,529.8 982.0,533.2 988.0,537.1 994.0,541.1 1000.0,544.5 1006.0,547.3" fill="none" stroke="#5a4c44" stroke-width="1.8" opacity="0.30"/>
<polyline points="430.0,272.0 436.0,275.5 442.0,279.1 448.0,282.5 454.0,285.5 460.0,288.2 466.0,290.7 472.0,293.2 478.0,296.0 484.0,299.2 490.0,302.4 496.0,305.5 502.0,308.2 508.0,310.5 514.0,312.5 520.0,314.3 526.0,316.4 532.0,318.9 538.0,321.8 544.0,325.0 550.0,328.0 556.0,330.9 562.0,333.4 568.0,335.8 574.0,338.3 580.0,341.1 586.0,344.4 592.0,347.9 598.0,351.6 604.0,355.0 610.0,358.0 616.0,360.6 622.0,362.9 628.0,365.2 634.0,367.7 640.0,370.5 646.0,373.6 652.0,376.5 658.0,379.3 664.0,381.6 670.0,383.6 676.0,385.5 682.0,387.6 688.0,390.1 694.0,393.1 700.0,396.5 706.0,399.8 712.0,403.0 718.0,405.8 724.0,408.4 730.0,410.9 736.0,413.7 742.0,416.8 748.0,420.3 754.0,423.8 760.0,427.2 766.0,430.1 772.0,432.5 778.0,434.7 784.0,436.7 790.0,439.0 796.0,441.5 802.0,444.4 808.0,447.4 814.0,450.2 820.0,452.7 826.0,454.9 832.0,456.9 838.0,459.2 844.0,461.8 850.0,465.0 856.0,468.4 862.0,472.0 868.0,475.4 874.0,478.4 880.0,481.1 886.0,483.6 892.0,486.2 898.0,489.1 904.0,492.3 910.0,495.6 916.0,498.8 922.0,501.6 928.0,504.0 934.0,506.0 940.0,507.9 946.0,510.0 952.0,512.4 958.0,515.3 964.0,518.3 970.0,521.3 976.0,524.1 982.0,526.6 988.0,528.9 994.0,531.3 1000.0,534.0 1006.0,537.2" fill="none" stroke="#5a4c44" stroke-width="1.8" opacity="0.17"/>
<polyline points="430.0,277.0 436.0,279.3 442.0,281.9 448.0,285.2 454.0,289.2 460.0,293.3 466.0,296.8 472.0,299.6 478.0,302.1 484.0,304.9 490.0,308.2 496.0,311.6 502.0,314.6 508.0,316.8 514.0,318.6 520.0,320.6 526.0,323.4 532.0,326.9 538.0,330.4 544.0,333.5 550.0,336.1 556.0,338.8 562.0,342.1 568.0,346.0 574.0,350.1 580.0,353.6 586.0,356.3 592.0,358.5 598.0,360.9 604.0,363.8 610.0,367.0 616.0,370.0 622.0,372.4 628.0,374.4 634.0,376.5 640.0,379.3 646.0,382.9 652.0,386.8 658.0,390.3 664.0,393.2 670.0,395.9 676.0,399.0 682.0,402.7 688.0,406.5 694.0,410.0 700.0,412.5 706.0,414.5 712.0,416.5 718.0,419.1 724.0,422.3 730.0,425.5 736.0,428.2 742.0,430.5 748.0,432.7 754.0,435.7 760.0,439.4 766.0,443.5 772.0,447.3 778.0,450.4 784.0,453.0 790.0,455.7 796.0,459.0 802.0,462.5 808.0,465.8 814.0,468.3 820.0,470.2 826.0,472.1 832.0,474.5 838.0,477.7 844.0,481.2 850.0,484.3 856.0,487.0 862.0,489.5 868.0,492.5 874.0,496.2 880.0,500.4 886.0,504.2 892.0,507.3 898.0,509.7 904.0,512.0 910.0,514.8 916.0,518.1 922.0,521.3 928.0,523.9 934.0,525.9 940.0,527.8 946.0,530.2 952.0,533.5 958.0,537.3 964.0,540.9 970.0,543.9 976.0,546.6 982.0,549.5 988.0,553.0 994.0,557.0 1000.0,560.7 1006.0,563.7" fill="none" stroke="#5a4c44" stroke-width="1.8" opacity="0.29"/>
<polyline points="430.0,284.0 436.0,286.5 442.0,288.5 448.0,291.4 454.0,295.5 460.0,299.6 466.0,302.6 472.0,305.1 478.0,308.1 484.0,311.7 490.0,314.7 496.0,316.4 502.0,318.0 508.0,320.7 514.0,324.3 520.0,327.4 526.0,329.8 532.0,332.6 538.0,336.6 544.0,340.9 550.0,344.0 556.0,346.1 562.0,348.6 568.0,351.8 574.0,354.8 580.0,356.7 586.0,358.4 592.0,361.0 598.0,364.8 604.0,368.5 610.0,371.3 616.0,374.1 622.0,377.7 628.0,381.8 634.0,385.0 640.0,386.9 646.0,388.8 652.0,391.6 658.0,394.8 664.0,397.2 670.0,399.1 676.0,401.7 682.0,405.7 688.0,409.8 694.0,413.0 700.0,415.5 706.0,418.6 712.0,422.4 718.0,425.5 724.0,427.4 730.0,428.9 736.0,431.5 742.0,434.9 748.0,437.9 754.0,440.2 760.0,442.9 766.0,446.8 772.0,451.1 778.0,454.5 784.0,456.8 790.0,459.2 796.0,462.5 802.0,465.7 808.0,467.7 814.0,469.2 820.0,471.6 826.0,475.2 832.0,478.9 838.0,481.7 844.0,484.3 850.0,487.9 856.0,492.1 862.0,495.6 868.0,497.7 874.0,499.6 880.0,502.4 886.0,505.6 892.0,508.1 898.0,509.8 904.0,512.2 910.0,515.9 916.0,520.0 922.0,523.3 928.0,525.9 934.0,529.0 940.0,532.9 946.0,536.3 952.0,538.3 958.0,539.9 964.0,542.3 970.0,545.6 976.0,548.6 982.0,550.7 988.0,553.2 994.0,556.9 1000.0,561.3 1006.0,564.8" fill="none" stroke="#5a4c44" stroke-width="1.8" opacity="0.13"/>
<polyline points="430.0,288.4 436.0,291.6 442.0,294.7 448.0,297.6 454.0,300.4 460.0,303.3 466.0,306.2 472.0,309.4 478.0,312.8 484.0,316.3 490.0,320.0 496.0,323.6 502.0,327.1 508.0,330.3 514.0,333.3 520.0,336.1 526.0,338.8 532.0,341.6 538.0,344.5 544.0,347.5 550.0,350.7 556.0,354.0 562.0,357.2 568.0,360.2 574.0,363.0 580.0,365.7 586.0,368.2 592.0,370.7 598.0,373.3 604.0,376.2 610.0,379.3 616.0,382.6 622.0,386.1 628.0,389.5 634.0,392.9 640.0,396.1 646.0,399.2 652.0,402.1 658.0,405.0 664.0,408.0 670.0,411.2 676.0,414.6 682.0,418.1 688.0,421.7 694.0,425.2 700.0,428.5 706.0,431.6 712.0,434.4 718.0,437.1 724.0,439.7 730.0,442.3 736.0,445.1 742.0,448.0 748.0,451.2 754.0,454.4 760.0,457.5 766.0,460.6 772.0,463.4 778.0,466.1 784.0,468.8 790.0,471.4 796.0,474.2 802.0,477.2 808.0,480.5 814.0,484.0 820.0,487.6 826.0,491.2 832.0,494.6 838.0,497.9 844.0,501.0 850.0,503.9 856.0,506.8 862.0,509.8 868.0,512.9 874.0,516.2 880.0,519.6 886.0,523.0 892.0,526.4 898.0,529.5 904.0,532.4 910.0,535.1 916.0,537.6 922.0,540.1 928.0,542.6 934.0,545.4 940.0,548.4 946.0,551.6 952.0,554.8 958.0,558.1 964.0,561.2 970.0,564.2 976.0,567.1 982.0,569.8 988.0,572.6 994.0,575.6 1000.0,578.8 1006.0,582.2" fill="none" stroke="#5a4c44" stroke-width="2.2" opacity="0.13"/>
<polyline points="430.0,297.6 436.0,300.4 442.0,303.2 448.0,305.8 454.0,308.5 460.0,311.1 466.0,313.8 472.0,316.6 478.0,319.4 484.0,322.4 490.0,325.3 496.0,328.2 502.0,331.1 508.0,333.9 514.0,336.6 520.0,339.2 526.0,341.7 532.0,344.1 538.0,346.6 544.0,349.0 550.0,351.6 556.0,354.2 562.0,356.9 568.0,359.6 574.0,362.4 580.0,365.2 586.0,368.0 592.0,370.7 598.0,373.3 604.0,375.8 610.0,378.4 616.0,380.9 622.0,383.5 628.0,386.1 634.0,388.9 640.0,391.8 646.0,394.7 652.0,397.7 658.0,400.8 664.0,403.7 670.0,406.6 676.0,409.4 682.0,412.2 688.0,414.8 694.0,417.4 700.0,420.0 706.0,422.7 712.0,425.4 718.0,428.1 724.0,431.0 730.0,433.8 736.0,436.7 742.0,439.5 748.0,442.2 754.0,444.9 760.0,447.4 766.0,449.9 772.0,452.3 778.0,454.7 784.0,457.1 790.0,459.7 796.0,462.3 802.0,465.0 808.0,467.8 814.0,470.7 820.0,473.5 826.0,476.3 832.0,479.1 838.0,481.8 844.0,484.5 850.0,487.1 856.0,489.7 862.0,492.3 868.0,495.0 874.0,497.8 880.0,500.7 886.0,503.7 892.0,506.7 898.0,509.7 904.0,512.7 910.0,515.6 916.0,518.3 922.0,521.0 928.0,523.6 934.0,526.1 940.0,528.7 946.0,531.2 952.0,533.8 958.0,536.5 964.0,539.3 970.0,542.1 976.0,544.9 982.0,547.6 988.0,550.3 994.0,553.0 1000.0,555.5 1006.0,558.0" fill="none" stroke="#5a4c44" stroke-width="1.2" opacity="0.12"/>
<polyline points="430.0,302.8 436.0,306.4 442.0,309.7 448.0,312.8 454.0,315.7 460.0,318.4 466.0,321.0 472.0,323.7 478.0,326.5 484.0,329.5 490.0,332.8 496.0,336.3 502.0,340.0 508.0,343.8 514.0,347.6 520.0,351.3 526.0,354.8 532.0,358.2 538.0,361.4 544.0,364.5 550.0,367.7 556.0,370.9 562.0,374.4 568.0,378.1 574.0,382.0 580.0,386.1 586.0,390.3 592.0,394.5 598.0,398.5 604.0,402.3 610.0,405.9 616.0,409.2 622.0,412.2 628.0,415.2 634.0,418.1 640.0,421.1 646.0,424.2 652.0,427.6 658.0,431.1 664.0,434.7 670.0,438.3 676.0,441.9 682.0,445.3 688.0,448.4 694.0,451.4 700.0,454.2 706.0,456.9 712.0,459.6 718.0,462.4 724.0,465.5 730.0,468.8 736.0,472.4 742.0,476.2 748.0,480.1 754.0,484.2 760.0,488.1 766.0,491.9 772.0,495.6 778.0,499.0 784.0,502.3 790.0,505.5 796.0,508.8 802.0,512.2 808.0,515.7 814.0,519.5 820.0,523.4 826.0,527.5 832.0,531.5 838.0,535.5 844.0,539.2 850.0,542.7 856.0,545.9 862.0,548.9 868.0,551.7 874.0,554.4 880.0,557.2 886.0,560.1 892.0,563.2 898.0,566.5 904.0,570.0 910.0,573.6 916.0,577.2 922.0,580.7 928.0,584.1 934.0,587.3 940.0,590.3 946.0,593.2 952.0,596.0 958.0,599.0 964.0,602.1 970.0,605.5 976.0,609.1 982.0,613.0 988.0,617.1 994.0,621.3 1000.0,625.4 1006.0,629.4" fill="none" stroke="#5a4c44" stroke-width="1.0" opacity="0.12"/>
<polyline points="430.0,305.1 436.0,309.1 442.0,312.6 448.0,315.2 454.0,317.4 460.0,319.7 466.0,322.5 472.0,325.8 478.0,329.2 484.0,332.3 490.0,334.8 496.0,337.1 502.0,339.8 508.0,343.3 514.0,347.4 520.0,351.7 526.0,355.6 532.0,358.8 538.0,361.6 544.0,364.6 550.0,368.1 556.0,371.9 562.0,375.6 568.0,378.8 574.0,381.1 580.0,383.1 586.0,385.2 592.0,388.1 598.0,391.6 604.0,395.2 610.0,398.5 616.0,401.3 622.0,403.9 628.0,406.9 634.0,410.7 640.0,415.0 646.0,419.3 652.0,423.1 658.0,426.1 664.0,428.7 670.0,431.4 676.0,434.5 682.0,438.1 688.0,441.5 694.0,444.4 700.0,446.6 706.0,448.6 712.0,451.0 718.0,454.1 724.0,457.9 730.0,461.8 736.0,465.4 742.0,468.4 748.0,471.3 754.0,474.5 760.0,478.3 766.0,482.5 772.0,486.7 778.0,490.1 784.0,492.8 790.0,495.0 796.0,497.4 802.0,500.4 808.0,503.8 814.0,507.1 820.0,510.0 826.0,512.4 832.0,514.6 838.0,517.3 844.0,520.7 850.0,524.9 856.0,529.1 862.0,532.8 868.0,536.0 874.0,538.8 880.0,542.0 886.0,545.6 892.0,549.6 898.0,553.4 904.0,556.5 910.0,558.8 916.0,560.8 922.0,563.1 928.0,566.0 934.0,569.4 940.0,572.9 946.0,576.0 952.0,578.7 958.0,581.2 964.0,584.2 970.0,588.0 976.0,592.4 982.0,596.7 988.0,600.4 994.0,603.4 1000.0,606.1 1006.0,608.9" fill="none" stroke="#5a4c44" stroke-width="1.8" opacity="0.23"/>
<polyline points="430.0,312.1 436.0,314.8 442.0,318.1 448.0,322.1 454.0,326.4 460.0,330.3 466.0,333.5 472.0,336.0 478.0,338.4 484.0,341.2 490.0,344.6 496.0,347.9 502.0,350.8 508.0,353.1 514.0,355.0 520.0,357.3 526.0,360.4 532.0,364.2 538.0,368.1 544.0,371.6 550.0,374.5 556.0,377.4 562.0,380.6 568.0,384.4 574.0,388.5 580.0,392.3 586.0,395.2 592.0,397.5 598.0,399.6 604.0,402.1 610.0,405.2 616.0,408.6 622.0,411.6 628.0,414.1 634.0,416.3 640.0,418.8 646.0,422.1 652.0,426.1 658.0,430.3 664.0,434.0 670.0,437.1 676.0,439.8 682.0,442.8 688.0,446.3 694.0,450.1 700.0,453.7 706.0,456.4 712.0,458.5 718.0,460.4 724.0,462.8 730.0,465.9 736.0,469.4 742.0,472.7 748.0,475.6 754.0,478.1 760.0,480.8 766.0,484.3 772.0,488.4 778.0,492.7 784.0,496.5 790.0,499.5 796.0,502.0 802.0,504.6 808.0,507.7 814.0,511.2 820.0,514.6 826.0,517.3 832.0,519.3 838.0,521.2 844.0,523.6 850.0,526.9 856.0,530.6 862.0,534.4 868.0,537.6 874.0,540.4 880.0,543.3 886.0,546.7 892.0,550.7 898.0,554.9 904.0,558.5 910.0,561.4 916.0,563.6 922.0,565.9 928.0,568.6 934.0,571.9 940.0,575.2 946.0,578.0 952.0,580.3 958.0,582.4 964.0,585.0 970.0,588.4 976.0,592.5 982.0,596.5 988.0,600.0 994.0,603.0 1000.0,605.8 1006.0,609.0" fill="none" stroke="#5a4c44" stroke-width="0.8" opacity="0.14"/>
<polyline points="430.0,318.7 436.0,322.3 442.0,325.5 448.0,328.4 454.0,331.1 460.0,334.1 466.0,337.5 472.0,341.0 478.0,344.6 484.0,347.8 490.0,350.5 496.0,352.7 502.0,354.8 508.0,357.0 514.0,359.7 520.0,362.9 526.0,366.3 532.0,369.5 538.0,372.5 544.0,375.2 550.0,377.7 556.0,380.5 562.0,383.8 568.0,387.5 574.0,391.5 580.0,395.4 586.0,398.9 592.0,401.9 598.0,404.5 604.0,407.1 610.0,409.9 616.0,413.1 622.0,416.4 628.0,419.7 634.0,422.6 640.0,425.1 646.0,427.2 652.0,429.3 658.0,431.8 664.0,434.7 670.0,438.1 676.0,441.8 682.0,445.2 688.0,448.4 694.0,451.2 700.0,454.0 706.0,457.0 712.0,460.4 718.0,464.2 724.0,468.1 730.0,471.8 736.0,475.0 742.0,477.7 748.0,480.0 754.0,482.4 760.0,485.0 766.0,488.0 772.0,491.3 778.0,494.4 784.0,497.3 790.0,499.7 796.0,501.9 802.0,504.3 808.0,507.0 814.0,510.4 820.0,514.1 826.0,518.0 832.0,521.6 838.0,524.8 844.0,527.7 850.0,530.5 856.0,533.5 862.0,536.9 868.0,540.6 874.0,544.2 880.0,547.6 886.0,550.4 892.0,552.7 898.0,554.8 904.0,557.1 910.0,559.7 916.0,562.8 922.0,566.1 928.0,569.3 934.0,572.2 940.0,574.8 946.0,577.3 952.0,579.9 958.0,583.1 964.0,586.7 970.0,590.7 976.0,594.6 982.0,598.2 988.0,601.3 994.0,604.0 1000.0,606.7 1006.0,609.5" fill="none" stroke="#5a4c44" stroke-width="1.2" opacity="0.18"/>
<polyline points="430.0,323.7 436.0,326.6 442.0,329.5 448.0,332.3 454.0,335.0 460.0,337.7 466.0,340.3 472.0,342.9 478.0,345.6 484.0,348.3 490.0,351.1 496.0,353.9 502.0,356.7 508.0,359.6 514.0,362.4 520.0,365.1 526.0,367.7 532.0,370.4 538.0,373.1 544.0,375.8 550.0,378.6 556.0,381.5 562.0,384.4 568.0,387.4 574.0,390.4 580.0,393.4 586.0,396.2 592.0,399.0 598.0,401.8 604.0,404.5 610.0,407.3 616.0,410.0 622.0,412.9 628.0,415.8 634.0,418.7 640.0,421.6 646.0,424.4 652.0,427.2 658.0,429.9 664.0,432.5 670.0,435.1 676.0,437.6 682.0,440.3 688.0,443.0 694.0,445.8 700.0,448.6 706.0,451.5 712.0,454.4 718.0,457.2 724.0,460.0 730.0,462.7 736.0,465.4 742.0,468.2 748.0,470.9 754.0,473.8 760.0,476.7 766.0,479.7 772.0,482.7 778.0,485.7 784.0,488.6 790.0,491.5 796.0,494.2 802.0,496.9 808.0,499.6 814.0,502.3 820.0,505.0 826.0,507.8 832.0,510.6 838.0,513.5 844.0,516.4 850.0,519.2 856.0,521.9 862.0,524.6 868.0,527.2 874.0,529.8 880.0,532.4 886.0,535.1 892.0,537.8 898.0,540.6 904.0,543.5 910.0,546.5 916.0,549.4 922.0,552.3 928.0,555.1 934.0,557.9 940.0,560.6 946.0,563.4 952.0,566.2 958.0,569.0 964.0,571.9 970.0,574.9 976.0,577.9 982.0,580.8 988.0,583.7 994.0,586.5 1000.0,589.3 1006.0,591.9" fill="none" stroke="#5a4c44" stroke-width="1.0" opacity="0.29"/>
<polyline points="430.0,327.5 436.0,331.2 442.0,335.1 448.0,339.0 454.0,342.8 460.0,346.2 466.0,349.6 472.0,353.0 478.0,356.6 484.0,360.5 490.0,364.4 496.0,368.3 502.0,371.8 508.0,375.0 514.0,378.0 520.0,381.0 526.0,384.2 532.0,387.7 538.0,391.3 544.0,394.8 550.0,398.2 556.0,401.3 562.0,404.4 568.0,407.6 574.0,411.1 580.0,415.0 586.0,419.0 592.0,423.0 598.0,426.8 604.0,430.3 610.0,433.6 616.0,436.9 622.0,440.5 628.0,444.2 634.0,448.0 640.0,451.7 646.0,455.0 652.0,458.0 658.0,460.9 664.0,463.9 670.0,467.1 676.0,470.7 682.0,474.4 688.0,478.1 694.0,481.5 700.0,484.8 706.0,488.1 712.0,491.4 718.0,495.1 724.0,499.1 730.0,503.1 736.0,507.1 742.0,510.8 748.0,514.1 754.0,517.3 760.0,520.5 766.0,523.9 772.0,527.5 778.0,531.2 784.0,534.7 790.0,538.0 796.0,540.9 802.0,543.8 808.0,546.9 814.0,550.3 820.0,554.0 826.0,557.8 832.0,561.7 838.0,565.3 844.0,568.7 850.0,572.0 856.0,575.5 862.0,579.2 868.0,583.1 874.0,587.1 880.0,591.0 886.0,594.5 892.0,597.6 898.0,600.6 904.0,603.7 910.0,607.0 916.0,610.5 922.0,614.2 928.0,617.7 934.0,620.9 940.0,624.0 946.0,627.0 952.0,630.2 958.0,633.8 964.0,637.7 970.0,641.7 976.0,645.6 982.0,649.3 988.0,652.7 994.0,656.0 1000.0,659.5 1006.0,663.1" fill="none" stroke="#5a4c44" stroke-width="1.4" opacity="0.12"/>
<polyline points="430.0,335.1 436.0,337.2 442.0,339.2 448.0,341.3 454.0,343.7 460.0,346.2 466.0,349.0 472.0,352.0 478.0,355.0 484.0,358.0 490.0,360.9 496.0,363.7 502.0,366.2 508.0,368.7 514.0,371.1 520.0,373.7 526.0,376.5 532.0,379.5 538.0,382.7 544.0,386.1 550.0,389.5 556.0,392.9 562.0,396.2 568.0,399.1 574.0,401.8 580.0,404.3 586.0,406.7 592.0,409.0 598.0,411.5 604.0,414.1 610.0,416.8 616.0,419.7 622.0,422.7 628.0,425.6 634.0,428.4 640.0,430.9 646.0,433.2 652.0,435.4 658.0,437.5 664.0,439.6 670.0,441.8 676.0,444.3 682.0,447.0 688.0,450.0 694.0,453.2 700.0,456.5 706.0,459.6 712.0,462.7 718.0,465.5 724.0,468.2 730.0,470.8 736.0,473.4 742.0,476.0 748.0,478.9 754.0,481.9 760.0,485.2 766.0,488.5 772.0,491.9 778.0,495.1 784.0,498.1 790.0,500.8 796.0,503.3 802.0,505.6 808.0,507.7 814.0,509.9 820.0,512.2 826.0,514.7 832.0,517.4 838.0,520.2 844.0,523.2 850.0,526.0 856.0,528.8 862.0,531.3 868.0,533.7 874.0,535.9 880.0,538.1 886.0,540.4 892.0,542.9 898.0,545.6 904.0,548.6 910.0,551.8 916.0,555.2 922.0,558.6 928.0,561.9 934.0,565.0 940.0,567.9 946.0,570.6 952.0,573.1 958.0,575.7 964.0,578.3 970.0,581.1 976.0,584.1 982.0,587.2 988.0,590.4 994.0,593.5 1000.0,596.5 1006.0,599.3" fill="none" stroke="#5a4c44" stroke-width="1.8" opacity="0.17"/>
<polyline points="430.0,340.6 436.0,343.2 442.0,345.5 448.0,347.8 454.0,350.3 460.0,353.2 466.0,356.2 472.0,359.1 478.0,361.8 484.0,364.2 490.0,366.8 496.0,369.7 502.0,373.0 508.0,376.5 514.0,379.8 520.0,382.8 526.0,385.5 532.0,388.1 538.0,391.0 544.0,394.1 550.0,397.2 556.0,400.1 562.0,402.6 568.0,404.8 574.0,407.1 580.0,409.7 586.0,412.6 592.0,415.8 598.0,418.8 604.0,421.6 610.0,424.3 616.0,427.0 622.0,430.0 628.0,433.3 634.0,436.8 640.0,440.1 646.0,442.9 652.0,445.5 658.0,448.0 664.0,450.6 670.0,453.6 676.0,456.6 682.0,459.4 688.0,461.9 694.0,464.2 700.0,466.5 706.0,469.2 712.0,472.3 718.0,475.6 724.0,478.8 730.0,481.8 736.0,484.5 742.0,487.3 748.0,490.3 754.0,493.5 760.0,496.9 766.0,500.1 772.0,502.8 778.0,505.2 784.0,507.5 790.0,510.0 796.0,512.9 802.0,515.9 808.0,518.8 814.0,521.4 820.0,523.8 826.0,526.3 832.0,529.1 838.0,532.3 844.0,535.7 850.0,539.1 856.0,542.1 862.0,544.8 868.0,547.5 874.0,550.4 880.0,553.5 886.0,556.7 892.0,559.7 898.0,562.3 904.0,564.6 910.0,566.9 916.0,569.4 922.0,572.2 928.0,575.3 934.0,578.3 940.0,581.1 946.0,583.7 952.0,586.3 958.0,589.2 964.0,592.5 970.0,596.0 976.0,599.4 982.0,602.4 988.0,605.0 994.0,607.5 1000.0,610.2 1006.0,613.2" fill="none" stroke="#5a4c44" stroke-width="1.0" opacity="0.30"/>
<polyline points="430.0,341.7 436.0,345.2 442.0,348.6 448.0,352.0 454.0,355.3 460.0,358.6 466.0,362.0 472.0,365.3 478.0,368.8 484.0,372.3 490.0,375.9 496.0,379.5 502.0,383.1 508.0,386.6 514.0,390.0 520.0,393.4 526.0,396.7 532.0,399.9 538.0,403.1 544.0,406.4 550.0,409.8 556.0,413.2 562.0,416.6 568.0,420.1 574.0,423.5 580.0,426.8 586.0,430.1 592.0,433.3 598.0,436.4 604.0,439.6 610.0,442.9 616.0,446.2 622.0,449.7 628.0,453.2 634.0,456.7 640.0,460.3 646.0,463.8 652.0,467.2 658.0,470.6 664.0,474.0 670.0,477.3 676.0,480.7 682.0,484.1 688.0,487.6 694.0,491.1 700.0,494.7 706.0,498.2 712.0,501.7 718.0,505.1 724.0,508.4 730.0,511.7 736.0,514.9 742.0,518.0 748.0,521.3 754.0,524.6 760.0,527.9 766.0,531.3 772.0,534.8 778.0,538.2 784.0,541.6 790.0,544.9 796.0,548.2 802.0,551.4 808.0,554.6 814.0,557.9 820.0,561.3 826.0,564.7 832.0,568.3 838.0,571.9 844.0,575.5 850.0,579.0 856.0,582.5 862.0,586.0 868.0,589.3 874.0,592.6 880.0,595.9 886.0,599.3 892.0,602.7 898.0,606.2 904.0,609.7 910.0,613.2 916.0,616.7 922.0,620.0 928.0,623.3 934.0,626.5 940.0,629.7 946.0,632.8 952.0,636.0 958.0,639.3 964.0,642.7 970.0,646.1 976.0,649.6 982.0,653.0 988.0,656.5 994.0,659.9 1000.0,663.2 1006.0,666.5" fill="none" stroke="#5a4c44" stroke-width="1.4" opacity="0.24"/>
<polyline points="430.0,348.5 436.0,351.8 442.0,355.0 448.0,358.2 454.0,361.5 460.0,364.8 466.0,368.3 472.0,371.8 478.0,375.3 484.0,378.8 490.0,382.2 496.0,385.6 502.0,388.8 508.0,391.9 514.0,395.1 520.0,398.2 526.0,401.4 532.0,404.6 538.0,408.0 544.0,411.3 550.0,414.7 556.0,417.9 562.0,421.1 568.0,424.3 574.0,427.3 580.0,430.4 586.0,433.5 592.0,436.7 598.0,440.0 604.0,443.4 610.0,446.9 616.0,450.4 622.0,453.8 628.0,457.2 634.0,460.5 640.0,463.8 646.0,467.0 652.0,470.3 658.0,473.6 664.0,476.9 670.0,480.4 676.0,483.9 682.0,487.3 688.0,490.8 694.0,494.1 700.0,497.3 706.0,500.4 712.0,503.5 718.0,506.5 724.0,509.7 730.0,512.8 736.0,516.1 742.0,519.4 748.0,522.8 754.0,526.1 760.0,529.4 766.0,532.6 772.0,535.8 778.0,538.9 784.0,542.0 790.0,545.2 796.0,548.5 802.0,552.0 808.0,555.4 814.0,559.0 820.0,562.5 826.0,565.9 832.0,569.3 838.0,572.6 844.0,575.8 850.0,579.0 856.0,582.3 862.0,585.5 868.0,588.9 874.0,592.3 880.0,595.7 886.0,599.1 892.0,602.4 898.0,605.6 904.0,608.7 910.0,611.8 916.0,614.8 922.0,617.9 928.0,621.0 934.0,624.3 940.0,627.6 946.0,631.0 952.0,634.4 958.0,637.8 964.0,641.1 970.0,644.3 976.0,647.5 982.0,650.7 988.0,653.9 994.0,657.2 1000.0,660.6 1006.0,664.1" fill="none" stroke="#5a4c44" stroke-width="1.8" opacity="0.33"/>
<polyline points="430.0,351.3 436.0,355.3 442.0,359.4 448.0,363.3 454.0,366.8 460.0,369.9 466.0,372.6 472.0,375.1 478.0,377.7 484.0,380.6 490.0,383.8 496.0,387.2 502.0,390.5 508.0,393.5 514.0,396.1 520.0,398.3 526.0,400.3 532.0,402.4 538.0,404.8 544.0,407.8 550.0,411.2 556.0,414.8 562.0,418.5 568.0,421.8 574.0,424.9 580.0,427.7 586.0,430.5 592.0,433.4 598.0,436.7 604.0,440.4 610.0,444.4 616.0,448.3 622.0,452.0 628.0,455.1 634.0,457.8 640.0,460.1 646.0,462.3 652.0,464.8 658.0,467.5 664.0,470.6 670.0,473.9 676.0,477.1 682.0,480.0 688.0,482.5 694.0,484.7 700.0,486.9 706.0,489.3 712.0,492.2 718.0,495.6 724.0,499.3 730.0,503.3 736.0,507.1 742.0,510.5 748.0,513.6 754.0,516.4 760.0,519.2 766.0,522.2 772.0,525.5 778.0,529.2 784.0,532.9 790.0,536.5 796.0,539.7 802.0,542.4 808.0,544.7 814.0,546.7 820.0,548.8 826.0,551.2 832.0,554.1 838.0,557.3 844.0,560.6 850.0,563.9 856.0,566.8 862.0,569.4 868.0,571.9 874.0,574.4 880.0,577.2 886.0,580.5 892.0,584.3 898.0,588.3 904.0,592.3 910.0,596.1 916.0,599.4 922.0,602.3 928.0,604.9 934.0,607.5 940.0,610.4 946.0,613.6 952.0,617.0 958.0,620.5 964.0,623.7 970.0,626.5 976.0,628.9 982.0,630.9 988.0,632.9 994.0,635.1 1000.0,637.8 1006.0,640.9" fill="none" stroke="#5a4c44" stroke-width="1.0" opacity="0.18"/>
<polyline points="430.0,359.0 436.0,360.9 442.0,363.6 448.0,367.0 454.0,370.3 460.0,373.1 466.0,375.3 472.0,377.6 478.0,380.5 484.0,384.3 490.0,388.7 496.0,392.9 502.0,396.4 508.0,399.0 514.0,401.3 520.0,403.9 526.0,407.1 532.0,410.7 538.0,413.9 544.0,416.2 550.0,417.9 556.0,419.3 562.0,421.4 568.0,424.4 574.0,428.1 580.0,431.8 586.0,435.0 592.0,437.5 598.0,440.1 604.0,443.3 610.0,447.2 616.0,451.6 622.0,455.6 628.0,458.7 634.0,460.9 640.0,462.8 646.0,465.1 652.0,468.0 658.0,471.3 664.0,474.3 670.0,476.6 676.0,478.3 682.0,480.1 688.0,482.6 694.0,486.1 700.0,490.2 706.0,494.2 712.0,497.5 718.0,500.3 724.0,502.9 730.0,506.1 736.0,509.9 742.0,513.9 748.0,517.5 754.0,520.1 760.0,521.9 766.0,523.5 772.0,525.6 778.0,528.4 784.0,531.8 790.0,534.9 796.0,537.4 802.0,539.4 808.0,541.6 814.0,544.6 820.0,548.5 826.0,552.9 832.0,557.1 838.0,560.4 844.0,562.9 850.0,565.4 856.0,568.3 862.0,571.8 868.0,575.4 874.0,578.5 880.0,580.7 886.0,582.2 892.0,583.8 898.0,586.0 904.0,589.1 910.0,592.8 916.0,596.2 922.0,599.0 928.0,601.4 934.0,604.0 940.0,607.3 946.0,611.5 952.0,615.9 958.0,619.8 964.0,622.8 970.0,625.0 976.0,627.1 982.0,629.6 988.0,632.8 994.0,636.1 1000.0,639.0 1006.0,641.0" fill="none" stroke="#5a4c44" stroke-width="1.4" opacity="0.27"/>
<polyline points="430.0,361.5 436.0,363.5 442.0,366.4 448.0,370.3 454.0,374.1 460.0,377.2 466.0,380.1 472.0,383.6 478.0,388.2 484.0,392.8 490.0,396.4 496.0,399.1 502.0,401.7 508.0,405.1 514.0,408.8 520.0,411.8 526.0,414.0 532.0,416.2 538.0,419.4 544.0,423.6 550.0,427.8 556.0,431.2 562.0,434.3 568.0,437.9 574.0,442.3 580.0,446.6 586.0,449.8 592.0,452.0 598.0,454.4 604.0,457.6 610.0,461.2 616.0,464.4 622.0,466.8 628.0,469.3 634.0,473.0 640.0,477.6 646.0,482.0 652.0,485.4 658.0,488.4 664.0,491.8 670.0,495.9 676.0,499.8 682.0,502.6 688.0,504.5 694.0,506.8 700.0,510.1 706.0,514.0 712.0,517.4 718.0,520.1 724.0,523.1 730.0,527.1 736.0,531.8 742.0,536.2 748.0,539.4 754.0,542.0 760.0,545.1 766.0,548.9 772.0,552.4 778.0,555.0 784.0,557.0 790.0,559.4 796.0,563.1 802.0,567.3 808.0,571.0 814.0,574.1 820.0,577.3 826.0,581.4 832.0,586.0 838.0,590.0 844.0,592.8 850.0,595.1 856.0,597.9 862.0,601.4 868.0,604.9 874.0,607.5 880.0,609.7 886.0,612.6 892.0,616.6 898.0,621.2 904.0,625.2 910.0,628.3 916.0,631.4 922.0,635.3 928.0,639.6 934.0,643.2 940.0,645.6 946.0,647.6 952.0,650.3 958.0,653.9 964.0,657.5 970.0,660.5 976.0,663.1 982.0,666.3 988.0,670.7 994.0,675.4 1000.0,679.4 1006.0,682.3" fill="none" stroke="#5a4c44" stroke-width="1.4" opacity="0.16"/>
<polyline points="430.0,371.8 436.0,374.1 442.0,376.8 448.0,379.9 454.0,383.2 460.0,386.4 466.0,389.1 472.0,391.2 478.0,392.9 484.0,394.6 490.0,396.6 496.0,399.2 502.0,402.5 508.0,406.1 514.0,409.6 520.0,412.7 526.0,415.5 532.0,418.0 538.0,420.6 544.0,423.7 550.0,427.2 556.0,431.2 562.0,435.1 568.0,438.7 574.0,441.6 580.0,443.8 586.0,445.8 592.0,447.8 598.0,450.3 604.0,453.1 610.0,456.3 616.0,459.3 622.0,462.0 628.0,464.1 634.0,466.0 640.0,467.9 646.0,470.2 652.0,473.2 658.0,476.8 664.0,480.7 670.0,484.4 676.0,487.8 682.0,490.7 688.0,493.3 694.0,495.9 700.0,498.9 706.0,502.3 712.0,506.0 718.0,509.7 724.0,512.9 730.0,515.4 736.0,517.4 742.0,519.1 748.0,520.9 754.0,523.2 760.0,526.0 766.0,529.2 772.0,532.3 778.0,535.2 784.0,537.6 790.0,539.8 796.0,542.0 802.0,544.6 808.0,547.9 814.0,551.8 820.0,555.9 826.0,559.7 832.0,563.1 838.0,565.9 844.0,568.4 850.0,570.8 856.0,573.5 862.0,576.6 868.0,580.0 874.0,583.3 880.0,586.2 886.0,588.5 892.0,590.3 898.0,591.9 904.0,593.8 910.0,596.2 916.0,599.2 922.0,602.6 928.0,606.0 934.0,609.2 940.0,611.9 946.0,614.4 952.0,616.9 958.0,619.8 964.0,623.2 970.0,627.1 976.0,631.2 982.0,634.9 988.0,638.1 994.0,640.7 1000.0,642.8 1006.0,644.9" fill="none" stroke="#5a4c44" stroke-width="0.8" opacity="0.15"/>
<polyline points="430.0,374.2 436.0,377.0 442.0,380.2 448.0,383.4 454.0,386.5 460.0,389.2 466.0,391.6 472.0,393.9 478.0,396.2 484.0,398.7 490.0,401.6 496.0,404.7 502.0,407.8 508.0,410.7 514.0,413.3 520.0,415.9 526.0,418.7 532.0,421.7 538.0,425.0 544.0,428.5 550.0,431.9 556.0,435.0 562.0,437.7 568.0,440.3 574.0,442.8 580.0,445.6 586.0,448.6 592.0,451.7 598.0,454.6 604.0,457.2 610.0,459.5 616.0,461.8 622.0,464.2 628.0,466.9 634.0,470.0 640.0,473.3 646.0,476.5 652.0,479.5 658.0,482.3 664.0,485.0 670.0,487.8 676.0,490.9 682.0,494.3 688.0,497.7 694.0,500.9 700.0,503.8 706.0,506.3 712.0,508.7 718.0,511.1 724.0,513.8 730.0,516.7 736.0,519.7 742.0,522.6 748.0,525.2 754.0,527.6 760.0,530.0 766.0,532.6 772.0,535.6 778.0,538.9 784.0,542.3 790.0,545.6 796.0,548.6 802.0,551.4 808.0,554.1 814.0,556.9 820.0,560.0 826.0,563.2 832.0,566.5 838.0,569.5 844.0,572.1 850.0,574.4 856.0,576.7 862.0,579.1 868.0,581.8 874.0,584.8 880.0,587.8 886.0,590.8 892.0,593.5 898.0,596.0 904.0,598.6 910.0,601.4 916.0,604.6 922.0,608.1 928.0,611.5 934.0,614.8 940.0,617.7 946.0,620.4 952.0,623.0 958.0,625.7 964.0,628.6 970.0,631.8 976.0,634.8 982.0,637.6 988.0,640.0 994.0,642.3 1000.0,644.6 1006.0,647.1" fill="none" stroke="#5a4c44" stroke-width="0.8" opacity="0.29"/>
<polyline points="430.0,379.5 436.0,382.1 442.0,384.7 448.0,387.5 454.0,390.5 460.0,393.6 466.0,396.7 472.0,399.7 478.0,402.4 484.0,404.9 490.0,407.3 496.0,409.7 502.0,412.4 508.0,415.4 514.0,418.7 520.0,422.1 526.0,425.5 532.0,428.7 538.0,431.7 544.0,434.6 550.0,437.4 556.0,440.4 562.0,443.6 568.0,446.9 574.0,450.4 580.0,453.8 586.0,457.0 592.0,459.8 598.0,462.4 604.0,464.8 610.0,467.3 616.0,469.9 622.0,472.8 628.0,475.9 634.0,479.0 640.0,482.0 646.0,484.8 652.0,487.4 658.0,489.9 664.0,492.6 670.0,495.4 676.0,498.6 682.0,502.0 688.0,505.6 694.0,509.1 700.0,512.4 706.0,515.4 712.0,518.2 718.0,521.0 724.0,523.9 730.0,526.9 736.0,530.2 742.0,533.5 748.0,536.7 754.0,539.7 760.0,542.4 766.0,544.9 772.0,547.2 778.0,549.6 784.0,552.3 790.0,555.2 796.0,558.3 802.0,561.6 808.0,564.7 814.0,567.6 820.0,570.4 826.0,573.1 832.0,575.8 838.0,578.8 844.0,582.1 850.0,585.7 856.0,589.3 862.0,592.7 868.0,596.0 874.0,598.9 880.0,601.6 886.0,604.3 892.0,607.0 898.0,609.9 904.0,613.0 910.0,616.1 916.0,619.2 922.0,622.1 928.0,624.7 934.0,627.2 940.0,629.5 946.0,632.0 952.0,634.8 958.0,637.8 964.0,641.1 970.0,644.5 976.0,647.8 982.0,650.9 988.0,653.8 994.0,656.6 1000.0,659.4 1006.0,662.5" fill="none" stroke="#5a4c44" stroke-width="0.8" opacity="0.23"/>
<polyline points="430.0,383.8 436.0,387.3 442.0,391.0 448.0,394.8 454.0,398.6 460.0,402.2 466.0,405.7 472.0,408.9 478.0,412.0 484.0,414.9 490.0,417.9 496.0,421.0 502.0,424.2 508.0,427.6 514.0,431.0 520.0,434.4 526.0,437.7 532.0,440.9 538.0,443.9 544.0,446.8 550.0,449.7 556.0,452.7 562.0,455.9 568.0,459.3 574.0,462.9 580.0,466.7 586.0,470.4 592.0,474.0 598.0,477.5 604.0,480.8 610.0,484.0 616.0,487.2 622.0,490.5 628.0,493.9 634.0,497.5 640.0,501.2 646.0,504.8 652.0,508.4 658.0,511.8 664.0,515.0 670.0,517.9 676.0,520.8 682.0,523.7 688.0,526.6 694.0,529.8 700.0,533.1 706.0,536.5 712.0,539.9 718.0,543.3 724.0,546.6 730.0,549.7 736.0,552.8 742.0,555.8 748.0,558.9 754.0,562.2 760.0,565.7 766.0,569.3 772.0,573.1 778.0,576.9 784.0,580.6 790.0,584.2 796.0,587.5 802.0,590.7 808.0,593.9 814.0,597.0 820.0,600.3 826.0,603.7 832.0,607.2 838.0,610.8 844.0,614.3 850.0,617.6 856.0,620.7 862.0,623.7 868.0,626.5 874.0,629.3 880.0,632.2 886.0,635.3 892.0,638.6 898.0,642.1 904.0,645.7 910.0,649.2 916.0,652.6 922.0,656.0 928.0,659.1 934.0,662.3 940.0,665.5 946.0,668.8 952.0,672.3 958.0,675.9 964.0,679.7 970.0,683.5 976.0,687.2 982.0,690.8 988.0,694.1 994.0,697.2 1000.0,700.2 1006.0,703.2" fill="none" stroke="#5a4c44" stroke-width="2.2" opacity="0.16"/>
<polyline points="430.0,387.1 436.0,390.3 442.0,393.9 448.0,397.6 454.0,401.5 460.0,405.3 466.0,408.8 472.0,412.2 478.0,415.5 484.0,419.0 490.0,422.6 496.0,426.5 502.0,430.3 508.0,434.0 514.0,437.4 520.0,440.5 526.0,443.4 532.0,446.5 538.0,449.7 544.0,453.2 550.0,456.7 556.0,460.3 562.0,463.6 568.0,466.8 574.0,469.9 580.0,473.1 586.0,476.5 592.0,480.3 598.0,484.3 604.0,488.2 610.0,491.9 616.0,495.4 622.0,498.7 628.0,502.0 634.0,505.4 640.0,509.0 646.0,512.8 652.0,516.4 658.0,519.9 664.0,523.0 670.0,526.0 676.0,528.9 682.0,532.0 688.0,535.3 694.0,538.9 700.0,542.6 706.0,546.2 712.0,549.6 718.0,552.8 724.0,556.1 730.0,559.5 736.0,563.2 742.0,567.1 748.0,571.1 754.0,574.9 760.0,578.5 766.0,581.8 772.0,585.0 778.0,588.1 784.0,591.5 790.0,595.0 796.0,598.6 802.0,602.1 808.0,605.4 814.0,608.4 820.0,611.4 826.0,614.4 832.0,617.7 838.0,621.2 844.0,625.0 850.0,628.8 856.0,632.5 862.0,636.0 868.0,639.3 874.0,642.6 880.0,646.2 886.0,649.9 892.0,653.8 898.0,657.7 904.0,661.3 910.0,664.7 916.0,667.7 922.0,670.7 928.0,673.9 934.0,677.2 940.0,680.7 946.0,684.3 952.0,687.7 958.0,690.9 964.0,694.0 970.0,697.1 976.0,700.3 982.0,703.8 988.0,707.6 994.0,711.6 1000.0,715.4 1006.0,719.1" fill="none" stroke="#5a4c44" stroke-width="2.2" opacity="0.31"/>
<polyline points="430.0,396.5 436.0,400.2 442.0,403.7 448.0,407.1 454.0,410.3 460.0,413.6 466.0,416.9 472.0,420.3 478.0,423.9 484.0,427.4 490.0,430.8 496.0,434.0 502.0,437.0 508.0,440.0 514.0,442.9 520.0,446.1 526.0,449.4 532.0,452.9 538.0,456.4 544.0,459.7 550.0,462.9 556.0,466.1 562.0,469.3 568.0,472.6 574.0,476.2 580.0,479.9 586.0,483.6 592.0,487.2 598.0,490.6 604.0,493.8 610.0,497.0 616.0,500.1 622.0,503.4 628.0,506.9 634.0,510.3 640.0,513.7 646.0,516.9 652.0,519.9 658.0,522.9 664.0,525.9 670.0,529.0 676.0,532.4 682.0,535.9 688.0,539.5 694.0,543.0 700.0,546.3 706.0,549.6 712.0,552.8 718.0,556.2 724.0,559.7 730.0,563.3 736.0,567.0 742.0,570.6 748.0,574.0 754.0,577.2 760.0,580.2 766.0,583.2 772.0,586.4 778.0,589.7 784.0,593.1 790.0,596.5 796.0,599.8 802.0,602.9 808.0,605.9 814.0,608.9 820.0,612.1 826.0,615.5 832.0,619.1 838.0,622.8 844.0,626.4 850.0,629.9 856.0,633.2 862.0,636.4 868.0,639.7 874.0,643.1 880.0,646.6 886.0,650.2 892.0,653.8 898.0,657.1 904.0,660.3 910.0,663.2 916.0,666.2 922.0,669.2 928.0,672.5 934.0,675.9 940.0,679.3 946.0,682.7 952.0,686.0 958.0,689.1 964.0,692.2 970.0,695.4 976.0,698.8 982.0,702.5 988.0,706.2 994.0,709.9 1000.0,713.4 1006.0,716.8" fill="none" stroke="#5a4c44" stroke-width="1.4" opacity="0.23"/>
<polyline points="430.0,396.0 436.0,398.5 442.0,401.3 448.0,404.3 454.0,407.6 460.0,411.0 466.0,414.6 472.0,418.1 478.0,421.4 484.0,424.6 490.0,427.6 496.0,430.4 502.0,433.3 508.0,436.2 514.0,439.2 520.0,442.5 526.0,446.0 532.0,449.8 538.0,453.6 544.0,457.3 550.0,461.0 556.0,464.4 562.0,467.5 568.0,470.4 574.0,473.0 580.0,475.5 586.0,478.0 592.0,480.6 598.0,483.4 604.0,486.4 610.0,489.6 616.0,492.8 622.0,496.1 628.0,499.2 634.0,502.1 640.0,504.9 646.0,507.4 652.0,509.8 658.0,512.2 664.0,514.7 670.0,517.4 676.0,520.4 682.0,523.7 688.0,527.3 694.0,530.9 700.0,534.7 706.0,538.3 712.0,541.8 718.0,545.0 724.0,548.1 730.0,551.0 736.0,553.9 742.0,556.8 748.0,559.9 754.0,563.2 760.0,566.7 766.0,570.3 772.0,573.9 778.0,577.5 784.0,580.9 790.0,584.0 796.0,586.9 802.0,589.4 808.0,591.8 814.0,594.2 820.0,596.6 826.0,599.1 832.0,601.9 838.0,604.8 844.0,608.0 850.0,611.3 856.0,614.6 862.0,617.7 868.0,620.8 874.0,623.6 880.0,626.2 886.0,628.8 892.0,631.4 898.0,634.2 904.0,637.2 910.0,640.5 916.0,644.0 922.0,647.7 928.0,651.6 934.0,655.4 940.0,659.1 946.0,662.5 952.0,665.7 958.0,668.7 964.0,671.6 970.0,674.3 976.0,677.2 982.0,680.1 988.0,683.3 994.0,686.6 1000.0,690.0 1006.0,693.4" fill="none" stroke="#5a4c44" stroke-width="1.2" opacity="0.16"/>
<polyline points="430.0,402.9 436.0,406.3 442.0,409.7 448.0,412.9 454.0,416.0 460.0,419.2 466.0,422.5 472.0,426.0 478.0,429.7 484.0,433.4 490.0,437.2 496.0,440.9 502.0,444.4 508.0,447.8 514.0,451.1 520.0,454.5 526.0,458.0 532.0,461.6 538.0,465.3 544.0,468.9 550.0,472.4 556.0,475.8 562.0,478.9 568.0,482.0 574.0,485.0 580.0,488.2 586.0,491.6 592.0,495.1 598.0,498.7 604.0,502.2 610.0,505.6 616.0,508.9 622.0,512.2 628.0,515.4 634.0,518.8 640.0,522.4 646.0,526.2 652.0,530.0 658.0,533.8 664.0,537.5 670.0,540.9 676.0,544.2 682.0,547.5 688.0,550.8 694.0,554.2 700.0,557.7 706.0,561.3 712.0,564.9 718.0,568.3 724.0,571.5 730.0,574.6 736.0,577.7 742.0,580.8 748.0,584.0 754.0,587.5 760.0,591.1 766.0,594.7 772.0,598.4 778.0,601.9 784.0,605.2 790.0,608.6 796.0,611.9 802.0,615.4 808.0,619.0 814.0,622.8 820.0,626.6 826.0,630.3 832.0,633.9 838.0,637.3 844.0,640.5 850.0,643.6 856.0,646.8 862.0,650.1 868.0,653.6 874.0,657.1 880.0,660.6 886.0,664.0 892.0,667.3 898.0,670.4 904.0,673.5 910.0,676.7 916.0,680.0 922.0,683.6 928.0,687.3 934.0,691.1 940.0,694.8 946.0,698.4 952.0,701.8 958.0,705.1 964.0,708.5 970.0,712.0 976.0,715.6 982.0,719.3 988.0,723.0 994.0,726.6 1000.0,730.0 1006.0,733.3" fill="none" stroke="#5a4c44" stroke-width="1.8" opacity="0.28"/>
<polyline points="430.0,409.3 436.0,412.7 442.0,416.5 448.0,419.5 454.0,421.8 460.0,424.5 466.0,428.3 472.0,432.6 478.0,435.9 484.0,437.8 490.0,439.2 496.0,441.3 502.0,444.3 508.0,447.1 514.0,448.9 520.0,450.2 526.0,452.3 532.0,456.0 538.0,460.2 544.0,463.7 550.0,466.2 556.0,468.6 562.0,472.0 568.0,475.9 574.0,479.0 580.0,480.7 586.0,481.7 592.0,483.4 598.0,486.3 604.0,489.5 610.0,491.9 616.0,493.7 622.0,496.0 628.0,499.7 634.0,504.2 640.0,508.0 646.0,510.5 652.0,512.5 658.0,515.1 664.0,518.5 670.0,521.5 676.0,523.3 682.0,524.2 688.0,525.7 694.0,528.7 700.0,532.4 706.0,535.4 712.0,537.7 718.0,540.1 724.0,543.7 730.0,548.1 736.0,551.9 742.0,554.3 748.0,555.8 754.0,557.8 760.0,560.7 766.0,563.7 772.0,565.7 778.0,566.9 784.0,568.5 790.0,571.6 796.0,575.7 802.0,579.4 808.0,582.1 814.0,584.4 820.0,587.6 826.0,591.6 832.0,595.3 838.0,597.5 844.0,598.6 850.0,600.1 856.0,602.7 862.0,605.9 868.0,608.4 874.0,610.0 880.0,611.9 886.0,615.1 892.0,619.5 898.0,623.6 904.0,626.5 910.0,628.6 916.0,631.2 922.0,634.6 928.0,638.0 934.0,640.2 940.0,641.2 946.0,642.4 952.0,644.9 958.0,648.3 964.0,651.5 970.0,653.7 976.0,655.9 982.0,659.1 988.0,663.4 994.0,667.6 1000.0,670.5 1006.0,672.3" fill="none" stroke="#5a4c44" stroke-width="1.0" opacity="0.16"/>
<polyline points="430.0,416.0 436.0,419.5 442.0,422.7 448.0,425.6 454.0,428.2 460.0,430.9 466.0,434.2 472.0,438.0 478.0,441.8 484.0,445.3 490.0,448.2 496.0,450.5 502.0,452.6 508.0,455.0 514.0,457.9 520.0,461.0 526.0,464.0 532.0,466.6 538.0,468.7 544.0,470.7 550.0,473.2 556.0,476.2 562.0,479.9 568.0,483.6 574.0,487.1 580.0,490.1 586.0,492.8 592.0,495.5 598.0,498.7 604.0,502.2 610.0,505.8 616.0,509.1 622.0,511.7 628.0,513.8 634.0,515.7 640.0,518.0 646.0,520.7 652.0,523.9 658.0,527.0 664.0,529.8 670.0,532.2 676.0,534.5 682.0,537.1 688.0,540.4 694.0,544.2 700.0,548.1 706.0,551.7 712.0,554.7 718.0,557.3 724.0,559.8 730.0,562.7 736.0,565.9 742.0,569.3 748.0,572.3 754.0,574.8 760.0,576.7 766.0,578.6 772.0,580.9 778.0,583.7 784.0,587.0 790.0,590.4 796.0,593.5 802.0,596.2 808.0,598.7 814.0,601.5 820.0,604.9 826.0,608.7 832.0,612.6 838.0,616.1 844.0,618.9 850.0,621.3 856.0,623.5 862.0,626.1 868.0,629.1 874.0,632.3 880.0,635.2 886.0,637.7 892.0,639.7 898.0,641.7 904.0,644.1 910.0,647.1 916.0,650.7 922.0,654.4 928.0,657.7 934.0,660.6 940.0,663.3 946.0,666.1 952.0,669.4 958.0,673.1 964.0,676.8 970.0,680.1 976.0,682.7 982.0,684.8 988.0,686.8 994.0,689.1 1000.0,692.0 1006.0,695.1" fill="none" stroke="#5a4c44" stroke-width="1.8" opacity="0.21"/>
<polyline points="430.0,421.2 436.0,423.9 442.0,426.8 448.0,429.9 454.0,432.9 460.0,435.7 466.0,438.4 472.0,441.2 478.0,444.1 484.0,447.2 490.0,450.5 496.0,453.7 502.0,456.7 508.0,459.4 514.0,462.0 520.0,464.6 526.0,467.4 532.0,470.4 538.0,473.3 544.0,476.1 550.0,478.7 556.0,481.1 562.0,483.6 568.0,486.4 574.0,489.5 580.0,492.6 586.0,495.7 592.0,498.7 598.0,501.4 604.0,504.2 610.0,507.1 616.0,510.3 622.0,513.5 628.0,516.6 634.0,519.4 640.0,522.0 646.0,524.5 652.0,527.1 658.0,529.8 664.0,532.7 670.0,535.7 676.0,538.5 682.0,541.1 688.0,543.6 694.0,546.3 700.0,549.2 706.0,552.3 712.0,555.6 718.0,558.8 724.0,561.7 730.0,564.5 736.0,567.2 742.0,570.1 748.0,573.1 754.0,576.2 760.0,579.2 766.0,581.9 772.0,584.4 778.0,586.9 784.0,589.4 790.0,592.1 796.0,595.1 802.0,598.1 808.0,601.0 814.0,603.8 820.0,606.4 826.0,609.2 832.0,612.2 838.0,615.4 844.0,618.7 850.0,621.8 856.0,624.7 862.0,627.4 868.0,630.0 874.0,632.8 880.0,635.7 886.0,638.7 892.0,641.6 898.0,644.3 904.0,646.8 910.0,649.2 916.0,651.8 922.0,654.6 928.0,657.7 934.0,660.8 940.0,663.8 946.0,666.7 952.0,669.4 958.0,672.2 964.0,675.2 970.0,678.4 976.0,681.7 982.0,684.7 988.0,687.5 994.0,690.1 1000.0,692.6 1006.0,695.2" fill="none" stroke="#5a4c44" stroke-width="1.0" opacity="0.16"/>
<polyline points="430.0,426.1 436.0,429.6 442.0,433.3 448.0,437.0 454.0,440.6 460.0,443.9 466.0,447.1 472.0,450.2 478.0,453.5 484.0,456.9 490.0,460.5 496.0,464.0 502.0,467.3 508.0,470.6 514.0,473.8 520.0,477.2 526.0,480.8 532.0,484.6 538.0,488.3 544.0,491.9 550.0,495.4 556.0,498.7 562.0,502.1 568.0,505.6 574.0,509.2 580.0,512.8 586.0,516.3 592.0,519.5 598.0,522.7 604.0,525.8 610.0,529.1 616.0,532.5 622.0,536.1 628.0,539.7 634.0,543.2 640.0,546.5 646.0,549.8 652.0,553.3 658.0,556.9 664.0,560.7 670.0,564.4 676.0,568.0 682.0,571.4 688.0,574.7 694.0,578.0 700.0,581.4 706.0,584.9 712.0,588.4 718.0,591.9 724.0,595.1 730.0,598.3 736.0,601.4 742.0,604.8 748.0,608.3 754.0,612.0 760.0,615.6 766.0,619.2 772.0,622.6 778.0,625.9 784.0,629.4 790.0,633.0 796.0,636.8 802.0,640.5 808.0,644.0 814.0,647.3 820.0,650.5 826.0,653.7 832.0,657.0 838.0,660.5 844.0,664.0 850.0,667.5 856.0,670.8 862.0,674.0 868.0,677.2 874.0,680.6 880.0,684.2 886.0,688.0 892.0,691.7 898.0,695.3 904.0,698.7 910.0,702.1 916.0,705.5 922.0,709.1 928.0,712.7 934.0,716.3 940.0,719.7 946.0,723.0 952.0,726.1 958.0,729.3 964.0,732.6 970.0,736.1 976.0,739.7 982.0,743.2 988.0,746.5 994.0,749.8 1000.0,753.2 1006.0,756.7" fill="none" stroke="#5a4c44" stroke-width="1.8" opacity="0.32"/>
<polyline points="430.0,428.1 436.0,431.0 442.0,434.2 448.0,437.7 454.0,441.4 460.0,445.1 466.0,448.6 472.0,451.9 478.0,454.8 484.0,457.6 490.0,460.3 496.0,463.2 502.0,466.3 508.0,469.6 514.0,472.9 520.0,476.1 526.0,479.0 532.0,481.6 538.0,483.9 544.0,486.2 550.0,488.7 556.0,491.5 562.0,494.6 568.0,497.9 574.0,501.3 580.0,504.6 586.0,507.7 592.0,510.6 598.0,513.3 604.0,516.2 610.0,519.3 616.0,522.7 622.0,526.3 628.0,530.1 634.0,533.6 640.0,536.9 646.0,539.9 652.0,542.6 658.0,545.1 664.0,547.7 670.0,550.5 676.0,553.6 682.0,556.8 688.0,559.9 694.0,562.9 700.0,565.7 706.0,568.2 712.0,570.6 718.0,573.0 724.0,575.8 730.0,578.8 736.0,582.2 742.0,585.8 748.0,589.4 754.0,592.7 760.0,595.9 766.0,598.8 772.0,601.6 778.0,604.6 784.0,607.8 790.0,611.2 796.0,614.8 802.0,618.3 808.0,621.6 814.0,624.6 820.0,627.2 826.0,629.6 832.0,632.0 838.0,634.6 844.0,637.4 850.0,640.5 856.0,643.7 862.0,646.8 868.0,649.8 874.0,652.6 880.0,655.2 886.0,657.7 892.0,660.5 898.0,663.5 904.0,666.9 910.0,670.6 916.0,674.3 922.0,677.9 928.0,681.2 934.0,684.2 940.0,687.0 946.0,689.8 952.0,692.8 958.0,695.9 964.0,699.2 970.0,702.6 976.0,705.9 982.0,708.9 988.0,711.5 994.0,714.0 1000.0,716.3 1006.0,718.7" fill="none" stroke="#5a4c44" stroke-width="1.8" opacity="0.18"/>
<polyline points="430.0,432.8 436.0,435.6 442.0,438.6 448.0,441.8 454.0,445.3 460.0,448.8 466.0,452.2 472.0,455.4 478.0,458.4 484.0,461.2 490.0,463.7 496.0,466.2 502.0,468.8 508.0,471.5 514.0,474.4 520.0,477.5 526.0,480.5 532.0,483.5 538.0,486.3 544.0,488.8 550.0,491.2 556.0,493.6 562.0,496.0 568.0,498.6 574.0,501.5 580.0,504.7 586.0,508.0 592.0,511.4 598.0,514.7 604.0,517.8 610.0,520.7 616.0,523.5 622.0,526.3 628.0,529.1 634.0,532.1 640.0,535.4 646.0,538.7 652.0,542.1 658.0,545.4 664.0,548.5 670.0,551.3 676.0,553.9 682.0,556.3 688.0,558.6 694.0,561.1 700.0,563.7 706.0,566.6 712.0,569.6 718.0,572.6 724.0,575.6 730.0,578.4 736.0,581.1 742.0,583.6 748.0,586.1 754.0,588.7 760.0,591.5 766.0,594.6 772.0,597.9 778.0,601.3 784.0,604.8 790.0,608.2 796.0,611.4 802.0,614.3 808.0,617.1 814.0,619.8 820.0,622.5 826.0,625.4 832.0,628.5 838.0,631.7 844.0,634.9 850.0,638.1 856.0,641.0 862.0,643.7 868.0,646.1 874.0,648.4 880.0,650.7 886.0,653.1 892.0,655.8 898.0,658.7 904.0,661.8 910.0,664.9 916.0,668.0 922.0,671.0 928.0,673.8 934.0,676.5 940.0,679.2 946.0,681.9 952.0,684.8 958.0,688.0 964.0,691.4 970.0,694.9 976.0,698.4 982.0,701.7 988.0,704.8 994.0,707.7 1000.0,710.3 1006.0,712.9" fill="none" stroke="#5a4c44" stroke-width="1.8" opacity="0.21"/>
<polyline points="430.0,441.6 436.0,445.0 442.0,448.2 448.0,451.2 454.0,453.9 460.0,456.4 466.0,458.9 472.0,461.5 478.0,464.2 484.0,467.1 490.0,470.2 496.0,473.3 502.0,476.4 508.0,479.3 514.0,482.0 520.0,484.6 526.0,487.2 532.0,489.8 538.0,492.5 544.0,495.6 550.0,498.9 556.0,502.3 562.0,505.9 568.0,509.3 574.0,512.7 580.0,515.8 586.0,518.7 592.0,521.5 598.0,524.3 604.0,527.3 610.0,530.4 616.0,533.7 622.0,537.0 628.0,540.4 634.0,543.5 640.0,546.5 646.0,549.1 652.0,551.6 658.0,554.0 664.0,556.4 670.0,559.0 676.0,561.8 682.0,564.9 688.0,568.0 694.0,571.2 700.0,574.3 706.0,577.3 712.0,580.1 718.0,582.8 724.0,585.5 730.0,588.3 736.0,591.4 742.0,594.6 748.0,598.1 754.0,601.7 760.0,605.3 766.0,608.7 772.0,611.9 778.0,614.8 784.0,617.6 790.0,620.3 796.0,623.0 802.0,625.9 808.0,628.9 814.0,632.1 820.0,635.3 826.0,638.4 832.0,641.4 838.0,644.1 844.0,646.6 850.0,649.0 856.0,651.4 862.0,654.0 868.0,656.7 874.0,659.8 880.0,663.0 886.0,666.3 892.0,669.6 898.0,672.9 904.0,675.9 910.0,678.8 916.0,681.6 922.0,684.5 928.0,687.4 934.0,690.6 940.0,694.0 946.0,697.5 952.0,701.1 958.0,704.5 964.0,707.7 970.0,710.6 976.0,713.3 982.0,715.9 988.0,718.5 994.0,721.1 1000.0,723.9 1006.0,726.9" fill="none" stroke="#5a4c44" stroke-width="1.2" opacity="0.15"/>
<polyline points="430.0,449.6 436.0,453.2 442.0,456.3 448.0,459.3 454.0,462.4 460.0,465.7 466.0,469.3 472.0,473.1 478.0,476.8 484.0,480.1 490.0,483.1 496.0,485.8 502.0,488.3 508.0,491.0 514.0,494.2 520.0,497.8 526.0,501.7 532.0,505.8 538.0,509.7 544.0,513.3 550.0,516.6 556.0,519.8 562.0,523.2 568.0,526.8 574.0,530.8 580.0,535.1 586.0,539.4 592.0,543.4 598.0,546.9 604.0,550.0 610.0,552.8 616.0,555.5 622.0,558.5 628.0,561.8 634.0,565.4 640.0,569.1 646.0,572.6 652.0,575.8 658.0,578.6 664.0,581.4 670.0,584.2 676.0,587.3 682.0,591.0 688.0,595.0 694.0,599.3 700.0,603.5 706.0,607.4 712.0,611.0 718.0,614.2 724.0,617.5 730.0,620.9 736.0,624.6 742.0,628.6 748.0,632.7 754.0,636.6 760.0,640.1 766.0,643.2 772.0,645.8 778.0,648.4 784.0,651.1 790.0,654.2 796.0,657.7 802.0,661.4 808.0,665.1 814.0,668.6 820.0,671.8 826.0,674.8 832.0,677.8 838.0,681.0 844.0,684.7 850.0,688.7 856.0,693.1 862.0,697.5 868.0,701.5 874.0,705.2 880.0,708.5 886.0,711.6 892.0,714.7 898.0,718.1 904.0,721.7 910.0,725.6 916.0,729.3 922.0,732.8 928.0,735.9 934.0,738.6 940.0,741.1 946.0,743.8 952.0,746.7 958.0,750.2 964.0,754.0 970.0,758.0 976.0,761.8 982.0,765.4 988.0,768.7 994.0,771.9 1000.0,775.2 1006.0,778.7" fill="none" stroke="#5a4c44" stroke-width="1.0" opacity="0.30"/>
<polyline points="430.0,449.1 436.0,452.3 442.0,455.2 448.0,457.8 454.0,460.2 460.0,463.0 466.0,466.2 472.0,469.8 478.0,473.4 484.0,476.6 490.0,479.2 496.0,481.5 502.0,483.9 508.0,486.6 514.0,489.6 520.0,492.6 526.0,495.1 532.0,497.3 538.0,499.2 544.0,501.4 550.0,504.2 556.0,507.5 562.0,510.9 568.0,514.0 574.0,516.8 580.0,519.4 586.0,522.2 592.0,525.4 598.0,528.9 604.0,532.3 610.0,535.3 616.0,537.7 622.0,539.8 628.0,541.9 634.0,544.5 640.0,547.4 646.0,550.3 652.0,553.0 658.0,555.3 664.0,557.4 670.0,559.8 676.0,562.8 682.0,566.3 688.0,569.9 694.0,573.2 700.0,576.0 706.0,578.6 712.0,581.2 718.0,584.2 724.0,587.5 730.0,590.8 736.0,593.5 742.0,595.7 748.0,597.7 754.0,599.7 760.0,602.3 766.0,605.2 772.0,608.3 778.0,611.2 784.0,613.7 790.0,616.1 796.0,618.7 802.0,621.8 808.0,625.4 814.0,629.1 820.0,632.3 826.0,635.1 832.0,637.5 838.0,639.9 844.0,642.7 850.0,645.7 856.0,648.8 862.0,651.4 868.0,653.6 874.0,655.5 880.0,657.6 886.0,660.2 892.0,663.4 898.0,666.7 904.0,669.8 910.0,672.6 916.0,675.1 922.0,677.8 928.0,681.0 934.0,684.6 940.0,688.1 946.0,691.2 952.0,693.8 958.0,695.9 964.0,698.1 970.0,700.7 976.0,703.6 982.0,706.6 988.0,709.2 994.0,711.4 1000.0,713.5 1006.0,715.8" fill="none" stroke="#5a4c44" stroke-width="1.4" opacity="0.23"/>
<polyline points="430.0,454.4 436.0,458.2 442.0,462.1 448.0,465.8 454.0,469.4 460.0,472.7 466.0,476.0 472.0,479.5 478.0,483.1 484.0,486.8 490.0,490.6 496.0,494.1 502.0,497.4 508.0,500.5 514.0,503.4 520.0,506.4 526.0,509.7 532.0,513.2 538.0,516.8 544.0,520.3 550.0,523.8 556.0,527.0 562.0,530.2 568.0,533.4 574.0,536.9 580.0,540.7 586.0,544.6 592.0,548.5 598.0,552.3 604.0,555.8 610.0,559.1 616.0,562.3 622.0,565.6 628.0,569.1 634.0,572.7 640.0,576.3 646.0,579.8 652.0,583.0 658.0,586.1 664.0,589.0 670.0,592.0 676.0,595.3 682.0,598.8 688.0,602.5 694.0,606.3 700.0,609.8 706.0,613.2 712.0,616.5 718.0,619.9 724.0,623.4 730.0,627.1 736.0,631.0 742.0,634.9 748.0,638.6 754.0,642.0 760.0,645.2 766.0,648.3 772.0,651.5 778.0,654.8 784.0,658.3 790.0,661.9 796.0,665.3 802.0,668.6 808.0,671.7 814.0,674.7 820.0,677.8 826.0,681.1 832.0,684.8 838.0,688.6 844.0,692.5 850.0,696.2 856.0,699.7 862.0,703.0 868.0,706.3 874.0,709.8 880.0,713.5 886.0,717.3 892.0,721.1 898.0,724.7 904.0,728.0 910.0,731.1 916.0,734.0 922.0,737.1 928.0,740.3 934.0,743.8 940.0,747.4 946.0,750.9 952.0,754.3 958.0,757.5 964.0,760.6 970.0,763.8 976.0,767.3 982.0,771.0 988.0,775.0 994.0,778.9 1000.0,782.6 1006.0,786.1" fill="none" stroke="#5a4c44" stroke-width="1.0" opacity="0.34"/>
<polyline points="430.0,460.0 436.0,463.5 442.0,466.9 448.0,470.2 454.0,473.3 460.0,476.4 466.0,479.5 472.0,482.7 478.0,485.9 484.0,489.2 490.0,492.5 496.0,495.8 502.0,499.0 508.0,502.1 514.0,505.2 520.0,508.2 526.0,511.3 532.0,514.4 538.0,517.7 544.0,521.1 550.0,524.5 556.0,528.0 562.0,531.3 568.0,534.7 574.0,537.9 580.0,541.1 586.0,544.3 592.0,547.6 598.0,550.9 604.0,554.4 610.0,557.8 616.0,561.3 622.0,564.6 628.0,567.8 634.0,570.9 640.0,573.9 646.0,576.9 652.0,580.0 658.0,583.2 664.0,586.5 670.0,589.8 676.0,593.1 682.0,596.4 688.0,599.5 694.0,602.6 700.0,605.7 706.0,608.8 712.0,612.0 718.0,615.4 724.0,618.9 730.0,622.4 736.0,625.8 742.0,629.2 748.0,632.6 754.0,635.8 760.0,638.9 766.0,642.1 772.0,645.4 778.0,648.7 784.0,652.1 790.0,655.5 796.0,658.8 802.0,662.1 808.0,665.2 814.0,668.2 820.0,671.2 826.0,674.2 832.0,677.3 838.0,680.6 844.0,683.9 850.0,687.2 856.0,690.6 862.0,693.9 868.0,697.1 874.0,700.2 880.0,703.4 886.0,706.6 892.0,709.9 898.0,713.3 904.0,716.8 910.0,720.3 916.0,723.8 922.0,727.1 928.0,730.4 934.0,733.6 940.0,736.7 946.0,739.8 952.0,743.0 958.0,746.3 964.0,749.6 970.0,752.9 976.0,756.2 982.0,759.4 988.0,762.5 994.0,765.5 1000.0,768.5 1006.0,771.6" fill="none" stroke="#5a4c44" stroke-width="1.0" opacity="0.20"/>
<polyline points="430.0,470.9 436.0,473.6 442.0,476.2 448.0,478.9 454.0,481.9 460.0,485.2 466.0,488.7 472.0,492.4 478.0,496.1 484.0,499.6 490.0,502.8 496.0,505.9 502.0,508.8 508.0,511.8 514.0,514.9 520.0,518.4 526.0,522.2 532.0,526.3 538.0,530.6 544.0,534.9 550.0,539.0 556.0,542.8 562.0,546.2 568.0,549.4 574.0,552.5 580.0,555.6 586.0,558.9 592.0,562.5 598.0,566.2 604.0,570.0 610.0,573.8 616.0,577.3 622.0,580.5 628.0,583.4 634.0,586.1 640.0,588.6 646.0,591.2 652.0,594.1 658.0,597.3 664.0,600.8 670.0,604.6 676.0,608.5 682.0,612.3 688.0,615.9 694.0,619.3 700.0,622.5 706.0,625.7 712.0,628.9 718.0,632.3 724.0,636.0 730.0,640.1 736.0,644.3 742.0,648.6 748.0,652.7 754.0,656.6 760.0,660.1 766.0,663.2 772.0,666.1 778.0,669.0 784.0,671.9 790.0,675.1 796.0,678.5 802.0,682.1 808.0,685.8 814.0,689.3 820.0,692.7 826.0,695.7 832.0,698.5 838.0,701.2 844.0,703.8 850.0,706.7 856.0,709.9 862.0,713.5 868.0,717.3 874.0,721.4 880.0,725.5 886.0,729.5 892.0,733.2 898.0,736.6 904.0,739.9 910.0,743.1 916.0,746.5 922.0,750.0 928.0,753.8 934.0,757.9 940.0,762.0 946.0,766.0 952.0,769.9 958.0,773.3 964.0,776.4 970.0,779.2 976.0,781.9 982.0,784.6 988.0,787.4 994.0,790.6 1000.0,794.0 1006.0,797.6" fill="none" stroke="#5a4c44" stroke-width="1.0" opacity="0.15"/>
<polyline points="430.0,473.5 436.0,476.8 442.0,480.3 448.0,483.7 454.0,487.0 460.0,489.9 466.0,492.5 472.0,495.1 478.0,497.8 484.0,500.8 490.0,504.2 496.0,508.0 502.0,511.8 508.0,515.4 514.0,518.8 520.0,522.0 526.0,525.1 532.0,528.3 538.0,531.8 544.0,535.6 550.0,539.5 556.0,543.3 562.0,546.8 568.0,549.9 574.0,552.7 580.0,555.3 586.0,558.0 592.0,561.0 598.0,564.3 604.0,567.8 610.0,571.2 616.0,574.3 622.0,577.2 628.0,579.9 634.0,582.6 640.0,585.7 646.0,589.2 652.0,593.0 658.0,596.9 664.0,600.8 670.0,604.4 676.0,607.7 682.0,610.8 688.0,613.9 694.0,617.2 700.0,620.7 706.0,624.4 712.0,628.1 718.0,631.5 724.0,634.6 730.0,637.3 736.0,639.9 742.0,642.4 748.0,645.3 754.0,648.5 760.0,651.9 766.0,655.5 772.0,658.9 778.0,662.0 784.0,665.0 790.0,667.9 796.0,671.0 802.0,674.4 808.0,678.2 814.0,682.3 820.0,686.2 826.0,690.0 832.0,693.4 838.0,696.4 844.0,699.3 850.0,702.3 856.0,705.5 862.0,708.9 868.0,712.5 874.0,715.9 880.0,719.0 886.0,721.8 892.0,724.3 898.0,726.9 904.0,729.7 910.0,732.8 916.0,736.3 922.0,740.0 928.0,743.7 934.0,747.2 940.0,750.4 946.0,753.5 952.0,756.6 958.0,760.0 964.0,763.6 970.0,767.6 976.0,771.5 982.0,775.3 988.0,778.6 994.0,781.6 1000.0,784.4 1006.0,787.1" fill="none" stroke="#5a4c44" stroke-width="2.2" opacity="0.20"/>
<polyline points="430.0,476.3 436.0,480.1 442.0,483.5 448.0,486.2 454.0,488.9 460.0,492.1 466.0,495.2 472.0,497.8 478.0,500.0 484.0,502.6 490.0,505.9 496.0,509.3 502.0,512.2 508.0,515.0 514.0,518.4 520.0,522.1 526.0,525.3 532.0,527.9 538.0,530.4 544.0,533.3 550.0,536.4 556.0,539.1 562.0,541.4 568.0,544.2 574.0,547.7 580.0,551.2 586.0,554.2 592.0,557.1 598.0,560.3 604.0,563.9 610.0,566.9 616.0,569.3 622.0,571.6 628.0,574.5 634.0,577.7 640.0,580.5 646.0,583.0 652.0,586.0 658.0,589.7 664.0,593.3 670.0,596.3 676.0,599.0 682.0,602.0 688.0,605.3 694.0,608.2 700.0,610.5 706.0,612.8 712.0,615.8 718.0,619.2 724.0,622.2 730.0,624.9 736.0,628.0 742.0,631.7 748.0,635.3 754.0,638.1 760.0,640.6 766.0,643.5 772.0,646.6 778.0,649.5 784.0,651.8 790.0,654.2 796.0,657.4 802.0,661.0 808.0,664.2 814.0,667.0 820.0,670.1 826.0,673.6 832.0,677.0 838.0,679.7 844.0,682.0 850.0,684.7 856.0,687.8 862.0,690.8 868.0,693.2 874.0,695.9 880.0,699.2 886.0,703.0 892.0,706.2 898.0,709.0 904.0,712.0 910.0,715.3 916.0,718.5 922.0,721.0 928.0,723.2 934.0,725.9 940.0,729.1 946.0,732.3 952.0,735.0 958.0,737.8 964.0,741.3 970.0,745.0 976.0,748.2 982.0,750.9 988.0,753.6 994.0,756.7 1000.0,759.8 1006.0,762.3" fill="none" stroke="#5a4c44" stroke-width="0.8" opacity="0.25"/>
<polyline points="430.0,483.0 436.0,486.5 442.0,490.0 448.0,493.5 454.0,497.0 460.0,500.4 466.0,503.6 472.0,506.7 478.0,509.9 484.0,513.1 490.0,516.5 496.0,520.0 502.0,523.7 508.0,527.5 514.0,531.3 520.0,535.0 526.0,538.6 532.0,541.9 538.0,545.1 544.0,548.2 550.0,551.3 556.0,554.4 562.0,557.6 568.0,560.9 574.0,564.3 580.0,567.8 586.0,571.2 592.0,574.6 598.0,577.7 604.0,580.7 610.0,583.6 616.0,586.5 622.0,589.4 628.0,592.5 634.0,595.8 640.0,599.3 646.0,602.9 652.0,606.5 658.0,610.2 664.0,613.7 670.0,617.1 676.0,620.4 682.0,623.6 688.0,626.9 694.0,630.2 700.0,633.6 706.0,637.2 712.0,640.9 718.0,644.7 724.0,648.3 730.0,651.9 736.0,655.3 742.0,658.4 748.0,661.4 754.0,664.4 760.0,667.3 766.0,670.3 772.0,673.5 778.0,676.8 784.0,680.2 790.0,683.7 796.0,687.1 802.0,690.3 808.0,693.5 814.0,696.5 820.0,699.5 826.0,702.5 832.0,705.6 838.0,708.9 844.0,712.4 850.0,716.1 856.0,719.8 862.0,723.6 868.0,727.3 874.0,730.8 880.0,734.2 886.0,737.4 892.0,740.6 898.0,743.8 904.0,747.2 910.0,750.6 916.0,754.2 922.0,757.8 928.0,761.4 934.0,764.9 940.0,768.2 946.0,771.4 952.0,774.3 958.0,777.2 964.0,780.0 970.0,783.0 976.0,786.1 982.0,789.3 988.0,792.7 994.0,796.2 1000.0,799.7 1006.0,803.1" fill="none" stroke="#5a4c44" stroke-width="0.8" opacity="0.11"/>
<polyline points="430.0,488.7 436.0,491.9 442.0,495.1 448.0,498.1 454.0,501.0 460.0,503.8 466.0,506.4 472.0,509.0 478.0,511.5 484.0,514.1 490.0,516.9 496.0,519.8 502.0,522.8 508.0,525.9 514.0,529.1 520.0,532.2 526.0,535.2 532.0,538.2 538.0,541.1 544.0,543.9 550.0,546.7 556.0,549.5 562.0,552.4 568.0,555.5 574.0,558.7 580.0,562.1 586.0,565.5 592.0,568.9 598.0,572.2 604.0,575.5 610.0,578.6 616.0,581.5 622.0,584.3 628.0,587.1 634.0,589.9 640.0,592.7 646.0,595.6 652.0,598.7 658.0,601.7 664.0,604.9 670.0,608.0 676.0,611.0 682.0,613.9 688.0,616.7 694.0,619.4 700.0,622.0 706.0,624.5 712.0,627.1 718.0,629.9 724.0,632.7 730.0,635.8 736.0,638.9 742.0,642.2 748.0,645.4 754.0,648.6 760.0,651.8 766.0,654.8 772.0,657.7 778.0,660.6 784.0,663.5 790.0,666.4 796.0,669.4 802.0,672.6 808.0,675.9 814.0,679.2 820.0,682.6 826.0,685.9 832.0,689.2 838.0,692.2 844.0,695.2 850.0,697.9 856.0,700.6 862.0,703.3 868.0,706.0 874.0,708.7 880.0,711.6 886.0,714.6 892.0,717.6 898.0,720.7 904.0,723.8 910.0,726.8 916.0,729.6 922.0,732.4 928.0,735.1 934.0,737.7 940.0,740.4 946.0,743.1 952.0,746.0 958.0,749.1 964.0,752.3 970.0,755.6 976.0,759.0 982.0,762.3 988.0,765.6 994.0,768.7 1000.0,771.7 1006.0,774.7" fill="none" stroke="#5a4c44" stroke-width="1.2" opacity="0.11"/>
<polyline points="430.0,494.8 436.0,497.0 442.0,499.0 448.0,501.0 454.0,503.1 460.0,505.4 466.0,507.9 472.0,510.8 478.0,513.7 484.0,516.7 490.0,519.5 496.0,522.2 502.0,524.6 508.0,526.9 514.0,529.2 520.0,531.7 526.0,534.3 532.0,537.3 538.0,540.6 544.0,544.1 550.0,547.6 556.0,551.0 562.0,554.2 568.0,557.1 574.0,559.8 580.0,562.2 586.0,564.6 592.0,567.1 598.0,569.7 604.0,572.6 610.0,575.6 616.0,578.7 622.0,581.7 628.0,584.4 634.0,586.9 640.0,589.1 646.0,591.1 652.0,593.0 658.0,595.0 664.0,597.3 670.0,599.8 676.0,602.6 682.0,605.7 688.0,608.9 694.0,612.0 700.0,614.9 706.0,617.7 712.0,620.2 718.0,622.7 724.0,625.2 730.0,627.9 736.0,630.9 742.0,634.1 748.0,637.5 754.0,641.0 760.0,644.4 766.0,647.6 772.0,650.5 778.0,653.1 784.0,655.4 790.0,657.6 796.0,659.8 802.0,662.2 808.0,664.8 814.0,667.5 820.0,670.5 826.0,673.4 832.0,676.2 838.0,678.7 844.0,681.0 850.0,683.2 856.0,685.2 862.0,687.3 868.0,689.5 874.0,692.1 880.0,695.0 886.0,698.2 892.0,701.6 898.0,704.9 904.0,708.1 910.0,711.1 916.0,713.9 922.0,716.5 928.0,719.1 934.0,721.7 940.0,724.5 946.0,727.5 952.0,730.7 958.0,734.1 964.0,737.4 970.0,740.5 976.0,743.4 982.0,745.9 988.0,748.1 994.0,750.1 1000.0,752.1 1006.0,754.3" fill="none" stroke="#5a4c44" stroke-width="0.8" opacity="0.31"/>
<polyline points="430.0,495.5 436.0,498.9 442.0,501.9 448.0,504.7 454.0,507.7 460.0,511.2 466.0,514.8 472.0,518.1 478.0,520.7 484.0,523.3 490.0,526.2 496.0,529.3 502.0,532.2 508.0,534.6 514.0,537.0 520.0,540.0 526.0,543.4 532.0,546.9 538.0,550.0 544.0,552.8 550.0,555.9 556.0,559.5 562.0,562.9 568.0,565.7 574.0,568.0 580.0,570.5 586.0,573.5 592.0,576.6 598.0,579.5 604.0,582.0 610.0,584.7 616.0,588.1 622.0,591.8 628.0,595.2 634.0,598.1 640.0,600.9 646.0,604.0 652.0,607.4 658.0,610.4 664.0,612.8 670.0,615.1 676.0,617.8 682.0,621.0 688.0,624.2 694.0,627.1 700.0,629.8 706.0,632.9 712.0,636.5 718.0,640.2 724.0,643.3 730.0,645.9 736.0,648.6 742.0,651.6 748.0,654.8 754.0,657.5 760.0,659.8 766.0,662.3 772.0,665.4 778.0,668.9 784.0,672.2 790.0,675.1 796.0,677.9 802.0,681.3 808.0,684.9 814.0,688.2 820.0,690.9 826.0,693.2 832.0,695.9 838.0,699.0 844.0,702.1 850.0,704.7 856.0,707.1 862.0,710.0 868.0,713.5 874.0,717.1 880.0,720.3 886.0,723.2 892.0,726.1 898.0,729.4 904.0,732.8 910.0,735.7 916.0,738.0 922.0,740.4 928.0,743.2 934.0,746.4 940.0,749.5 946.0,752.2 952.0,754.9 958.0,758.2 964.0,761.9 970.0,765.4 976.0,768.4 982.0,771.0 988.0,773.9 994.0,777.1 1000.0,780.2 1006.0,782.8" fill="none" stroke="#5a4c44" stroke-width="1.0" opacity="0.35"/>
<polyline points="430.0,503.8 436.0,506.8 442.0,509.7 448.0,512.5 454.0,515.3 460.0,518.0 466.0,520.9 472.0,523.9 478.0,527.1 484.0,530.4 490.0,533.7 496.0,537.0 502.0,540.1 508.0,543.1 514.0,546.0 520.0,548.7 526.0,551.4 532.0,554.1 538.0,556.9 544.0,559.8 550.0,562.8 556.0,565.8 562.0,568.8 568.0,571.7 574.0,574.5 580.0,577.1 586.0,579.6 592.0,582.1 598.0,584.8 604.0,587.5 610.0,590.5 616.0,593.6 622.0,596.8 628.0,600.0 634.0,603.1 640.0,606.2 646.0,609.1 652.0,611.9 658.0,614.7 664.0,617.6 670.0,620.6 676.0,623.7 682.0,627.0 688.0,630.2 694.0,633.5 700.0,636.6 706.0,639.5 712.0,642.2 718.0,644.8 724.0,647.4 730.0,650.0 736.0,652.7 742.0,655.6 748.0,658.5 754.0,661.5 760.0,664.5 766.0,667.4 772.0,670.2 778.0,672.9 784.0,675.5 790.0,678.1 796.0,680.9 802.0,683.7 808.0,686.8 814.0,690.0 820.0,693.2 826.0,696.5 832.0,699.8 838.0,702.8 844.0,705.8 850.0,708.6 856.0,711.4 862.0,714.3 868.0,717.2 874.0,720.2 880.0,723.4 886.0,726.5 892.0,729.6 898.0,732.6 904.0,735.5 910.0,738.2 916.0,740.7 922.0,743.2 928.0,745.8 934.0,748.4 940.0,751.2 946.0,754.2 952.0,757.2 958.0,760.3 964.0,763.3 970.0,766.2 976.0,769.0 982.0,771.7 988.0,774.5 994.0,777.3 1000.0,780.2 1006.0,783.3" fill="none" stroke="#5a4c44" stroke-width="0.8" opacity="0.29"/>
<polyline points="430.0,509.5 436.0,512.8 442.0,516.3 448.0,519.9 454.0,523.6 460.0,527.5 466.0,531.2 472.0,534.9 478.0,538.3 484.0,541.5 490.0,544.5 496.0,547.2 502.0,549.9 508.0,552.6 514.0,555.4 520.0,558.4 526.0,561.6 532.0,565.0 538.0,568.5 544.0,572.0 550.0,575.6 556.0,579.0 562.0,582.3 568.0,585.4 574.0,588.4 580.0,591.3 586.0,594.4 592.0,597.6 598.0,601.0 604.0,604.6 610.0,608.5 616.0,612.5 622.0,616.6 628.0,620.5 634.0,624.4 640.0,628.0 646.0,631.4 652.0,634.5 658.0,637.6 664.0,640.7 670.0,643.8 676.0,647.0 682.0,650.4 688.0,653.9 694.0,657.6 700.0,661.2 706.0,664.7 712.0,668.1 718.0,671.2 724.0,674.1 730.0,676.8 736.0,679.5 742.0,682.1 748.0,684.9 754.0,687.9 760.0,691.1 766.0,694.6 772.0,698.2 778.0,702.0 784.0,705.7 790.0,709.3 796.0,712.8 802.0,716.1 808.0,719.3 814.0,722.4 820.0,725.6 826.0,728.9 832.0,732.3 838.0,736.0 844.0,739.8 850.0,743.8 856.0,747.8 862.0,751.8 868.0,755.5 874.0,759.1 880.0,762.4 886.0,765.4 892.0,768.3 898.0,771.2 904.0,774.1 910.0,777.1 916.0,780.3 922.0,783.7 928.0,787.1 934.0,790.7 940.0,794.1 946.0,797.5 952.0,800.7 958.0,803.6 964.0,806.4 970.0,809.2 976.0,811.9 982.0,814.8 988.0,817.9 994.0,821.2 1000.0,824.8 1006.0,828.6" fill="none" stroke="#5a4c44" stroke-width="0.8" opacity="0.22"/>
<polyline points="430.0,516.8 436.0,518.7 442.0,520.6 448.0,522.9 454.0,525.9 460.0,529.6 466.0,533.4 472.0,537.1 478.0,540.3 484.0,543.2 490.0,545.9 496.0,549.0 502.0,552.6 508.0,556.7 514.0,560.8 520.0,564.5 526.0,567.5 532.0,569.8 538.0,571.8 544.0,574.0 550.0,576.7 556.0,579.9 562.0,583.2 568.0,586.3 574.0,588.9 580.0,591.0 586.0,593.1 592.0,595.5 598.0,598.7 604.0,602.5 610.0,606.7 616.0,610.7 622.0,614.3 628.0,617.3 634.0,620.0 640.0,622.8 646.0,626.1 652.0,629.8 658.0,633.7 664.0,637.2 670.0,640.1 676.0,642.2 682.0,644.0 688.0,646.0 694.0,648.4 700.0,651.5 706.0,654.9 712.0,658.3 718.0,661.3 724.0,663.8 730.0,666.2 736.0,668.9 742.0,672.1 748.0,676.0 754.0,680.3 760.0,684.5 766.0,688.2 772.0,691.2 778.0,693.8 784.0,696.3 790.0,699.1 796.0,702.4 802.0,705.9 808.0,709.3 814.0,712.1 820.0,714.3 826.0,716.1 832.0,717.9 838.0,720.3 844.0,723.4 850.0,727.1 856.0,730.8 862.0,734.3 868.0,737.3 874.0,740.0 880.0,742.7 886.0,745.9 892.0,749.7 898.0,753.9 904.0,758.1 910.0,761.7 916.0,764.7 922.0,767.0 928.0,769.1 934.0,771.5 940.0,774.4 946.0,777.7 952.0,781.0 958.0,783.9 964.0,786.3 970.0,788.3 976.0,790.3 982.0,792.8 988.0,796.0 994.0,799.9 1000.0,803.9 1006.0,807.8" fill="none" stroke="#5a4c44" stroke-width="1.2" opacity="0.13"/>
<polyline points="430.0,519.7 436.0,522.9 442.0,526.1 448.0,529.2 454.0,532.3 460.0,535.4 466.0,538.4 472.0,541.5 478.0,544.7 484.0,547.9 490.0,551.1 496.0,554.5 502.0,557.8 508.0,561.1 514.0,564.4 520.0,567.6 526.0,570.8 532.0,574.0 538.0,577.1 544.0,580.3 550.0,583.6 556.0,586.8 562.0,590.2 568.0,593.6 574.0,597.0 580.0,600.5 586.0,603.8 592.0,607.2 598.0,610.5 604.0,613.7 610.0,616.8 616.0,620.0 622.0,623.1 628.0,626.3 634.0,629.5 640.0,632.7 646.0,636.0 652.0,639.3 658.0,642.6 664.0,645.8 670.0,649.0 676.0,652.2 682.0,655.3 688.0,658.4 694.0,661.4 700.0,664.5 706.0,667.6 712.0,670.8 718.0,674.1 724.0,677.4 730.0,680.8 736.0,684.2 742.0,687.5 748.0,690.8 754.0,694.1 760.0,697.3 766.0,700.5 772.0,703.7 778.0,706.9 784.0,710.2 790.0,713.5 796.0,716.8 802.0,720.2 808.0,723.6 814.0,727.0 820.0,730.4 826.0,733.7 832.0,736.9 838.0,740.0 844.0,743.1 850.0,746.2 856.0,749.3 862.0,752.4 868.0,755.6 874.0,758.8 880.0,762.1 886.0,765.4 892.0,768.7 898.0,771.9 904.0,775.1 910.0,778.3 916.0,781.4 922.0,784.5 928.0,787.6 934.0,790.7 940.0,793.9 946.0,797.2 952.0,800.5 958.0,803.9 964.0,807.3 970.0,810.7 976.0,814.1 982.0,817.4 988.0,820.7 994.0,824.0 1000.0,827.2 1006.0,830.4" fill="none" stroke="#5a4c44" stroke-width="1.0" opacity="0.26"/>
<polyline points="430.0,523.8 436.0,526.6 442.0,529.7 448.0,532.8 454.0,535.8 460.0,538.4 466.0,540.7 472.0,542.8 478.0,545.0 484.0,547.5 490.0,550.4 496.0,553.4 502.0,556.3 508.0,559.1 514.0,561.6 520.0,564.1 526.0,566.8 532.0,569.8 538.0,573.1 544.0,576.5 550.0,579.7 556.0,582.6 562.0,585.2 568.0,587.6 574.0,590.2 580.0,592.9 586.0,595.9 592.0,598.8 598.0,601.5 604.0,604.0 610.0,606.2 616.0,608.3 622.0,610.7 628.0,613.5 634.0,616.5 640.0,619.7 646.0,622.8 652.0,625.6 658.0,628.2 664.0,630.8 670.0,633.6 676.0,636.8 682.0,640.1 688.0,643.4 694.0,646.4 700.0,649.0 706.0,651.3 712.0,653.6 718.0,656.1 724.0,658.8 730.0,661.7 736.0,664.5 742.0,667.2 748.0,669.6 754.0,671.8 760.0,674.2 766.0,676.9 772.0,679.9 778.0,683.2 784.0,686.5 790.0,689.6 796.0,692.3 802.0,695.0 808.0,697.6 814.0,700.5 820.0,703.6 826.0,706.8 832.0,709.8 838.0,712.5 844.0,714.8 850.0,717.0 856.0,719.2 862.0,721.7 868.0,724.5 874.0,727.5 880.0,730.4 886.0,733.1 892.0,735.5 898.0,737.9 904.0,740.6 910.0,743.6 916.0,746.8 922.0,750.2 928.0,753.5 934.0,756.4 940.0,759.1 946.0,761.6 952.0,764.2 958.0,767.0 964.0,770.0 970.0,773.0 976.0,775.7 982.0,778.2 988.0,780.3 994.0,782.5 1000.0,784.8 1006.0,787.5" fill="none" stroke="#5a4c44" stroke-width="1.0" opacity="0.20"/>
<polyline points="430.0,527.5 436.0,531.1 442.0,534.8 448.0,538.4 454.0,541.8 460.0,545.0 466.0,547.9 472.0,550.7 478.0,553.5 484.0,556.3 490.0,559.3 496.0,562.4 502.0,565.6 508.0,568.9 514.0,572.0 520.0,575.0 526.0,577.8 532.0,580.5 538.0,583.1 544.0,585.9 550.0,588.8 556.0,592.1 562.0,595.5 568.0,599.1 574.0,602.6 580.0,606.1 586.0,609.3 592.0,612.4 598.0,615.4 604.0,618.5 610.0,621.6 616.0,624.9 622.0,628.3 628.0,631.9 634.0,635.4 640.0,638.8 646.0,641.9 652.0,644.8 658.0,647.5 664.0,650.1 670.0,652.8 676.0,655.6 682.0,658.6 688.0,661.8 694.0,665.1 700.0,668.3 706.0,671.4 712.0,674.4 718.0,677.2 724.0,680.0 730.0,682.8 736.0,685.8 742.0,689.1 748.0,692.6 754.0,696.3 760.0,699.9 766.0,703.5 772.0,706.8 778.0,710.0 784.0,713.0 790.0,715.9 796.0,718.9 802.0,722.0 808.0,725.3 814.0,728.7 820.0,732.1 826.0,735.4 832.0,738.4 838.0,741.3 844.0,743.9 850.0,746.5 856.0,749.1 862.0,751.9 868.0,754.9 874.0,758.1 880.0,761.4 886.0,764.8 892.0,768.1 898.0,771.2 904.0,774.2 910.0,777.2 916.0,780.1 922.0,783.2 928.0,786.5 934.0,790.0 940.0,793.6 946.0,797.3 952.0,800.9 958.0,804.2 964.0,807.3 970.0,810.3 976.0,813.1 982.0,815.9 988.0,818.8 994.0,821.9 1000.0,825.1 1006.0,828.4" fill="none" stroke="#5a4c44" stroke-width="1.0" opacity="0.35"/>
<polyline points="430.0,536.1 436.0,538.4 442.0,541.0 448.0,544.4 454.0,548.4 460.0,552.6 466.0,556.1 472.0,558.6 478.0,560.4 484.0,562.2 490.0,564.6 496.0,567.6 502.0,570.7 508.0,573.3 514.0,575.2 520.0,576.6 526.0,578.4 532.0,581.1 538.0,584.8 544.0,588.8 550.0,592.5 556.0,595.4 562.0,597.9 568.0,600.5 574.0,603.7 580.0,607.5 586.0,611.3 592.0,614.4 598.0,616.6 604.0,618.1 610.0,619.6 616.0,621.7 622.0,624.6 628.0,627.8 634.0,630.6 640.0,632.8 646.0,634.7 652.0,636.8 658.0,639.9 664.0,643.8 670.0,648.1 676.0,651.9 682.0,654.9 688.0,657.2 694.0,659.5 700.0,662.4 706.0,665.8 712.0,669.2 718.0,672.0 724.0,673.9 730.0,675.3 736.0,676.7 742.0,678.9 748.0,682.0 754.0,685.4 760.0,688.7 766.0,691.3 772.0,693.5 778.0,696.0 784.0,699.2 790.0,703.3 796.0,707.5 802.0,711.2 808.0,714.0 814.0,716.0 820.0,717.9 826.0,720.3 832.0,723.3 838.0,726.5 844.0,729.2 850.0,731.1 856.0,732.5 862.0,734.1 868.0,736.6 874.0,740.0 880.0,743.8 886.0,747.5 892.0,750.4 898.0,752.9 904.0,755.5 910.0,758.7 916.0,762.5 922.0,766.5 928.0,769.9 934.0,772.3 940.0,773.9 946.0,775.5 952.0,777.6 958.0,780.4 964.0,783.6 970.0,786.4 976.0,788.5 982.0,790.2 988.0,792.2 994.0,795.0 1000.0,798.8 1006.0,803.0" fill="none" stroke="#5a4c44" stroke-width="1.2" opacity="0.36"/>
<polyline points="430.0,542.8 436.0,546.3 442.0,549.5 448.0,552.8 454.0,556.3 460.0,560.1 466.0,563.5 472.0,566.5 478.0,569.3 484.0,572.2 490.0,575.6 496.0,579.3 502.0,582.8 508.0,586.1 514.0,589.3 520.0,592.7 526.0,596.6 532.0,600.7 538.0,604.4 544.0,607.6 550.0,610.6 556.0,613.8 562.0,617.4 568.0,620.9 574.0,624.1 580.0,626.9 586.0,629.8 592.0,633.1 598.0,636.8 604.0,640.6 610.0,644.2 616.0,647.5 622.0,650.8 628.0,654.5 634.0,658.4 640.0,662.2 646.0,665.5 652.0,668.4 658.0,671.3 664.0,674.6 670.0,678.1 676.0,681.5 682.0,684.6 688.0,687.5 694.0,690.7 700.0,694.5 706.0,698.4 712.0,702.3 718.0,705.7 724.0,708.9 730.0,712.3 736.0,716.0 742.0,719.8 748.0,723.2 754.0,726.1 760.0,728.8 766.0,731.9 772.0,735.4 778.0,739.0 784.0,742.4 790.0,745.5 796.0,748.7 802.0,752.3 808.0,756.3 814.0,760.2 820.0,763.8 826.0,767.0 832.0,770.1 838.0,773.5 844.0,777.1 850.0,780.6 856.0,783.7 862.0,786.4 868.0,789.3 874.0,792.7 880.0,796.5 886.0,800.2 892.0,803.6 898.0,806.8 904.0,810.3 910.0,814.1 916.0,818.1 922.0,821.8 928.0,825.0 934.0,827.9 940.0,831.0 946.0,834.4 952.0,837.9 958.0,841.2 964.0,844.1 970.0,847.0 976.0,850.3 982.0,854.1 988.0,858.1 994.0,861.7 1000.0,865.1 1006.0,868.3" fill="none" stroke="#5a4c44" stroke-width="1.0" opacity="0.29"/>
<polyline points="430.0,547.9 436.0,550.2 442.0,551.8 448.0,553.8 454.0,556.8 460.0,560.6 466.0,564.3 472.0,567.2 478.0,569.8 484.0,572.9 490.0,576.8 496.0,580.9 502.0,584.2 508.0,586.5 514.0,588.3 520.0,590.6 526.0,593.7 532.0,596.9 538.0,599.4 544.0,601.3 550.0,603.5 556.0,606.6 562.0,610.7 568.0,614.7 574.0,617.9 580.0,620.6 586.0,623.4 592.0,626.9 598.0,630.6 604.0,633.8 610.0,635.9 616.0,637.5 622.0,639.6 628.0,642.6 634.0,645.9 640.0,648.9 646.0,651.2 652.0,653.6 658.0,656.9 664.0,661.0 670.0,665.2 676.0,668.6 682.0,671.1 688.0,673.5 694.0,676.5 700.0,679.9 706.0,683.0 712.0,685.1 718.0,686.7 724.0,688.7 730.0,691.7 736.0,695.4 742.0,698.9 748.0,701.6 754.0,704.2 760.0,707.4 766.0,711.5 772.0,715.6 778.0,718.9 784.0,721.1 790.0,723.1 796.0,725.7 802.0,728.8 808.0,731.9 814.0,734.2 820.0,736.0 826.0,738.2 832.0,741.4 838.0,745.4 844.0,749.2 850.0,752.3 856.0,755.0 862.0,757.9 868.0,761.6 874.0,765.5 880.0,768.6 886.0,770.7 892.0,772.4 898.0,774.6 904.0,777.7 910.0,780.9 916.0,783.6 922.0,785.8 928.0,788.2 934.0,791.5 940.0,795.7 946.0,799.8 952.0,803.0 958.0,805.5 964.0,808.1 970.0,811.4 976.0,814.9 982.0,817.9 988.0,819.9 994.0,821.5 1000.0,823.6 1006.0,826.7" fill="none" stroke="#5a4c44" stroke-width="1.4" opacity="0.17"/>
<polyline points="430.0,549.5 436.0,552.4 442.0,555.4 448.0,558.5 454.0,561.4 460.0,564.0 466.0,566.5 472.0,568.8 478.0,571.3 484.0,574.0 490.0,577.0 496.0,580.2 502.0,583.4 508.0,586.5 514.0,589.4 520.0,592.1 526.0,594.9 532.0,597.8 538.0,601.0 544.0,604.3 550.0,607.7 556.0,610.9 562.0,613.8 568.0,616.5 574.0,619.0 580.0,621.5 586.0,624.1 592.0,627.0 598.0,630.0 604.0,633.0 610.0,635.8 616.0,638.4 622.0,640.9 628.0,643.3 634.0,646.0 640.0,649.0 646.0,652.2 652.0,655.5 658.0,658.8 664.0,661.9 670.0,664.8 676.0,667.6 682.0,670.4 688.0,673.3 694.0,676.4 700.0,679.7 706.0,682.9 712.0,685.9 718.0,688.6 724.0,691.0 730.0,693.4 736.0,695.9 742.0,698.6 748.0,701.5 754.0,704.5 760.0,707.5 766.0,710.4 772.0,713.1 778.0,715.7 784.0,718.3 790.0,721.2 796.0,724.3 802.0,727.7 808.0,731.1 814.0,734.4 820.0,737.4 826.0,740.2 832.0,742.9 838.0,745.6 844.0,748.5 850.0,751.5 856.0,754.6 862.0,757.6 868.0,760.4 874.0,763.0 880.0,765.4 886.0,767.7 892.0,770.3 898.0,773.1 904.0,776.2 910.0,779.3 916.0,782.4 922.0,785.4 928.0,788.1 934.0,790.9 940.0,793.7 946.0,796.7 952.0,800.0 958.0,803.4 964.0,806.7 970.0,809.8 976.0,812.7 982.0,815.3 988.0,817.8 994.0,820.4 1000.0,823.2 1006.0,826.2" fill="none" stroke="#5a4c44" stroke-width="1.0" opacity="0.33"/>
<polyline points="430.0,556.3 436.0,559.6 442.0,562.9 448.0,566.2 454.0,569.3 460.0,572.1 466.0,574.6 472.0,577.1 478.0,579.8 484.0,582.8 490.0,586.1 496.0,589.5 502.0,592.8 508.0,595.9 514.0,598.8 520.0,601.7 526.0,604.8 532.0,608.2 538.0,611.8 544.0,615.5 550.0,619.0 556.0,622.3 562.0,625.1 568.0,627.9 574.0,630.6 580.0,633.5 586.0,636.7 592.0,640.0 598.0,643.1 604.0,646.0 610.0,648.7 616.0,651.2 622.0,653.8 628.0,656.8 634.0,660.1 640.0,663.6 646.0,667.2 652.0,670.6 658.0,673.7 664.0,676.7 670.0,679.7 676.0,682.9 682.0,686.3 688.0,689.9 694.0,693.4 700.0,696.7 706.0,699.6 712.0,702.2 718.0,704.7 724.0,707.4 730.0,710.4 736.0,713.6 742.0,716.8 748.0,719.9 754.0,722.8 760.0,725.5 766.0,728.2 772.0,731.2 778.0,734.4 784.0,738.0 790.0,741.7 796.0,745.3 802.0,748.6 808.0,751.6 814.0,754.5 820.0,757.5 826.0,760.7 832.0,764.1 838.0,767.5 844.0,770.7 850.0,773.7 856.0,776.3 862.0,778.8 868.0,781.3 874.0,784.2 880.0,787.3 886.0,790.6 892.0,794.0 898.0,797.1 904.0,800.0 910.0,802.9 916.0,805.8 922.0,809.0 928.0,812.6 934.0,816.3 940.0,819.9 946.0,823.3 952.0,826.4 958.0,829.2 964.0,832.0 970.0,834.9 976.0,838.0 982.0,841.3 988.0,844.5 994.0,847.6 1000.0,850.3 1006.0,852.8" fill="none" stroke="#5a4c44" stroke-width="1.0" opacity="0.27"/>
<polyline points="430.0,560.1 436.0,562.4 442.0,565.1 448.0,568.6 454.0,572.2 460.0,575.1 466.0,577.7 472.0,581.1 478.0,585.5 484.0,589.9 490.0,593.5 496.0,596.5 502.0,599.9 508.0,603.9 514.0,607.6 520.0,610.3 526.0,612.5 532.0,615.3 538.0,619.0 544.0,622.8 550.0,625.9 556.0,628.9 562.0,632.5 568.0,637.1 574.0,641.4 580.0,644.8 586.0,647.5 592.0,650.6 598.0,654.3 604.0,657.8 610.0,660.4 616.0,662.6 622.0,665.7 628.0,669.7 634.0,673.8 640.0,677.2 646.0,680.4 652.0,684.1 658.0,688.6 664.0,692.6 670.0,695.6 676.0,698.0 682.0,700.9 688.0,704.5 694.0,707.9 700.0,710.6 706.0,713.1 712.0,716.6 718.0,721.0 724.0,725.3 730.0,728.7 736.0,731.8 742.0,735.5 748.0,739.6 754.0,743.3 760.0,745.9 766.0,748.1 772.0,751.0 778.0,754.7 784.0,758.3 790.0,761.3 796.0,764.2 802.0,768.0 808.0,772.6 814.0,776.8 820.0,780.1 826.0,783.0 832.0,786.3 838.0,790.2 844.0,793.5 850.0,796.0 856.0,798.2 862.0,801.4 868.0,805.4 874.0,809.3 880.0,812.5 886.0,815.6 892.0,819.6 898.0,824.1 904.0,828.1 910.0,831.1 916.0,833.6 922.0,836.7 928.0,840.3 934.0,843.6 940.0,846.1 946.0,848.6 952.0,852.2 958.0,856.5 964.0,860.6 970.0,864.0 976.0,867.2 982.0,871.0 988.0,875.3 994.0,878.9 1000.0,881.5 1006.0,883.8" fill="none" stroke="#5a4c44" stroke-width="1.0" opacity="0.32"/>
<polyline points="430.0,567.8 436.0,570.8 442.0,573.6 448.0,576.4 454.0,579.2 460.0,582.1 466.0,585.2 472.0,588.4 478.0,591.5 484.0,594.4 490.0,597.0 496.0,599.6 502.0,602.3 508.0,605.1 514.0,608.0 520.0,610.9 526.0,613.7 532.0,616.2 538.0,618.8 544.0,621.5 550.0,624.4 556.0,627.5 562.0,630.6 568.0,633.7 574.0,636.5 580.0,639.3 586.0,642.1 592.0,645.1 598.0,648.2 604.0,651.3 610.0,654.2 616.0,656.9 622.0,659.5 628.0,662.0 634.0,664.6 640.0,667.5 646.0,670.4 652.0,673.3 658.0,676.1 664.0,678.7 670.0,681.4 676.0,684.2 682.0,687.2 688.0,690.4 694.0,693.6 700.0,696.7 706.0,699.5 712.0,702.2 718.0,704.9 724.0,707.8 730.0,710.9 736.0,713.8 742.0,716.7 748.0,719.3 754.0,721.8 760.0,724.3 766.0,727.0 772.0,729.9 778.0,732.9 784.0,735.9 790.0,738.7 796.0,741.5 802.0,744.2 808.0,747.1 814.0,750.3 820.0,753.5 826.0,756.6 832.0,759.5 838.0,762.3 844.0,764.9 850.0,767.5 856.0,770.4 862.0,773.3 868.0,776.2 874.0,779.0 880.0,781.6 886.0,784.1 892.0,786.7 898.0,789.5 904.0,792.6 910.0,795.7 916.0,798.7 922.0,801.6 928.0,804.4 934.0,807.2 940.0,810.1 946.0,813.2 952.0,816.4 958.0,819.4 964.0,822.2 970.0,824.8 976.0,827.3 982.0,829.9 988.0,832.8 994.0,835.7 1000.0,838.6 1006.0,841.3" fill="none" stroke="#5a4c44" stroke-width="2.2" opacity="0.25"/>
<polyline points="430.0,572.3 436.0,575.1 442.0,578.0 448.0,581.0 454.0,584.1 460.0,587.3 466.0,590.4 472.0,593.4 478.0,596.2 484.0,599.0 490.0,601.8 496.0,604.6 502.0,607.4 508.0,610.4 514.0,613.6 520.0,616.8 526.0,620.1 532.0,623.5 538.0,626.7 544.0,629.8 550.0,632.8 556.0,635.6 562.0,638.2 568.0,640.8 574.0,643.5 580.0,646.2 586.0,649.0 592.0,651.9 598.0,654.9 604.0,657.9 610.0,660.9 616.0,663.7 622.0,666.5 628.0,669.1 634.0,671.7 640.0,674.2 646.0,676.7 652.0,679.4 658.0,682.2 664.0,685.2 670.0,688.3 676.0,691.6 682.0,694.8 688.0,698.0 694.0,701.1 700.0,704.1 706.0,707.0 712.0,709.8 718.0,712.6 724.0,715.5 730.0,718.4 736.0,721.5 742.0,724.7 748.0,727.9 754.0,731.2 760.0,734.3 766.0,737.4 772.0,740.2 778.0,742.9 784.0,745.5 790.0,748.0 796.0,750.5 802.0,753.1 808.0,755.8 814.0,758.7 820.0,761.6 826.0,764.7 832.0,767.7 838.0,770.6 844.0,773.4 850.0,776.1 856.0,778.8 862.0,781.4 868.0,784.0 874.0,786.8 880.0,789.7 886.0,792.8 892.0,796.0 898.0,799.3 904.0,802.7 910.0,806.0 916.0,809.1 922.0,812.1 928.0,815.0 934.0,817.8 940.0,820.6 946.0,823.3 952.0,826.2 958.0,829.2 964.0,832.3 970.0,835.4 976.0,838.5 982.0,841.6 988.0,844.5 994.0,847.3 1000.0,849.9 1006.0,852.4" fill="none" stroke="#5a4c44" stroke-width="2.2" opacity="0.27"/>
<polyline points="430.0,573.4 436.0,576.1 442.0,578.7 448.0,581.1 454.0,583.7 460.0,586.3 466.0,589.3 472.0,592.5 478.0,595.9 484.0,599.3 490.0,602.6 496.0,605.7 502.0,608.5 508.0,611.0 514.0,613.4 520.0,615.7 526.0,618.1 532.0,620.7 538.0,623.4 544.0,626.3 550.0,629.2 556.0,632.1 562.0,634.7 568.0,637.1 574.0,639.2 580.0,641.3 586.0,643.4 592.0,645.7 598.0,648.3 604.0,651.2 610.0,654.4 616.0,657.6 622.0,660.8 628.0,663.9 634.0,666.7 640.0,669.4 646.0,672.0 652.0,674.6 658.0,677.3 664.0,680.2 670.0,683.4 676.0,686.7 682.0,690.0 688.0,693.2 694.0,696.1 700.0,698.7 706.0,701.0 712.0,703.2 718.0,705.3 724.0,707.6 730.0,710.0 736.0,712.7 742.0,715.5 748.0,718.4 754.0,721.3 760.0,723.9 766.0,726.4 772.0,728.7 778.0,730.9 784.0,733.2 790.0,735.7 796.0,738.5 802.0,741.6 808.0,744.9 814.0,748.3 820.0,751.6 826.0,754.8 832.0,757.7 838.0,760.3 844.0,762.9 850.0,765.4 856.0,768.1 862.0,770.9 868.0,773.9 874.0,777.1 880.0,780.2 886.0,783.1 892.0,785.8 898.0,788.3 904.0,790.4 910.0,792.5 916.0,794.5 922.0,796.7 928.0,799.2 934.0,801.9 940.0,804.8 946.0,807.8 952.0,810.8 958.0,813.6 964.0,816.2 970.0,818.7 976.0,821.1 982.0,823.6 988.0,826.3 994.0,829.2 1000.0,832.4 1006.0,835.8" fill="none" stroke="#5a4c44" stroke-width="1.0" opacity="0.14"/>
<polyline points="430.0,580.9 436.0,583.4 442.0,586.0 448.0,588.6 454.0,591.5 460.0,594.4 466.0,597.4 472.0,600.2 478.0,603.0 484.0,605.6 490.0,608.1 496.0,610.6 502.0,613.3 508.0,616.1 514.0,619.1 520.0,622.4 526.0,625.6 532.0,628.8 538.0,631.9 544.0,634.8 550.0,637.6 556.0,640.3 562.0,643.1 568.0,646.1 574.0,649.1 580.0,652.3 586.0,655.4 592.0,658.4 598.0,661.2 604.0,663.9 610.0,666.3 616.0,668.7 622.0,671.2 628.0,673.9 634.0,676.7 640.0,679.7 646.0,682.7 652.0,685.6 658.0,688.5 664.0,691.2 670.0,693.8 676.0,696.4 682.0,699.2 688.0,702.1 694.0,705.3 700.0,708.6 706.0,711.9 712.0,715.1 718.0,718.2 724.0,721.0 730.0,723.7 736.0,726.4 742.0,729.1 748.0,731.9 754.0,734.9 760.0,737.9 766.0,740.9 772.0,743.9 778.0,746.6 784.0,749.1 790.0,751.6 796.0,754.0 802.0,756.5 808.0,759.2 814.0,762.1 820.0,765.1 826.0,768.3 832.0,771.3 838.0,774.3 844.0,777.1 850.0,779.8 856.0,782.6 862.0,785.4 868.0,788.4 874.0,791.6 880.0,794.8 886.0,798.1 892.0,801.3 898.0,804.3 904.0,807.0 910.0,809.6 916.0,812.2 922.0,814.8 928.0,817.5 934.0,820.3 940.0,823.3 946.0,826.2 952.0,829.1 958.0,831.8 964.0,834.4 970.0,836.9 976.0,839.4 982.0,842.0 988.0,844.8 994.0,847.8 1000.0,851.0 1006.0,854.2" fill="none" stroke="#5a4c44" stroke-width="0.8" opacity="0.31"/>
<polyline points="430.0,586.0 436.0,588.7 442.0,591.2 448.0,593.7 454.0,596.1 460.0,598.8 466.0,601.6 472.0,604.7 478.0,607.9 484.0,611.2 490.0,614.3 496.0,617.3 502.0,620.1 508.0,622.6 514.0,625.1 520.0,627.6 526.0,630.3 532.0,633.1 538.0,636.0 544.0,639.0 550.0,641.8 556.0,644.4 562.0,646.8 568.0,649.1 574.0,651.3 580.0,653.5 586.0,656.0 592.0,658.7 598.0,661.6 604.0,664.6 610.0,667.6 616.0,670.5 622.0,673.2 628.0,675.9 634.0,678.4 640.0,681.0 646.0,683.8 652.0,686.8 658.0,690.0 664.0,693.2 670.0,696.4 676.0,699.4 682.0,702.2 688.0,704.7 694.0,707.1 700.0,709.4 706.0,711.9 712.0,714.5 718.0,717.2 724.0,720.1 730.0,722.9 736.0,725.6 742.0,728.2 748.0,730.5 754.0,732.8 760.0,735.1 766.0,737.5 772.0,740.2 778.0,743.1 784.0,746.2 790.0,749.4 796.0,752.5 802.0,755.4 808.0,758.2 814.0,760.8 820.0,763.4 826.0,766.1 832.0,769.0 838.0,772.0 844.0,775.1 850.0,778.2 856.0,781.2 862.0,783.9 868.0,786.5 874.0,788.8 880.0,791.0 886.0,793.3 892.0,795.7 898.0,798.3 904.0,801.1 910.0,804.0 916.0,806.8 922.0,809.5 928.0,812.1 934.0,814.5 940.0,816.9 946.0,819.4 952.0,822.1 958.0,825.0 964.0,828.1 970.0,831.4 976.0,834.6 982.0,837.7 988.0,840.6 994.0,843.2 1000.0,845.8 1006.0,848.3" fill="none" stroke="#5a4c44" stroke-width="1.2" opacity="0.24"/>
<polyline points="430.0,589.1 436.0,592.5 442.0,596.1 448.0,599.5 454.0,602.8 460.0,605.9 466.0,609.0 472.0,612.2 478.0,615.6 484.0,619.1 490.0,622.5 496.0,625.8 502.0,628.9 508.0,631.8 514.0,634.7 520.0,637.6 526.0,640.6 532.0,643.9 538.0,647.2 544.0,650.4 550.0,653.6 556.0,656.6 562.0,659.5 568.0,662.6 574.0,665.9 580.0,669.4 586.0,673.0 592.0,676.5 598.0,679.9 604.0,683.1 610.0,686.1 616.0,689.2 622.0,692.4 628.0,695.7 634.0,699.1 640.0,702.4 646.0,705.5 652.0,708.5 658.0,711.3 664.0,714.1 670.0,717.1 676.0,720.3 682.0,723.7 688.0,727.1 694.0,730.4 700.0,733.5 706.0,736.6 712.0,739.7 718.0,742.9 724.0,746.3 730.0,749.9 736.0,753.5 742.0,756.9 748.0,760.1 754.0,763.1 760.0,766.1 766.0,769.1 772.0,772.2 778.0,775.5 784.0,778.8 790.0,782.0 796.0,785.0 802.0,787.9 808.0,790.7 814.0,793.7 820.0,796.9 826.0,800.3 832.0,803.8 838.0,807.2 844.0,810.6 850.0,813.7 856.0,816.8 862.0,820.0 868.0,823.3 874.0,826.8 880.0,830.3 886.0,833.7 892.0,837.0 898.0,840.0 904.0,842.8 910.0,845.7 916.0,848.7 922.0,851.9 928.0,855.2 934.0,858.4 940.0,861.6 946.0,864.6 952.0,867.5 958.0,870.5 964.0,873.7 970.0,877.1 976.0,880.6 982.0,884.2 988.0,887.6 994.0,890.9 1000.0,894.0 1006.0,897.1" fill="none" stroke="#5a4c44" stroke-width="0.8" opacity="0.27"/>
<polyline points="430.0,595.7 436.0,598.6 442.0,601.6 448.0,604.7 454.0,607.9 460.0,611.1 466.0,614.4 472.0,617.6 478.0,620.8 484.0,623.8 490.0,626.8 496.0,629.8 502.0,632.7 508.0,635.7 514.0,638.7 520.0,641.9 526.0,645.1 532.0,648.4 538.0,651.7 544.0,655.0 550.0,658.3 556.0,661.5 562.0,664.5 568.0,667.4 574.0,670.2 580.0,673.0 586.0,675.7 592.0,678.5 598.0,681.4 604.0,684.3 610.0,687.3 616.0,690.4 622.0,693.5 628.0,696.6 634.0,699.7 640.0,702.6 646.0,705.5 652.0,708.3 658.0,711.0 664.0,713.8 670.0,716.6 676.0,719.5 682.0,722.6 688.0,725.7 694.0,729.0 700.0,732.3 706.0,735.7 712.0,739.0 718.0,742.2 724.0,745.3 730.0,748.4 736.0,751.3 742.0,754.3 748.0,757.2 754.0,760.2 760.0,763.3 766.0,766.4 772.0,769.6 778.0,772.9 784.0,776.1 790.0,779.3 796.0,782.4 802.0,785.4 808.0,788.3 814.0,791.0 820.0,793.8 826.0,796.4 832.0,799.2 838.0,802.0 844.0,804.9 850.0,807.8 856.0,810.9 862.0,814.1 868.0,817.2 874.0,820.3 880.0,823.4 886.0,826.3 892.0,829.2 898.0,832.1 904.0,834.9 910.0,837.8 916.0,840.8 922.0,843.9 928.0,847.1 934.0,850.3 940.0,853.7 946.0,857.1 952.0,860.4 958.0,863.7 964.0,866.9 970.0,869.9 976.0,872.9 982.0,875.8 988.0,878.6 994.0,881.5 1000.0,884.5 1006.0,887.5" fill="none" stroke="#5a4c44" stroke-width="0.8" opacity="0.18"/>
<polyline points="430.0,603.4 436.0,606.9 442.0,610.2 448.0,613.5 454.0,617.0 460.0,620.7 466.0,624.5 472.0,628.2 478.0,631.7 484.0,634.8 490.0,637.6 496.0,640.5 502.0,643.6 508.0,646.9 514.0,650.6 520.0,654.3 526.0,658.0 532.0,661.4 538.0,664.7 544.0,667.9 550.0,671.3 556.0,675.1 562.0,679.1 568.0,683.2 574.0,687.2 580.0,690.9 586.0,694.3 592.0,697.4 598.0,700.6 604.0,703.9 610.0,707.4 616.0,711.1 622.0,714.7 628.0,718.0 634.0,721.1 640.0,724.0 646.0,726.9 652.0,730.1 658.0,733.5 664.0,737.3 670.0,741.3 676.0,745.1 682.0,748.7 688.0,752.1 694.0,755.4 700.0,758.9 706.0,762.6 712.0,766.5 718.0,770.5 724.0,774.4 730.0,778.0 736.0,781.3 742.0,784.3 748.0,787.2 754.0,790.4 760.0,793.8 766.0,797.4 772.0,801.0 778.0,804.4 784.0,807.6 790.0,810.6 796.0,813.7 802.0,816.9 808.0,820.5 814.0,824.5 820.0,828.5 826.0,832.5 832.0,836.2 838.0,839.7 844.0,843.0 850.0,846.3 856.0,849.9 862.0,853.7 868.0,857.6 874.0,861.3 880.0,864.8 886.0,867.9 892.0,870.8 898.0,873.6 904.0,876.7 910.0,880.1 916.0,883.7 922.0,887.4 928.0,891.0 934.0,894.4 940.0,897.6 946.0,900.8 952.0,904.2 958.0,907.9 964.0,911.9 970.0,916.0 976.0,920.0 982.0,923.7 988.0,927.1 994.0,930.3 1000.0,933.5 1006.0,936.9" fill="none" stroke="#5a4c44" stroke-width="1.0" opacity="0.27"/>
<polyline points="430.0,607.7 436.0,610.1 442.0,612.5 448.0,614.9 454.0,617.4 460.0,620.0 466.0,622.7 472.0,625.6 478.0,628.6 484.0,631.7 490.0,634.7 496.0,637.7 502.0,640.6 508.0,643.4 514.0,646.1 520.0,648.7 526.0,651.4 532.0,654.2 538.0,657.1 544.0,660.2 550.0,663.3 556.0,666.6 562.0,669.8 568.0,673.0 574.0,676.1 580.0,679.0 586.0,681.8 592.0,684.5 598.0,687.0 604.0,689.5 610.0,692.1 616.0,694.8 622.0,697.5 628.0,700.4 634.0,703.3 640.0,706.2 646.0,709.1 652.0,711.9 658.0,714.6 664.0,717.2 670.0,719.6 676.0,722.0 682.0,724.5 688.0,727.0 694.0,729.7 700.0,732.5 706.0,735.5 712.0,738.6 718.0,741.8 724.0,745.0 730.0,748.1 736.0,751.1 742.0,753.9 748.0,756.7 754.0,759.4 760.0,762.2 766.0,764.9 772.0,767.8 778.0,770.8 784.0,773.9 790.0,777.1 796.0,780.3 802.0,783.4 808.0,786.4 814.0,789.2 820.0,791.9 826.0,794.4 832.0,796.9 838.0,799.3 844.0,801.8 850.0,804.3 856.0,807.0 862.0,809.8 868.0,812.7 874.0,815.6 880.0,818.5 886.0,821.4 892.0,824.1 898.0,826.8 904.0,829.4 910.0,831.9 916.0,834.4 922.0,837.1 928.0,839.8 934.0,842.8 940.0,845.9 946.0,849.1 952.0,852.3 958.0,855.5 964.0,858.7 970.0,861.7 976.0,864.6 982.0,867.4 988.0,870.1 994.0,872.8 1000.0,875.5 1006.0,878.3" fill="none" stroke="#5a4c44" stroke-width="0.8" opacity="0.31"/>
<polyline points="430.0,613.8 436.0,616.0 442.0,618.4 448.0,621.2 454.0,624.2 460.0,627.3 466.0,630.1 472.0,632.4 478.0,634.2 484.0,635.8 490.0,637.6 496.0,639.8 502.0,642.6 508.0,645.9 514.0,649.3 520.0,652.5 526.0,655.3 532.0,657.8 538.0,660.3 544.0,662.9 550.0,666.0 556.0,669.5 562.0,673.2 568.0,676.8 574.0,680.0 580.0,682.5 586.0,684.6 592.0,686.4 598.0,688.5 604.0,690.9 610.0,693.7 616.0,696.7 622.0,699.5 628.0,701.9 634.0,704.0 640.0,705.8 646.0,707.7 652.0,710.0 658.0,713.0 664.0,716.5 670.0,720.1 676.0,723.7 682.0,726.8 688.0,729.5 694.0,731.9 700.0,734.5 706.0,737.3 712.0,740.5 718.0,744.0 724.0,747.4 730.0,750.4 736.0,752.8 742.0,754.7 748.0,756.4 754.0,758.2 760.0,760.4 766.0,763.1 772.0,766.0 778.0,769.1 784.0,771.8 790.0,774.2 796.0,776.3 802.0,778.4 808.0,780.9 814.0,784.0 820.0,787.5 826.0,791.4 832.0,795.1 838.0,798.3 844.0,801.1 850.0,803.4 856.0,805.7 862.0,808.2 868.0,811.1 874.0,814.2 880.0,817.4 886.0,820.3 892.0,822.6 898.0,824.5 904.0,826.1 910.0,827.8 916.0,829.9 922.0,832.6 928.0,835.8 934.0,839.1 940.0,842.2 946.0,844.9 952.0,847.4 958.0,849.7 964.0,852.3 970.0,855.3 976.0,858.9 982.0,862.7 988.0,866.3 994.0,869.6 1000.0,872.3 1006.0,874.5" fill="none" stroke="#5a4c44" stroke-width="1.4" opacity="0.14"/>
<polyline points="430.0,619.3 436.0,622.5 442.0,625.5 448.0,628.4 454.0,631.4 460.0,634.5 466.0,638.0 472.0,641.7 478.0,645.5 484.0,649.3 490.0,653.0 496.0,656.4 502.0,659.6 508.0,662.7 514.0,665.8 520.0,669.0 526.0,672.4 532.0,675.9 538.0,679.5 544.0,682.9 550.0,686.2 556.0,689.1 562.0,691.9 568.0,694.5 574.0,697.3 580.0,700.3 586.0,703.6 592.0,707.0 598.0,710.6 604.0,714.1 610.0,717.4 616.0,720.6 622.0,723.7 628.0,726.7 634.0,730.0 640.0,733.4 646.0,737.1 652.0,741.0 658.0,744.8 664.0,748.5 670.0,751.9 676.0,755.0 682.0,758.0 688.0,760.9 694.0,764.0 700.0,767.1 706.0,770.5 712.0,773.9 718.0,777.3 724.0,780.6 730.0,783.5 736.0,786.4 742.0,789.1 748.0,791.9 754.0,794.9 760.0,798.2 766.0,801.8 772.0,805.5 778.0,809.2 784.0,812.7 790.0,816.0 796.0,819.2 802.0,822.4 808.0,825.6 814.0,829.0 820.0,832.6 826.0,836.3 832.0,840.1 838.0,843.7 844.0,847.0 850.0,850.1 856.0,852.9 862.0,855.7 868.0,858.6 874.0,861.6 880.0,864.9 886.0,868.2 892.0,871.6 898.0,874.9 904.0,878.1 910.0,881.0 916.0,883.9 922.0,886.8 928.0,889.9 934.0,893.3 940.0,896.9 946.0,900.7 952.0,904.5 958.0,908.2 964.0,911.6 970.0,914.9 976.0,918.0 982.0,921.1 988.0,924.4 994.0,927.8 1000.0,931.4 1006.0,935.0" fill="none" stroke="#5a4c44" stroke-width="1.0" opacity="0.14"/>
<polyline points="430.0,622.4 436.0,625.7 442.0,629.1 448.0,632.5 454.0,635.9 460.0,639.2 466.0,642.3 472.0,645.2 478.0,647.9 484.0,650.5 490.0,653.1 496.0,655.7 502.0,658.4 508.0,661.3 514.0,664.3 520.0,667.5 526.0,670.7 532.0,674.0 538.0,677.2 544.0,680.3 550.0,683.2 556.0,686.1 562.0,688.9 568.0,691.8 574.0,694.7 580.0,697.8 586.0,701.0 592.0,704.4 598.0,708.0 604.0,711.6 610.0,715.2 616.0,718.7 622.0,722.0 628.0,725.2 634.0,728.2 640.0,731.0 646.0,733.9 652.0,736.8 658.0,739.7 664.0,742.8 670.0,746.0 676.0,749.3 682.0,752.5 688.0,755.8 694.0,758.9 700.0,761.8 706.0,764.6 712.0,767.2 718.0,769.8 724.0,772.4 730.0,775.0 736.0,777.8 742.0,780.8 748.0,784.0 754.0,787.3 760.0,790.7 766.0,794.1 772.0,797.4 778.0,800.6 784.0,803.7 790.0,806.6 796.0,809.6 802.0,812.5 808.0,815.6 814.0,818.7 820.0,822.1 826.0,825.5 832.0,829.1 838.0,832.7 844.0,836.2 850.0,839.5 856.0,842.7 862.0,845.7 868.0,848.5 874.0,851.3 880.0,854.0 886.0,856.7 892.0,859.6 898.0,862.6 904.0,865.7 910.0,868.9 916.0,872.1 922.0,875.3 928.0,878.3 934.0,881.2 940.0,884.0 946.0,886.6 952.0,889.3 958.0,891.9 964.0,894.8 970.0,897.7 976.0,900.9 982.0,904.3 988.0,907.8 994.0,911.3 1000.0,914.8 1006.0,918.2" fill="none" stroke="#5a4c44" stroke-width="2.2" opacity="0.31"/>
<polyline points="430.0,630.8 436.0,634.4 442.0,638.0 448.0,641.4 454.0,644.6 460.0,647.8 466.0,650.8 472.0,653.8 478.0,656.9 484.0,660.1 490.0,663.4 496.0,666.9 502.0,670.4 508.0,673.9 514.0,677.4 520.0,680.8 526.0,684.1 532.0,687.4 538.0,690.6 544.0,693.8 550.0,697.1 556.0,700.5 562.0,704.1 568.0,707.8 574.0,711.6 580.0,715.4 586.0,719.2 592.0,722.8 598.0,726.3 604.0,729.7 610.0,733.0 616.0,736.2 622.0,739.5 628.0,742.9 634.0,746.3 640.0,749.8 646.0,753.4 652.0,757.0 658.0,760.5 664.0,763.9 670.0,767.1 676.0,770.2 682.0,773.2 688.0,776.2 694.0,779.3 700.0,782.5 706.0,785.8 712.0,789.2 718.0,792.8 724.0,796.4 730.0,800.1 736.0,803.6 742.0,807.1 748.0,810.4 754.0,813.7 760.0,817.0 766.0,820.4 772.0,823.8 778.0,827.4 784.0,831.1 790.0,834.8 796.0,838.6 802.0,842.4 808.0,846.0 814.0,849.5 820.0,852.9 826.0,856.1 832.0,859.2 838.0,862.4 844.0,865.6 850.0,868.9 856.0,872.3 862.0,875.8 868.0,879.3 874.0,882.8 880.0,886.2 886.0,889.4 892.0,892.6 898.0,895.7 904.0,898.7 910.0,901.8 916.0,905.0 922.0,908.4 928.0,911.9 934.0,915.6 940.0,919.3 946.0,923.0 952.0,926.7 958.0,930.3 964.0,933.7 970.0,937.1 976.0,940.4 982.0,943.8 988.0,947.2 994.0,950.7 1000.0,954.3 1006.0,958.0" fill="none" stroke="#5a4c44" stroke-width="1.0" opacity="0.11"/>
<polyline points="430.0,634.4 436.0,638.0 442.0,641.6 448.0,645.2 454.0,648.8 460.0,652.3 466.0,655.6 472.0,658.9 478.0,662.1 484.0,665.3 490.0,668.7 496.0,672.1 502.0,675.7 508.0,679.3 514.0,683.1 520.0,686.8 526.0,690.5 532.0,694.0 538.0,697.4 544.0,700.6 550.0,703.7 556.0,706.7 562.0,709.7 568.0,712.8 574.0,715.9 580.0,719.2 586.0,722.6 592.0,726.1 598.0,729.5 604.0,732.9 610.0,736.1 616.0,739.3 622.0,742.3 628.0,745.3 634.0,748.3 640.0,751.4 646.0,754.6 652.0,758.0 658.0,761.5 664.0,765.1 670.0,768.9 676.0,772.6 682.0,776.3 688.0,779.8 694.0,783.2 700.0,786.5 706.0,789.8 712.0,793.0 718.0,796.3 724.0,799.7 730.0,803.2 736.0,806.8 742.0,810.4 748.0,814.0 754.0,817.6 760.0,821.0 766.0,824.3 772.0,827.4 778.0,830.4 784.0,833.3 790.0,836.3 796.0,839.3 802.0,842.4 808.0,845.6 814.0,849.0 820.0,852.5 826.0,856.0 832.0,859.4 838.0,862.8 844.0,866.0 850.0,869.2 856.0,872.3 862.0,875.4 868.0,878.6 874.0,881.9 880.0,885.3 886.0,888.9 892.0,892.6 898.0,896.4 904.0,900.2 910.0,903.9 916.0,907.5 922.0,910.9 928.0,914.2 934.0,917.4 940.0,920.5 946.0,923.7 952.0,927.0 958.0,930.3 964.0,933.8 970.0,937.3 976.0,940.8 982.0,944.3 988.0,947.7 994.0,950.9 1000.0,953.9 1006.0,956.9" fill="none" stroke="#5a4c44" stroke-width="1.0" opacity="0.27"/>
<polyline points="430.0,639.6 436.0,642.3 442.0,645.2 448.0,648.4 454.0,652.0 460.0,655.7 466.0,659.5 472.0,663.2 478.0,666.7 484.0,669.8 490.0,672.6 496.0,675.3 502.0,678.1 508.0,680.9 514.0,684.1 520.0,687.3 526.0,690.7 532.0,693.9 538.0,696.8 544.0,699.5 550.0,701.9 556.0,704.2 562.0,706.7 568.0,709.4 574.0,712.4 580.0,715.8 586.0,719.3 592.0,722.8 598.0,726.2 604.0,729.3 610.0,732.3 616.0,735.2 622.0,738.1 628.0,741.3 634.0,744.7 640.0,748.3 646.0,752.1 652.0,755.8 658.0,759.2 664.0,762.2 670.0,765.0 676.0,767.5 682.0,770.0 688.0,772.6 694.0,775.5 700.0,778.6 706.0,781.8 712.0,785.1 718.0,788.1 724.0,790.9 730.0,793.5 736.0,795.9 742.0,798.5 748.0,801.2 754.0,804.3 760.0,807.8 766.0,811.5 772.0,815.2 778.0,818.8 784.0,822.1 790.0,825.2 796.0,828.2 802.0,831.1 808.0,834.1 814.0,837.3 820.0,840.7 826.0,844.3 832.0,847.8 838.0,851.2 844.0,854.2 850.0,856.8 856.0,859.3 862.0,861.6 868.0,864.1 874.0,866.8 880.0,869.8 886.0,873.0 892.0,876.3 898.0,879.5 904.0,882.6 910.0,885.4 916.0,888.1 922.0,890.8 928.0,893.6 934.0,896.8 940.0,900.2 946.0,904.0 952.0,907.8 958.0,911.5 964.0,915.0 970.0,918.1 976.0,921.0 982.0,923.8 988.0,926.6 994.0,929.6 1000.0,932.7 1006.0,936.1" fill="none" stroke="#5a4c44" stroke-width="1.4" opacity="0.16"/>
<polyline points="430.0,644.6 436.0,647.4 442.0,649.7 448.0,651.8 454.0,654.0 460.0,656.4 466.0,659.3 472.0,662.6 478.0,666.0 484.0,669.2 490.0,672.1 496.0,674.8 502.0,677.5 508.0,680.5 514.0,683.8 520.0,687.5 526.0,691.1 532.0,694.4 538.0,697.2 544.0,699.6 550.0,701.9 556.0,704.4 562.0,707.2 568.0,710.2 574.0,713.3 580.0,716.1 586.0,718.6 592.0,720.8 598.0,723.0 604.0,725.6 610.0,728.6 616.0,732.1 622.0,735.7 628.0,739.1 634.0,742.2 640.0,745.0 646.0,747.7 652.0,750.6 658.0,753.8 664.0,757.2 670.0,760.7 676.0,763.8 682.0,766.5 688.0,768.8 694.0,770.9 700.0,773.2 706.0,775.8 712.0,778.8 718.0,781.9 724.0,784.9 730.0,787.7 736.0,790.1 742.0,792.5 748.0,795.2 754.0,798.4 760.0,801.9 766.0,805.6 772.0,809.2 778.0,812.4 784.0,815.2 790.0,817.7 796.0,820.4 802.0,823.3 808.0,826.6 814.0,829.8 820.0,832.9 826.0,835.5 832.0,837.7 838.0,839.8 844.0,842.0 850.0,844.6 856.0,847.6 862.0,850.9 868.0,854.1 874.0,857.1 880.0,859.8 886.0,862.5 892.0,865.2 898.0,868.4 904.0,871.9 910.0,875.6 916.0,879.2 922.0,882.3 928.0,885.0 934.0,887.4 940.0,889.8 946.0,892.5 952.0,895.5 958.0,898.6 964.0,901.6 970.0,904.2 976.0,906.5 982.0,908.7 988.0,911.0 994.0,913.6 1000.0,916.8 1006.0,920.3" fill="none" stroke="#5a4c44" stroke-width="1.8" opacity="0.31"/>
<polyline points="430.0,647.3 436.0,650.7 442.0,653.8 448.0,656.9 454.0,659.9 460.0,663.0 466.0,666.4 472.0,670.0 478.0,673.8 484.0,677.7 490.0,681.6 496.0,685.4 502.0,688.9 508.0,692.1 514.0,695.0 520.0,697.7 526.0,700.2 532.0,702.9 538.0,705.6 544.0,708.6 550.0,711.8 556.0,715.2 562.0,718.6 568.0,721.9 574.0,725.1 580.0,728.1 586.0,730.8 592.0,733.4 598.0,736.0 604.0,738.7 610.0,741.7 616.0,745.0 622.0,748.6 628.0,752.4 634.0,756.3 640.0,760.3 646.0,764.0 652.0,767.6 658.0,770.9 664.0,774.0 670.0,777.0 676.0,780.1 682.0,783.2 688.0,786.6 694.0,790.2 700.0,793.9 706.0,797.6 712.0,801.2 718.0,804.7 724.0,807.8 730.0,810.7 736.0,813.2 742.0,815.7 748.0,818.2 754.0,820.7 760.0,823.6 766.0,826.6 772.0,830.0 778.0,833.4 784.0,836.9 790.0,840.3 796.0,843.5 802.0,846.6 808.0,849.4 814.0,852.2 820.0,855.1 826.0,858.1 832.0,861.5 838.0,865.1 844.0,868.9 850.0,872.9 856.0,877.0 862.0,880.9 868.0,884.5 874.0,887.9 880.0,891.0 886.0,893.9 892.0,896.8 898.0,899.7 904.0,902.8 910.0,906.0 916.0,909.5 922.0,913.0 928.0,916.5 934.0,919.9 940.0,923.0 946.0,925.9 952.0,928.5 958.0,930.9 964.0,933.4 970.0,935.9 976.0,938.7 982.0,941.7 988.0,945.1 994.0,948.7 1000.0,952.3 1006.0,956.0" fill="none" stroke="#5a4c44" stroke-width="1.0" opacity="0.13"/>
<polyline points="430.0,653.7 436.0,656.8 442.0,660.1 448.0,663.6 454.0,667.3 460.0,671.0 466.0,674.5 472.0,677.7 478.0,680.6 484.0,683.3 490.0,686.0 496.0,688.7 502.0,691.6 508.0,694.7 514.0,697.9 520.0,701.1 526.0,704.2 532.0,707.0 538.0,709.6 544.0,712.0 550.0,714.4 556.0,716.9 562.0,719.7 568.0,722.8 574.0,726.2 580.0,729.7 586.0,733.2 592.0,736.5 598.0,739.6 604.0,742.5 610.0,745.4 616.0,748.3 622.0,751.5 628.0,754.8 634.0,758.4 640.0,762.0 646.0,765.5 652.0,768.8 658.0,771.7 664.0,774.4 670.0,776.9 676.0,779.4 682.0,782.0 688.0,784.8 694.0,787.8 700.0,791.0 706.0,794.2 712.0,797.2 718.0,800.0 724.0,802.7 730.0,805.2 736.0,807.7 742.0,810.5 748.0,813.6 754.0,817.0 760.0,820.6 766.0,824.2 772.0,827.8 778.0,831.1 784.0,834.2 790.0,837.1 796.0,840.0 802.0,842.9 808.0,846.0 814.0,849.3 820.0,852.7 826.0,856.1 832.0,859.4 838.0,862.4 844.0,865.1 850.0,867.6 856.0,869.9 862.0,872.3 868.0,875.0 874.0,877.9 880.0,881.0 886.0,884.2 892.0,887.5 898.0,890.6 904.0,893.5 910.0,896.3 916.0,899.0 922.0,901.8 928.0,904.8 934.0,908.1 940.0,911.7 946.0,915.4 952.0,919.0 958.0,922.6 964.0,925.8 970.0,928.7 976.0,931.5 982.0,934.2 988.0,937.0 994.0,939.9 1000.0,943.1 1006.0,946.4" fill="none" stroke="#5a4c44" stroke-width="1.4" opacity="0.16"/>
<polyline points="430.0,660.0 436.0,662.9 442.0,665.5 448.0,667.9 454.0,670.4 460.0,672.9 466.0,675.7 472.0,678.5 478.0,681.4 484.0,684.2 490.0,686.7 496.0,688.9 502.0,691.1 508.0,693.2 514.0,695.6 520.0,698.3 526.0,701.2 532.0,704.3 538.0,707.3 544.0,710.2 550.0,712.9 556.0,715.4 562.0,718.0 568.0,720.7 574.0,723.7 580.0,726.9 586.0,730.2 592.0,733.3 598.0,736.2 604.0,738.7 610.0,741.1 616.0,743.3 622.0,745.6 628.0,748.2 634.0,750.9 640.0,753.8 646.0,756.5 652.0,759.2 658.0,761.6 664.0,763.8 670.0,766.0 676.0,768.4 682.0,771.1 688.0,774.1 694.0,777.3 700.0,780.5 706.0,783.6 712.0,786.4 718.0,789.1 724.0,791.6 730.0,794.3 736.0,797.1 742.0,800.1 748.0,803.2 754.0,806.3 760.0,809.1 766.0,811.6 772.0,813.9 778.0,816.0 784.0,818.2 790.0,820.6 796.0,823.2 802.0,826.1 808.0,829.0 814.0,831.7 820.0,834.3 826.0,836.8 832.0,839.1 838.0,841.6 844.0,844.3 850.0,847.4 856.0,850.6 862.0,853.9 868.0,857.1 874.0,860.0 880.0,862.7 886.0,865.2 892.0,867.6 898.0,870.2 904.0,873.0 910.0,875.9 916.0,878.9 922.0,881.7 928.0,884.2 934.0,886.5 940.0,888.6 946.0,890.8 952.0,893.1 958.0,895.7 964.0,898.6 970.0,901.6 976.0,904.5 982.0,907.4 988.0,910.0 994.0,912.5 1000.0,915.1 1006.0,917.8" fill="none" stroke="#5a4c44" stroke-width="1.2" opacity="0.22"/>
<polyline points="430.0,664.3 436.0,667.8 442.0,671.4 448.0,675.2 454.0,679.0 460.0,682.8 466.0,686.5 472.0,689.9 478.0,693.0 484.0,696.0 490.0,698.8 496.0,701.5 502.0,704.4 508.0,707.4 514.0,710.6 520.0,714.0 526.0,717.5 532.0,721.0 538.0,724.4 544.0,727.6 550.0,730.7 556.0,733.6 562.0,736.5 568.0,739.5 574.0,742.6 580.0,746.0 586.0,749.6 592.0,753.4 598.0,757.3 604.0,761.2 610.0,765.1 616.0,768.7 622.0,772.1 628.0,775.4 634.0,778.5 640.0,781.7 646.0,784.9 652.0,788.3 658.0,791.8 664.0,795.4 670.0,799.1 676.0,802.7 682.0,806.2 688.0,809.4 694.0,812.4 700.0,815.2 706.0,817.9 712.0,820.6 718.0,823.4 724.0,826.5 730.0,829.8 736.0,833.2 742.0,836.8 748.0,840.4 754.0,843.9 760.0,847.3 766.0,850.5 772.0,853.6 778.0,856.7 784.0,859.8 790.0,863.1 796.0,866.6 802.0,870.4 808.0,874.3 814.0,878.2 820.0,882.1 826.0,885.9 832.0,889.5 838.0,892.8 844.0,895.9 850.0,898.9 856.0,901.9 862.0,905.0 868.0,908.2 874.0,911.6 880.0,915.1 886.0,918.6 892.0,922.1 898.0,925.4 904.0,928.5 910.0,931.4 916.0,934.2 922.0,936.9 928.0,939.7 934.0,942.7 940.0,945.9 946.0,949.3 952.0,952.9 958.0,956.7 964.0,960.4 970.0,964.1 976.0,967.6 982.0,970.9 988.0,974.1 994.0,977.3 1000.0,980.5 1006.0,983.9" fill="none" stroke="#5a4c44" stroke-width="1.2" opacity="0.13"/>
<polyline points="430.0,669.1 436.0,672.6 442.0,675.2 448.0,677.3 454.0,679.6 460.0,682.6 466.0,686.1 472.0,689.4 478.0,692.2 484.0,695.0 490.0,698.4 496.0,702.5 502.0,706.5 508.0,709.7 514.0,712.3 520.0,714.9 526.0,718.1 532.0,721.5 538.0,724.4 544.0,726.6 550.0,728.8 556.0,731.7 562.0,735.4 568.0,739.2 574.0,742.4 580.0,745.2 586.0,748.4 592.0,752.2 598.0,756.2 604.0,759.6 610.0,762.1 616.0,764.3 622.0,767.0 628.0,770.3 634.0,773.5 640.0,776.1 646.0,778.4 652.0,781.2 658.0,784.9 664.0,789.0 670.0,792.6 676.0,795.6 682.0,798.5 688.0,801.8 694.0,805.6 700.0,809.0 706.0,811.5 712.0,813.6 718.0,816.0 724.0,819.1 730.0,822.6 736.0,825.7 742.0,828.3 748.0,831.1 754.0,834.7 760.0,838.8 766.0,842.7 772.0,845.8 778.0,848.4 784.0,851.3 790.0,854.7 796.0,858.1 802.0,860.8 808.0,862.9 814.0,865.1 820.0,868.2 826.0,871.8 832.0,875.4 838.0,878.4 844.0,881.3 850.0,884.6 856.0,888.6 862.0,892.6 868.0,895.8 874.0,898.2 880.0,900.6 886.0,903.6 892.0,906.9 898.0,909.9 904.0,912.3 910.0,914.6 916.0,917.5 922.0,921.3 928.0,925.3 934.0,928.7 940.0,931.6 946.0,934.6 952.0,938.2 958.0,942.1 964.0,945.4 970.0,947.8 976.0,949.9 982.0,952.5 988.0,955.7 994.0,959.1 1000.0,961.9 1006.0,964.4" fill="none" stroke="#5a4c44" stroke-width="0.8" opacity="0.11"/>
<polyline points="430.0,675.4 436.0,678.6 442.0,680.9 448.0,682.6 454.0,684.0 460.0,685.8 466.0,688.4 472.0,691.5 478.0,694.7 484.0,697.5 490.0,699.9 496.0,702.0 502.0,704.4 508.0,707.6 514.0,711.4 520.0,715.6 526.0,719.3 532.0,722.3 538.0,724.7 544.0,726.8 550.0,729.3 556.0,732.2 562.0,735.5 568.0,738.5 574.0,740.9 580.0,742.6 586.0,744.1 592.0,745.8 598.0,748.3 604.0,751.5 610.0,755.1 616.0,758.5 622.0,761.3 628.0,763.7 634.0,766.2 640.0,769.2 646.0,772.9 652.0,776.9 658.0,780.7 664.0,783.7 670.0,785.9 676.0,787.7 682.0,789.6 688.0,792.1 694.0,795.1 700.0,798.1 706.0,800.7 712.0,802.7 718.0,804.4 724.0,806.2 730.0,808.8 736.0,812.2 742.0,816.0 748.0,819.8 754.0,823.1 760.0,825.7 766.0,828.2 772.0,830.9 778.0,834.2 784.0,837.9 790.0,841.5 796.0,844.4 802.0,846.5 808.0,848.1 814.0,849.7 820.0,851.8 826.0,854.6 832.0,857.7 838.0,860.7 844.0,863.2 850.0,865.2 856.0,867.3 862.0,869.9 868.0,873.4 874.0,877.4 880.0,881.4 886.0,884.9 892.0,887.7 898.0,890.0 904.0,892.3 910.0,895.1 916.0,898.3 922.0,901.7 928.0,904.6 934.0,906.7 940.0,908.2 946.0,909.7 952.0,911.6 958.0,914.4 964.0,917.7 970.0,921.1 976.0,924.1 982.0,926.6 988.0,928.9 994.0,931.6 1000.0,934.9 1006.0,938.8" fill="none" stroke="#5a4c44" stroke-width="2.2" opacity="0.23"/>
<polyline points="430.0,680.6 436.0,684.5 442.0,687.7 448.0,689.8 454.0,691.7 460.0,694.5 466.0,698.7 472.0,703.3 478.0,707.4 484.0,710.7 490.0,713.9 496.0,717.8 502.0,722.7 508.0,727.5 514.0,731.1 520.0,733.5 526.0,735.6 532.0,738.5 538.0,742.3 544.0,746.0 550.0,748.8 556.0,751.0 562.0,753.6 568.0,757.4 574.0,762.4 580.0,767.2 586.0,771.2 592.0,774.3 598.0,777.5 604.0,781.6 610.0,786.2 616.0,790.1 622.0,792.7 628.0,794.5 634.0,796.7 640.0,800.0 646.0,804.0 652.0,807.8 658.0,810.7 664.0,813.4 670.0,816.8 676.0,821.5 682.0,826.8 688.0,831.3 694.0,834.6 700.0,837.3 706.0,840.4 712.0,844.3 718.0,848.4 724.0,851.5 730.0,853.5 736.0,855.3 742.0,858.1 748.0,862.2 754.0,866.7 760.0,870.6 766.0,873.7 772.0,876.8 778.0,881.0 784.0,886.0 790.0,890.8 796.0,894.5 802.0,897.0 808.0,899.3 814.0,902.3 820.0,906.1 826.0,909.8 832.0,912.5 838.0,914.5 844.0,917.0 850.0,920.8 856.0,925.6 862.0,930.3 868.0,934.1 874.0,937.2 880.0,940.7 886.0,945.0 892.0,949.7 898.0,953.7 904.0,956.3 910.0,958.2 916.0,960.5 922.0,963.8 928.0,967.8 934.0,971.3 940.0,974.0 946.0,976.6 952.0,980.0 958.0,984.7 964.0,989.9 970.0,994.4 976.0,997.7 982.0,1000.5 988.0,1003.9 994.0,1008.0 1000.0,1012.1 1006.0,1015.2" fill="none" stroke="#5a4c44" stroke-width="1.8" opacity="0.28"/>
<polyline points="430.0,684.3 436.0,687.5 442.0,690.6 448.0,693.6 454.0,696.7 460.0,699.8 466.0,703.0 472.0,706.3 478.0,709.7 484.0,713.1 490.0,716.6 496.0,720.0 502.0,723.4 508.0,726.7 514.0,730.0 520.0,733.2 526.0,736.4 532.0,739.7 538.0,743.0 544.0,746.5 550.0,750.0 556.0,753.6 562.0,757.2 568.0,760.8 574.0,764.3 580.0,767.8 586.0,771.1 592.0,774.3 598.0,777.5 604.0,780.7 610.0,783.9 616.0,787.1 622.0,790.5 628.0,793.9 634.0,797.3 640.0,800.7 646.0,804.0 652.0,807.3 658.0,810.5 664.0,813.6 670.0,816.7 676.0,819.8 682.0,822.9 688.0,826.1 694.0,829.4 700.0,832.8 706.0,836.3 712.0,839.8 718.0,843.3 724.0,846.8 730.0,850.2 736.0,853.6 742.0,856.9 748.0,860.1 754.0,863.4 760.0,866.7 766.0,870.1 772.0,873.6 778.0,877.1 784.0,880.7 790.0,884.3 796.0,887.8 802.0,891.2 808.0,894.5 814.0,897.7 820.0,900.9 826.0,904.0 832.0,907.1 838.0,910.2 844.0,913.5 850.0,916.8 856.0,920.2 862.0,923.6 868.0,926.9 874.0,930.3 880.0,933.6 886.0,936.7 892.0,939.9 898.0,943.0 904.0,946.2 910.0,949.4 916.0,952.7 922.0,956.1 928.0,959.6 934.0,963.2 940.0,966.7 946.0,970.3 952.0,973.8 958.0,977.2 964.0,980.6 970.0,983.9 976.0,987.1 982.0,990.4 988.0,993.7 994.0,997.1 1000.0,1000.5 1006.0,1004.0" fill="none" stroke="#5a4c44" stroke-width="2.2" opacity="0.14"/>
<polyline points="430.0,693.7 436.0,695.1 442.0,697.2 448.0,700.7 454.0,704.6 460.0,707.8 466.0,710.3 472.0,713.4 478.0,717.9 484.0,723.1 490.0,727.3 496.0,730.0 502.0,732.5 508.0,735.8 514.0,739.7 520.0,742.8 526.0,744.7 532.0,746.2 538.0,749.0 544.0,753.2 550.0,757.6 556.0,760.9 562.0,763.7 568.0,767.4 574.0,772.2 580.0,777.0 586.0,780.3 592.0,782.2 598.0,784.4 604.0,787.6 610.0,791.3 616.0,794.1 622.0,795.9 628.0,798.1 634.0,801.9 640.0,806.8 646.0,811.3 652.0,814.5 658.0,817.4 664.0,821.2 670.0,825.8 676.0,829.7 682.0,832.0 688.0,833.5 694.0,835.7 700.0,839.3 706.0,843.0 712.0,845.9 718.0,848.2 724.0,851.3 730.0,855.9 736.0,861.1 742.0,865.2 748.0,867.9 754.0,870.6 760.0,874.2 766.0,878.2 772.0,881.3 778.0,883.0 784.0,884.5 790.0,887.4 796.0,891.6 802.0,895.6 808.0,898.7 814.0,901.5 820.0,905.3 826.0,910.3 832.0,915.0 838.0,918.3 844.0,920.4 850.0,922.8 856.0,926.2 862.0,929.9 868.0,932.4 874.0,934.1 880.0,936.3 886.0,940.1 892.0,944.9 898.0,949.1 904.0,952.2 910.0,955.3 916.0,959.3 922.0,964.1 928.0,968.0 934.0,970.3 940.0,971.9 946.0,974.3 952.0,977.9 958.0,981.4 964.0,984.0 970.0,986.1 976.0,989.2 982.0,993.9 988.0,999.0 994.0,1002.9 1000.0,1005.7 1006.0,1008.7" fill="none" stroke="#5a4c44" stroke-width="1.0" opacity="0.18"/>
<polyline points="430.0,697.2 436.0,700.6 442.0,704.4 448.0,708.1 454.0,711.7 460.0,714.7 466.0,717.3 472.0,719.6 478.0,722.1 484.0,725.1 490.0,728.8 496.0,732.8 502.0,737.0 508.0,741.1 514.0,744.7 520.0,748.0 526.0,751.1 532.0,754.5 538.0,758.4 544.0,762.6 550.0,767.1 556.0,771.4 562.0,775.2 568.0,778.4 574.0,781.1 580.0,783.6 586.0,786.3 592.0,789.5 598.0,793.0 604.0,796.7 610.0,800.3 616.0,803.5 622.0,806.2 628.0,808.8 634.0,811.5 640.0,814.8 646.0,818.6 652.0,822.9 658.0,827.4 664.0,831.7 670.0,835.5 676.0,838.9 682.0,842.1 688.0,845.3 694.0,848.9 700.0,852.9 706.0,857.1 712.0,861.1 718.0,864.7 724.0,867.7 730.0,870.2 736.0,872.6 742.0,875.1 748.0,878.1 754.0,881.7 760.0,885.5 766.0,889.2 772.0,892.7 778.0,895.8 784.0,898.7 790.0,901.7 796.0,905.1 802.0,909.0 808.0,913.5 814.0,918.1 820.0,922.4 826.0,926.3 832.0,929.7 838.0,932.6 844.0,935.6 850.0,938.9 856.0,942.5 862.0,946.4 868.0,950.2 874.0,953.7 880.0,956.6 886.0,959.0 892.0,961.3 898.0,963.9 904.0,967.0 910.0,970.6 916.0,974.7 922.0,978.8 928.0,982.6 934.0,986.0 940.0,989.2 946.0,992.3 952.0,995.8 958.0,999.8 964.0,1004.2 970.0,1008.7 976.0,1013.0 982.0,1016.7 988.0,1019.9 994.0,1022.6 1000.0,1025.3 1006.0,1028.2" fill="none" stroke="#5a4c44" stroke-width="1.2" opacity="0.15"/>
<polyline points="430.0,699.0 436.0,701.4 442.0,704.3 448.0,707.6 454.0,710.9 460.0,713.9 466.0,716.5 472.0,719.1 478.0,721.9 484.0,725.2 490.0,728.8 496.0,732.4 502.0,735.7 508.0,738.5 514.0,740.9 520.0,743.1 526.0,745.7 532.0,748.5 538.0,751.6 544.0,754.5 550.0,757.0 556.0,759.2 562.0,761.3 568.0,763.7 574.0,766.6 580.0,769.9 586.0,773.5 592.0,776.8 598.0,779.8 604.0,782.5 610.0,785.1 616.0,788.1 622.0,791.5 628.0,795.0 634.0,798.3 640.0,801.2 646.0,803.4 652.0,805.5 658.0,807.7 664.0,810.3 670.0,813.2 676.0,816.3 682.0,819.1 688.0,821.6 694.0,823.9 700.0,826.3 706.0,829.2 712.0,832.6 718.0,836.2 724.0,839.8 730.0,843.0 736.0,845.8 742.0,848.4 748.0,851.0 754.0,854.0 760.0,857.3 766.0,860.5 772.0,863.4 778.0,865.7 784.0,867.7 790.0,869.7 796.0,872.1 802.0,875.0 808.0,878.2 814.0,881.4 820.0,884.3 826.0,886.9 832.0,889.4 838.0,892.2 844.0,895.4 850.0,899.1 856.0,902.8 862.0,906.1 868.0,908.9 874.0,911.4 880.0,913.7 886.0,916.3 892.0,919.3 898.0,922.4 904.0,925.3 910.0,927.8 916.0,929.9 922.0,932.0 928.0,934.3 934.0,937.1 940.0,940.4 946.0,943.9 952.0,947.1 958.0,950.0 964.0,952.7 970.0,955.4 976.0,958.5 982.0,961.9 988.0,965.5 994.0,968.9 1000.0,971.7 1006.0,974.1" fill="none" stroke="#5a4c44" stroke-width="1.0" opacity="0.27"/>
<polyline points="430.0,705.7 436.0,708.5 442.0,711.4 448.0,714.6 454.0,717.9 460.0,721.0 466.0,723.8 472.0,726.3 478.0,728.6 484.0,730.9 490.0,733.5 496.0,736.4 502.0,739.5 508.0,742.7 514.0,745.6 520.0,748.3 526.0,751.0 532.0,753.7 538.0,756.8 544.0,760.1 550.0,763.7 556.0,767.1 562.0,770.3 568.0,773.2 574.0,775.8 580.0,778.4 586.0,781.2 592.0,784.2 598.0,787.3 604.0,790.3 610.0,793.0 616.0,795.5 622.0,797.8 628.0,800.2 634.0,802.8 640.0,805.9 646.0,809.2 652.0,812.5 658.0,815.6 664.0,818.4 670.0,821.2 676.0,824.0 682.0,827.1 688.0,830.4 694.0,833.9 700.0,837.3 706.0,840.3 712.0,843.0 718.0,845.5 724.0,847.9 730.0,850.5 736.0,853.4 742.0,856.5 748.0,859.5 754.0,862.2 760.0,864.8 766.0,867.2 772.0,869.7 778.0,872.5 784.0,875.7 790.0,879.1 796.0,882.6 802.0,885.8 808.0,888.8 814.0,891.5 820.0,894.3 826.0,897.3 832.0,900.5 838.0,903.8 844.0,907.1 850.0,910.0 856.0,912.5 862.0,914.8 868.0,917.2 874.0,919.7 880.0,922.6 886.0,925.7 892.0,928.8 898.0,931.7 904.0,934.3 910.0,936.9 916.0,939.6 922.0,942.5 928.0,945.9 934.0,949.4 940.0,952.9 946.0,956.1 952.0,959.0 958.0,961.7 964.0,964.4 970.0,967.2 976.0,970.2 982.0,973.4 988.0,976.5 994.0,979.3 1000.0,981.7 1006.0,984.0" fill="none" stroke="#5a4c44" stroke-width="2.2" opacity="0.24"/>
<polyline points="430.0,711.1 436.0,714.4 442.0,717.8 448.0,721.2 454.0,724.6 460.0,727.8 466.0,730.9 472.0,734.0 478.0,737.0 484.0,740.1 490.0,743.2 496.0,746.5 502.0,749.9 508.0,753.4 514.0,757.0 520.0,760.5 526.0,764.0 532.0,767.3 538.0,770.4 544.0,773.4 550.0,776.3 556.0,779.1 562.0,782.0 568.0,784.9 574.0,788.0 580.0,791.1 586.0,794.3 592.0,797.6 598.0,800.8 604.0,803.9 610.0,806.9 616.0,809.8 622.0,812.6 628.0,815.4 634.0,818.3 640.0,821.2 646.0,824.3 652.0,827.6 658.0,831.0 664.0,834.5 670.0,838.1 676.0,841.5 682.0,844.9 688.0,848.1 694.0,851.3 700.0,854.3 706.0,857.4 712.0,860.5 718.0,863.7 724.0,867.0 730.0,870.4 736.0,873.9 742.0,877.3 748.0,880.7 754.0,883.9 760.0,887.0 766.0,889.9 772.0,892.7 778.0,895.4 784.0,898.2 790.0,901.1 796.0,904.0 802.0,907.1 808.0,910.3 814.0,913.6 820.0,916.9 826.0,920.1 832.0,923.2 838.0,926.2 844.0,929.1 850.0,932.0 856.0,935.0 862.0,938.0 868.0,941.2 874.0,944.5 880.0,948.0 886.0,951.6 892.0,955.1 898.0,958.7 904.0,962.1 910.0,965.4 916.0,968.5 922.0,971.5 928.0,974.5 934.0,977.5 940.0,980.6 946.0,983.8 952.0,987.1 958.0,990.4 964.0,993.7 970.0,997.0 976.0,1000.2 982.0,1003.2 988.0,1006.1 994.0,1008.9 1000.0,1011.6 1006.0,1014.3" fill="none" stroke="#5a4c44" stroke-width="0.8" opacity="0.17"/>
<polyline points="430.0,716.1 436.0,719.3 442.0,722.3 448.0,725.2 454.0,727.9 460.0,730.6 466.0,733.5 472.0,736.6 478.0,740.1 484.0,743.8 490.0,747.6 496.0,751.4 502.0,755.0 508.0,758.2 514.0,761.1 520.0,763.7 526.0,766.2 532.0,768.7 538.0,771.3 544.0,774.2 550.0,777.3 556.0,780.5 562.0,783.7 568.0,786.8 574.0,789.5 580.0,792.0 586.0,794.3 592.0,796.5 598.0,798.8 604.0,801.4 610.0,804.3 616.0,807.5 622.0,811.1 628.0,814.7 634.0,818.3 640.0,821.7 646.0,824.8 652.0,827.7 658.0,830.5 664.0,833.3 670.0,836.3 676.0,839.6 682.0,843.1 688.0,846.7 694.0,850.4 700.0,854.0 706.0,857.2 712.0,860.1 718.0,862.7 724.0,865.0 730.0,867.3 736.0,869.6 742.0,872.2 748.0,875.0 754.0,878.1 760.0,881.3 766.0,884.5 772.0,887.5 778.0,890.2 784.0,892.8 790.0,895.2 796.0,897.6 802.0,900.2 808.0,903.1 814.0,906.4 820.0,909.9 826.0,913.7 832.0,917.5 838.0,921.1 844.0,924.5 850.0,927.6 856.0,930.5 862.0,933.2 868.0,936.0 874.0,938.9 880.0,942.1 886.0,945.5 892.0,948.9 898.0,952.4 904.0,955.6 910.0,958.5 916.0,961.1 922.0,963.4 928.0,965.6 934.0,967.8 940.0,970.1 946.0,972.8 952.0,975.8 958.0,979.0 964.0,982.3 970.0,985.6 976.0,988.7 982.0,991.6 988.0,994.3 994.0,996.9 1000.0,999.6 1006.0,1002.5" fill="none" stroke="#5a4c44" stroke-width="1.0" opacity="0.25"/>
</g>
<rect x="430" y="180" width="600" height="300" fill="#b09a8a" opacity="0.0"/>
</g>
<polyline points="455.0,292.0 762.0,194.5 987.2,336.6 667.7,450.5 455.0,292.0" fill="none" stroke="#ee92c8" stroke-width="1.3"/>
<polygon points="442.5,295.0 455.0,292.0 667.7,450.5 655.9,454.7" fill="url(#dotTex)" stroke="#ee92c8" stroke-width="1.3" stroke-linejoin="round" />
<polygon points="762.0,194.5 772.0,191.0 997.9,334.4 987.2,336.6" fill="url(#dotTex)" stroke="#ee92c8" stroke-width="1.3" stroke-linejoin="round" />
<polygon points="667.7,450.5 987.2,336.6 987.2,349.1 669.6,462.3" fill="url(#stripTex)" stroke="#ee92c8" stroke-width="1.3" stroke-linejoin="round" />
<polygon points="669.6,462.3 986.3,349.4 986.3,355.5 669.6,468.4" fill="url(#stripTex)" stroke="#ee92c8" stroke-width="1.3" stroke-linejoin="round" />
<polygon points="986.3,336.6 997.9,334.4 997.9,385.0 986.3,385.0" fill="url(#stripTex)" stroke="#ee92c8" stroke-width="1.3" stroke-linejoin="round" />
<polygon points="674.6,702.9 715.3,737.5 715.3,737.5 674.6,754.3" fill="url(#floorTex)" />
<polyline points="674.6,702.9 715.3,737.5" fill="none" stroke="#ee92c8" stroke-width="1.3"/>
<polygon points="722.6,685.9 762.3,718.2 762.3,718.1 722.6,734.5" fill="url(#floorTex)" />
<polyline points="722.6,685.9 762.3,718.2" fill="none" stroke="#ee92c8" stroke-width="1.3"/>
<polygon points="769.5,668.8 809.2,700.4 809.2,698.8 769.5,715.1" fill="url(#floorTex)" />
<polyline points="769.5,668.8 809.2,700.4" fill="none" stroke="#ee92c8" stroke-width="1.3"/>
<polygon points="815.6,652.5 854.4,682.3 854.4,680.1 815.6,696.1" fill="url(#floorTex)" />
<polyline points="815.6,652.5 854.4,682.3" fill="none" stroke="#ee92c8" stroke-width="1.3"/>
<polygon points="860.7,635.3 898.6,663.3 898.6,661.9 860.7,677.5" fill="url(#floorTex)" />
<polyline points="860.7,635.3 898.6,663.3" fill="none" stroke="#ee92c8" stroke-width="1.3"/>
<polygon points="905.8,620.0 942.9,647.1 942.9,643.6 905.8,658.9" fill="url(#floorTex)" />
<polyline points="905.8,620.0 942.9,647.1" fill="none" stroke="#ee92c8" stroke-width="1.3"/>
<polygon points="674.6,754.3 944.0,643.1 944.0,649.1 674.6,760.3" fill="url(#stripTex)" stroke="#ee92c8" stroke-width="1.3" stroke-linejoin="round" />
<polygon points="674.6,760.3 949.0,647.1 952.0,656.9 674.6,771.4" fill="url(#stripTex)" stroke="#ee92c8" stroke-width="1.3" stroke-linejoin="round" />
<polygon points="712.5,447.0 719.2,445.0 722.6,741.5 715.3,743.5" fill="url(#stripTex)" stroke="#ee92c8" stroke-width="1.3" stroke-linejoin="round" />
<polygon points="761.7,429.5 768.3,427.5 769.5,722.1 762.3,724.1" fill="url(#stripTex)" stroke="#ee92c8" stroke-width="1.3" stroke-linejoin="round" />
<polygon points="810.0,412.2 816.7,410.2 815.6,702.8 809.2,704.8" fill="url(#stripTex)" stroke="#ee92c8" stroke-width="1.3" stroke-linejoin="round" />
<polygon points="857.5,395.3 864.2,393.3 860.7,684.1 854.4,686.1" fill="url(#stripTex)" stroke="#ee92c8" stroke-width="1.3" stroke-linejoin="round" />
<polygon points="903.3,379.0 910.8,377.0 905.8,665.5 899.5,667.5" fill="url(#stripTex)" stroke="#ee92c8" stroke-width="1.3" stroke-linejoin="round" />
<polyline points="918.6,380.3 913.0,583.0" fill="none" stroke="#ee92c8" stroke-width="1.3"/>
<polygon points="906.0,582.0 913.4,583.0 913.4,622.0 906.0,622.0" fill="url(#dotTex)" stroke="#ee92c8" stroke-width="1.3" stroke-linejoin="round" />
<rect x="906.5" y="613" width="6" height="7" fill="#262626" stroke="#ee92c8" stroke-width="0.8"/>
<polygon points="655.9,454.7 667.7,450.5 675.0,771.4 664.0,776.3" fill="url(#stripTex)" stroke="#ee92c8" stroke-width="1.3" stroke-linejoin="round" />
<polyline points="442.5,295.0 460.9,601.5 664.0,776.3" fill="none" stroke="#ee92c8" stroke-width="1.3"/>
<polygon points="951.0,360.5 1180.6,505.5 1174.5,508.5 951.7,365.5" fill="url(#stripTex)" stroke="#ee92c8" stroke-width="1.3" stroke-linejoin="round" />
<polygon points="1174.5,508.5 1180.6,505.5 1160.7,805.3 1154.7,808.0" fill="url(#stripTex)" stroke="#ee92c8" stroke-width="1.3" stroke-linejoin="round" />
<polyline points="952.0,659.0 1154.7,808.0" fill="none" stroke="#ee92c8" stroke-width="1.3"/>
<line x1="715" y1="73" x2="717" y2="312" stroke="#20c020" stroke-width="1.5"/>
<line x1="816" y1="543" x2="1160" y2="796" stroke="#1818e0" stroke-width="1.2"/>
<line x1="1010" y1="702" x2="1142" y2="646.5" stroke="#788a7e" stroke-width="1"/>
</svg>
<div class="abs" style="left:156px;top:563px;width:104px;height:197px;background:#f0f0f0;border:1px solid #fff;box-shadow:0 0 0 1px #c8d0dc"></div>
<div class="abs" style="left:157px;top:564px;width:102px;height:22px;background:linear-gradient(#b6c6d8,#dde7f1)"></div>
<div class="t" style="left:158px;top:569px;font-size:12px;color:#5a6470">移動</div>
<div class="btn p" style="left:166px;top:594px;width:41px;height:16px;font-size:12px;line-height:14px">相対</div>
<div class="btn" style="left:208px;top:594px;width:42px;height:17px;font-size:12px;line-height:15px">絶対</div>
<div class="abs" style="left:166px;top:619px;width:12px;height:12px;background:#fff;border-top:1px solid #808080;border-left:1px solid #808080;box-shadow:inset 1px 1px 0 #404040"></div>
<svg class="abs" style="left:168px;top:621px" width="9" height="9" viewBox="0 0 9 9"><path d="M1 4 L3.5 7 L8 1.5" fill="none" stroke="#000" stroke-width="1.8"/></svg>
<div class="t" style="left:183px;top:621px;font-size:12px;color:#000">ハンドル</div>
<div class="t" style="left:171px;top:646px;font-size:11px;color:#e03030">X</div>
<div class="abs" style="left:186px;top:640px;width:48px;height:20px;background:#fff;border-top:2px solid #808080;border-left:2px solid #808080;border-right:1px solid #e0e0e0;border-bottom:1px solid #e0e0e0"></div>
<div class="t" style="left:189px;top:645px;font-size:11px;color:#000">0.00</div>
<div class="btn" style="left:235px;top:640px;width:15px;height:10px"></div>
<div class="btn" style="left:235px;top:650px;width:15px;height:10px"></div>
<div class="abs" style="left:241px;top:644px;width:3px;height:1px;background:#000"></div><div class="abs" style="left:242px;top:643px;width:1px;height:1px;background:#000"></div>
<div class="abs" style="left:241px;top:654px;width:3px;height:1px;background:#000"></div><div class="abs" style="left:242px;top:655px;width:1px;height:1px;background:#000"></div>
<div class="t" style="left:171px;top:674px;font-size:11px;color:#30a030">Y</div>
<div class="abs" style="left:186px;top:668px;width:48px;height:20px;background:#fff;border-top:2px solid #808080;border-left:2px solid #808080;border-right:1px solid #e0e0e0;border-bottom:1px solid #e0e0e0"></div>
<div class="t" style="left:189px;top:673px;font-size:11px;color:#000">0.00</div>
<div class="btn" style="left:235px;top:668px;width:15px;height:10px"></div>
<div class="btn" style="left:235px;top:678px;width:15px;height:10px"></div>
<div class="abs" style="left:241px;top:672px;width:3px;height:1px;background:#000"></div><div class="abs" style="left:242px;top:671px;width:1px;height:1px;background:#000"></div>
<div class="abs" style="left:241px;top:682px;width:3px;height:1px;background:#000"></div><div class="abs" style="left:242px;top:683px;width:1px;height:1px;background:#000"></div>
<div class="t" style="left:171px;top:702px;font-size:11px;color:#2020c0">Z</div>
<div class="abs" style="left:186px;top:696px;width:48px;height:20px;background:#fff;border-top:2px solid #808080;border-left:2px solid #808080;border-right:1px solid #e0e0e0;border-bottom:1px solid #e0e0e0"></div>
<div class="t" style="left:189px;top:701px;font-size:11px;color:#000">33.71</div>
<div class="btn" style="left:235px;top:696px;width:15px;height:10px"></div>
<div class="btn" style="left:235px;top:706px;width:15px;height:10px"></div>
<div class="abs" style="left:241px;top:700px;width:3px;height:1px;background:#000"></div><div class="abs" style="left:242px;top:699px;width:1px;height:1px;background:#000"></div>
<div class="abs" style="left:241px;top:710px;width:3px;height:1px;background:#000"></div><div class="abs" style="left:242px;top:711px;width:1px;height:1px;background:#000"></div>
<div class="btn" style="left:176px;top:724px;width:64px;height:25px;font-size:12px;line-height:23px;border-top:1px solid #fff;box-shadow:inset -1px -1px 0 #404040, inset -2px -2px 0 #a0a0a0, 0 0 0 1px #606060">OK</div>
<!--BODY-->
</body></html>
